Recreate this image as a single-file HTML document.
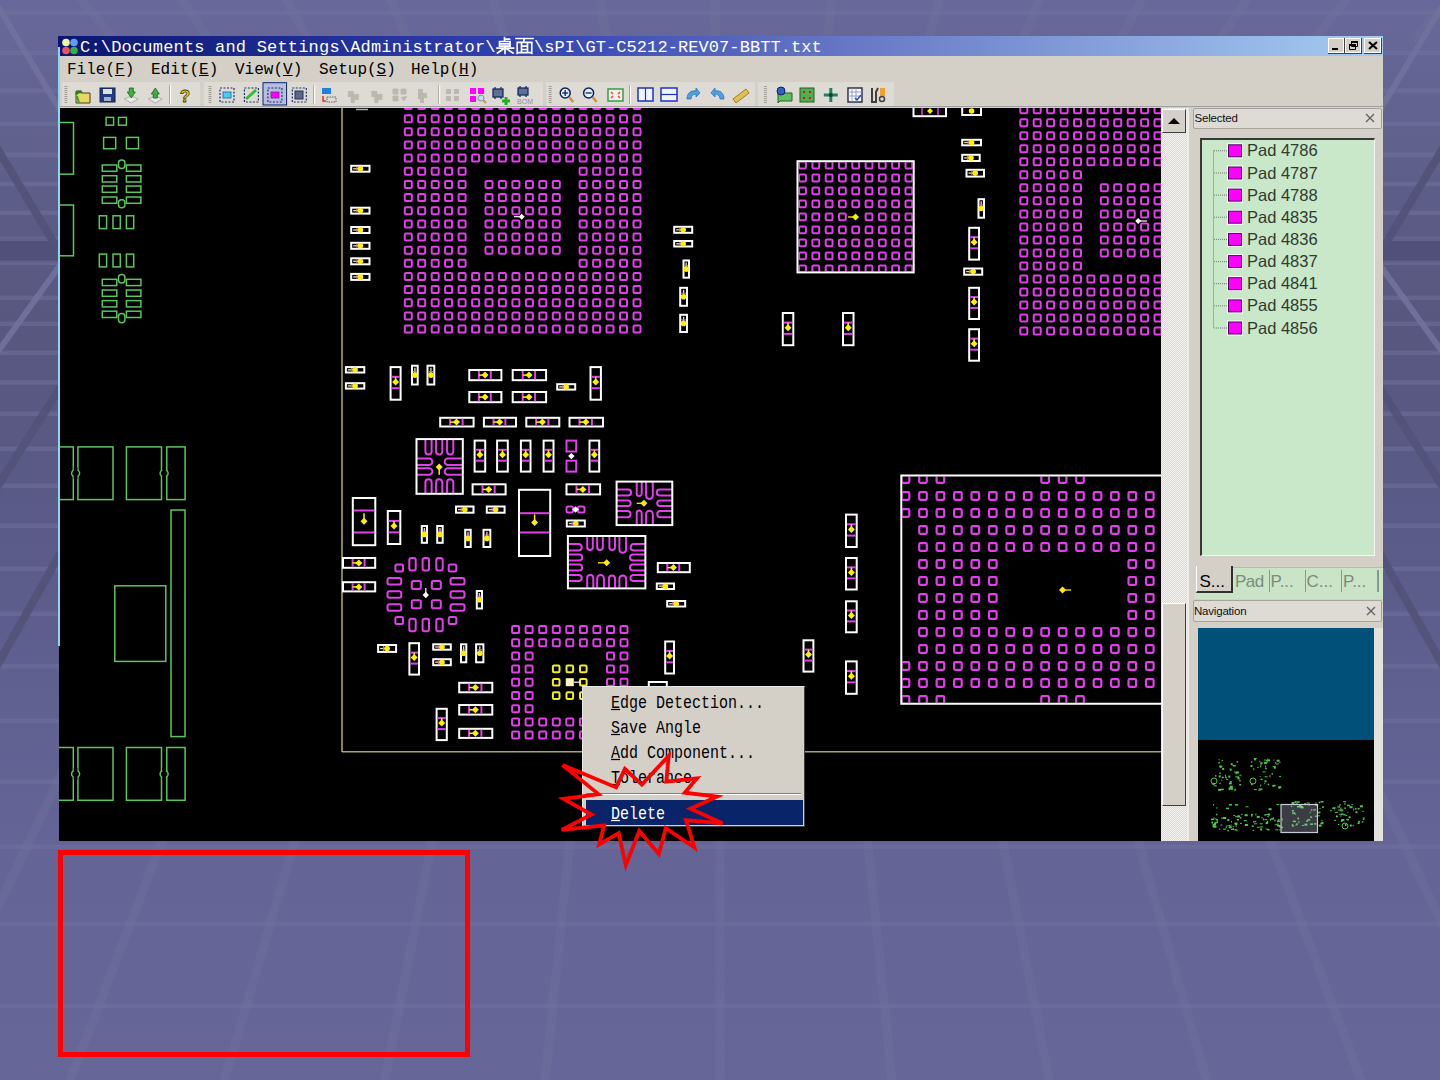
<!DOCTYPE html>
<html><head><meta charset="utf-8">
<style>
*{margin:0;padding:0;box-sizing:border-box}
html,body{width:1440px;height:1080px;overflow:hidden}
body{position:relative;background:#666699;font-family:"Liberation Sans",sans-serif}
.abs{position:absolute}
#bg{position:absolute;left:0;top:0}
#title{left:58px;top:36px;width:1325px;height:20px;background:linear-gradient(90deg,#0a1672 0%,#3040b0 34%,#6474c4 58%,#a6ccf2 100%)}
#title .t{position:absolute;left:22px;top:1px;color:#fff;font-family:"Liberation Mono",monospace;font-size:17px;line-height:22px;white-space:pre;letter-spacing:0.1px}
#menubar{left:59px;top:56px;width:1324px;height:52px;background:#d4d0c8}
.mi{position:absolute;top:4px;font-family:"Liberation Mono",monospace;font-size:16px;line-height:20px;color:#000;white-space:pre}
.mi u{text-decoration:underline}
#canvas{left:59px;top:108px;width:1102px;height:733px;background:#000;overflow:hidden}
#scroll{left:1161px;top:108px;width:26px;height:733px;background:#eceae4}
#panel{left:1187px;top:108px;width:196px;height:733px;background:#d4d0c8}
.ctx{left:582px;top:686px;width:223px;height:141px;background:#d4d0c8;border-top:1px solid #e8e6e0;border-left:1px solid #e8e6e0;border-right:1px solid #404040;border-bottom:1px solid #404040}
.ci{position:absolute;left:28px;font-family:"Liberation Mono",monospace;font-size:15px;line-height:18px;color:#000;white-space:pre;transform:scaleY(1.22);transform-origin:0 100%}
#redbox{left:58px;top:850px;width:412px;height:207px;border:5px solid #ff0000}
</style></head><body>
<svg id="bg" width="1440" height="1080" viewBox="0 0 1440 1080"><defs><linearGradient id="bgg" x1="0" y1="0" x2="0" y2="1"><stop offset="0" stop-color="#68689b"/><stop offset="0.12" stop-color="#62628f"/><stop offset="0.21" stop-color="#5b5b86"/><stop offset="0.3" stop-color="#57577f"/><stop offset="0.45" stop-color="#5a5a87"/><stop offset="0.62" stop-color="#5f5f90"/><stop offset="0.78" stop-color="#646496"/><stop offset="1" stop-color="#666699"/></linearGradient></defs>
<rect x="0" y="0" width="1440" height="1080" fill="url(#bgg)"/>
<rect x="0" y="238" width="1440" height="25" fill="#50507a"/>
<rect x="0" y="10.5" width="1440" height="4.5" fill="#72729f" opacity="0.5"/>
<rect x="0" y="50.5" width="1440" height="4.5" fill="#72729f" opacity="0.5"/>
<rect x="0" y="88.5" width="1440" height="4.5" fill="#72729f" opacity="0.5"/>
<rect x="0" y="121.5" width="1440" height="4.5" fill="#72729f" opacity="0.5"/>
<rect x="0" y="152.5" width="1440" height="4.5" fill="#72729f" opacity="0.5"/>
<rect x="0" y="181.5" width="1440" height="4.5" fill="#72729f" opacity="0.5"/>
<rect x="0" y="210.5" width="1440" height="4.5" fill="#72729f" opacity="0.5"/>
<rect x="0" y="236.5" width="1440" height="4.5" fill="#72729f" opacity="0.5"/>
<rect x="0" y="260.5" width="1440" height="4.5" fill="#72729f" opacity="0.5"/>
<rect x="0" y="295.5" width="1440" height="4.5" fill="#72729f" opacity="0.5"/>
<rect x="0" y="321.5" width="1440" height="4.5" fill="#72729f" opacity="0.5"/>
<rect x="0" y="350.5" width="1440" height="4.5" fill="#72729f" opacity="0.5"/>
<rect x="0" y="380.2" width="1440" height="4.5" fill="#72729f" opacity="0.5"/>
<rect x="0" y="411.5" width="1440" height="4.5" fill="#72729f" opacity="0.5"/>
<rect x="0" y="446.5" width="1440" height="4.5" fill="#72729f" opacity="0.5"/>
<rect x="0" y="483.5" width="1440" height="4.5" fill="#72729f" opacity="0.5"/>
<rect x="0" y="523.5" width="1440" height="4.5" fill="#72729f" opacity="0.5"/>
<rect x="0" y="566.5" width="1440" height="4.5" fill="#72729f" opacity="0.5"/>
<rect x="0" y="611.5" width="1440" height="4.5" fill="#72729f" opacity="0.5"/>
<rect x="0" y="664.0" width="1440" height="4.5" fill="#72729f" opacity="0.5"/>
<rect x="0" y="718.5" width="1440" height="4.5" fill="#72729f" opacity="0.5"/>
<rect x="0" y="779.5" width="1440" height="4.5" fill="#72729f" opacity="0.5"/>
<rect x="0" y="844.5" width="1440" height="4.5" fill="#72729f" opacity="0.5"/>
<rect x="0" y="921.5" width="1440" height="4.5" fill="#72729f" opacity="0.5"/>
<rect x="0" y="1003.5" width="1440" height="4.5" fill="#72729f" opacity="0.5"/>
<line x1="80.0" y1="-2" x2="114.6" y2="40" stroke="#72729f" stroke-width="9" opacity="0.42"/>
<line x1="180.0" y1="-2" x2="209.2" y2="40" stroke="#72729f" stroke-width="9" opacity="0.42"/>
<line x1="285.0" y1="-2" x2="308.5" y2="40" stroke="#72729f" stroke-width="9" opacity="0.42"/>
<line x1="390.0" y1="-2" x2="407.8" y2="40" stroke="#72729f" stroke-width="9" opacity="0.42"/>
<line x1="492.5" y1="-2" x2="504.8" y2="40" stroke="#72729f" stroke-width="9" opacity="0.42"/>
<line x1="600.0" y1="-2" x2="606.5" y2="40" stroke="#72729f" stroke-width="9" opacity="0.42"/>
<line x1="715.0" y1="-2" x2="715.3" y2="40" stroke="#72729f" stroke-width="9" opacity="0.42"/>
<line x1="832.5" y1="-2" x2="826.4" y2="40" stroke="#72729f" stroke-width="9" opacity="0.42"/>
<line x1="940.0" y1="-2" x2="928.1" y2="40" stroke="#72729f" stroke-width="9" opacity="0.42"/>
<line x1="1040.0" y1="-2" x2="1022.7" y2="40" stroke="#72729f" stroke-width="9" opacity="0.42"/>
<line x1="1142.5" y1="-2" x2="1119.7" y2="40" stroke="#72729f" stroke-width="9" opacity="0.42"/>
<line x1="1247.5" y1="-2" x2="1219.0" y2="40" stroke="#72729f" stroke-width="9" opacity="0.42"/>
<line x1="1347.5" y1="-2" x2="1313.6" y2="40" stroke="#72729f" stroke-width="9" opacity="0.42"/>
<line x1="1452.0" y1="-2" x2="1412.5" y2="40" stroke="#72729f" stroke-width="9" opacity="0.42"/>
<line x1="68.1" y1="760" x2="-89.0" y2="1090" stroke="#72729f" stroke-width="9" opacity="0.42"/>
<line x1="193.3" y1="760" x2="66.4" y2="1090" stroke="#72729f" stroke-width="9" opacity="0.42"/>
<line x1="318.4" y1="760" x2="221.7" y2="1090" stroke="#72729f" stroke-width="9" opacity="0.42"/>
<line x1="448.4" y1="760" x2="382.9" y2="1090" stroke="#72729f" stroke-width="9" opacity="0.42"/>
<line x1="578.3" y1="760" x2="544.1" y2="1090" stroke="#72729f" stroke-width="9" opacity="0.42"/>
<line x1="720.0" y1="760" x2="720.0" y2="1090" stroke="#72729f" stroke-width="9" opacity="0.42"/>
<line x1="859.4" y1="760" x2="892.9" y2="1090" stroke="#72729f" stroke-width="9" opacity="0.42"/>
<line x1="986.9" y1="760" x2="1051.2" y2="1090" stroke="#72729f" stroke-width="9" opacity="0.42"/>
<line x1="1114.5" y1="760" x2="1209.5" y2="1090" stroke="#72729f" stroke-width="9" opacity="0.42"/>
<line x1="1239.7" y1="760" x2="1364.8" y2="1090" stroke="#72729f" stroke-width="9" opacity="0.42"/>
<line x1="1364.8" y1="760" x2="1520.2" y2="1090" stroke="#72729f" stroke-width="9" opacity="0.42"/>
<line x1="-6" y1="0" x2="66" y2="120" stroke="#72729f" stroke-width="6" opacity="0.9"/>
<line x1="1446" y1="0" x2="1374" y2="120" stroke="#72729f" stroke-width="6" opacity="0.9"/>
<line x1="-6" y1="143" x2="66" y2="263" stroke="#525279" stroke-width="8" opacity="0.9"/>
<line x1="1446" y1="143" x2="1374" y2="263" stroke="#525279" stroke-width="8" opacity="0.9"/>
<line x1="66" y1="257" x2="-6" y2="357" stroke="#72729f" stroke-width="6" opacity="0.9"/>
<line x1="1374" y1="257" x2="1446" y2="357" stroke="#72729f" stroke-width="6" opacity="0.9"/>
<line x1="60" y1="388" x2="-6" y2="492" stroke="#525279" stroke-width="8" opacity="0.9"/>
<line x1="1380" y1="388" x2="1446" y2="492" stroke="#525279" stroke-width="8" opacity="0.9"/>
<line x1="60" y1="554" x2="-6" y2="671" stroke="#525279" stroke-width="8" opacity="0.9"/>
<line x1="1380" y1="554" x2="1446" y2="671" stroke="#525279" stroke-width="8" opacity="0.9"/></svg>

<div class="abs" id="title">
 <svg class="abs" style="left:3px;top:2px" width="18" height="17" viewBox="0 0 18 17">
  <circle cx="5" cy="4.5" r="3.8" fill="#f4f4a0"/><circle cx="13" cy="4.5" r="3.8" fill="#5aa0f0"/>
  <circle cx="5" cy="12.5" r="3.8" fill="#f05060"/><circle cx="13" cy="12.5" r="3.8" fill="#30b040"/>
 </svg>
 <div class="t" style="letter-spacing:0.19px">C:\Documents and Settings\Administrator\</div>
 <div class="t" style="left:476px;letter-spacing:0.08px">\sPI\GT-C5212-REV07-BBTT.txt</div>
 <svg class="abs" style="left:1px;top:0" width="1324" height="20" viewBox="59 36 1324 20">
 <g stroke="#fff" stroke-width="1.7" fill="none" stroke-linecap="square">
  <path d="M504.5 37.5V41M504.5 39.2H509.5"/>
  <path d="M499.5 41.5H510V46.2H499.5ZM499.5 43.8H510"/>
  <path d="M497 48.2H513.5M505 46.5V53.5M504 48.5L497.5 53M506 48.5L513 53"/>
  <path d="M516 38.5H533M524.5 38.5L523.5 42"/>
  <path d="M517.2 53.5V42.3H531.8V53.5M517.2 52.7H531.8M521.5 42.3V52.7M527.5 42.3V52.7M521.5 46.2H527.5M521.5 49.5H527.5"/>
 </g>
</svg>

 <svg class="abs" style="left:1270px;top:2px" width="54" height="16" viewBox="0 0 54 16">
  <rect x="0.5" y="0.5" width="16" height="15" fill="#d4d0c8" stroke="#404040"/><rect x="0.5" y="0.5" width="15" height="14" fill="none" stroke="#fff"/>
  <rect x="4" y="10" width="6" height="2" fill="#000"/>
  <rect x="17.5" y="0.5" width="16" height="15" fill="#d4d0c8" stroke="#404040"/><rect x="17.5" y="0.5" width="15" height="14" fill="none" stroke="#fff"/>
  <path d="M23.5 3.5h6v5h-6zM21.5 6.5h6v5h-6z" fill="#d4d0c8" stroke="#000" stroke-width="1"/><rect x="23" y="3" width="7" height="2" fill="#000"/><rect x="21" y="6" width="7" height="2" fill="#000"/>
  <rect x="36.5" y="0.5" width="17" height="15" fill="#d4d0c8" stroke="#404040"/><rect x="36.5" y="0.5" width="16" height="14" fill="none" stroke="#fff"/>
  <path d="M41 4l8 7M49 4l-8 7" stroke="#000" stroke-width="2"/>
 </svg>
</div>

<div class="abs" id="menubar">
 <div class="mi" style="left:8px">File(<u>F</u>)</div>
 <div class="mi" style="left:92px">Edit(<u>E</u>)</div>
 <div class="mi" style="left:176px">View(<u>V</u>)</div>
 <div class="mi" style="left:260px">Setup(<u>S</u>)</div>
 <div class="mi" style="left:352px">Help(<u>H</u>)</div>
 <svg class="abs" style="left:0;top:25px" width="1324" height="27" viewBox="59 81 1324 27">
<rect x="59" y="106" width="1324" height="1" fill="#a0a0a0"/>
<rect x="62" y="82" width="138" height="24" fill="#dedbd4"/>
<rect x="204" y="82" width="339" height="24" fill="#dedbd4"/>
<rect x="546" y="82" width="209" height="24" fill="#dedbd4"/>
<rect x="758" y="82" width="136" height="24" fill="#dedbd4"/>
<rect x="64.4" y="86" width="3" height="1" fill="#a09c94"/>
<rect x="64.4" y="88" width="3" height="1" fill="#a09c94"/>
<rect x="64.4" y="90" width="3" height="1" fill="#a09c94"/>
<rect x="64.4" y="92" width="3" height="1" fill="#a09c94"/>
<rect x="64.4" y="94" width="3" height="1" fill="#a09c94"/>
<rect x="64.4" y="96" width="3" height="1" fill="#a09c94"/>
<rect x="64.4" y="98" width="3" height="1" fill="#a09c94"/>
<rect x="64.4" y="100" width="3" height="1" fill="#a09c94"/>
<rect x="64.4" y="102" width="3" height="1" fill="#a09c94"/>
<rect x="208.5" y="86" width="3" height="1" fill="#a09c94"/>
<rect x="208.5" y="88" width="3" height="1" fill="#a09c94"/>
<rect x="208.5" y="90" width="3" height="1" fill="#a09c94"/>
<rect x="208.5" y="92" width="3" height="1" fill="#a09c94"/>
<rect x="208.5" y="94" width="3" height="1" fill="#a09c94"/>
<rect x="208.5" y="96" width="3" height="1" fill="#a09c94"/>
<rect x="208.5" y="98" width="3" height="1" fill="#a09c94"/>
<rect x="208.5" y="100" width="3" height="1" fill="#a09c94"/>
<rect x="208.5" y="102" width="3" height="1" fill="#a09c94"/>
<rect x="548.7" y="86" width="3" height="1" fill="#a09c94"/>
<rect x="548.7" y="88" width="3" height="1" fill="#a09c94"/>
<rect x="548.7" y="90" width="3" height="1" fill="#a09c94"/>
<rect x="548.7" y="92" width="3" height="1" fill="#a09c94"/>
<rect x="548.7" y="94" width="3" height="1" fill="#a09c94"/>
<rect x="548.7" y="96" width="3" height="1" fill="#a09c94"/>
<rect x="548.7" y="98" width="3" height="1" fill="#a09c94"/>
<rect x="548.7" y="100" width="3" height="1" fill="#a09c94"/>
<rect x="548.7" y="102" width="3" height="1" fill="#a09c94"/>
<rect x="763.9" y="86" width="3" height="1" fill="#a09c94"/>
<rect x="763.9" y="88" width="3" height="1" fill="#a09c94"/>
<rect x="763.9" y="90" width="3" height="1" fill="#a09c94"/>
<rect x="763.9" y="92" width="3" height="1" fill="#a09c94"/>
<rect x="763.9" y="94" width="3" height="1" fill="#a09c94"/>
<rect x="763.9" y="96" width="3" height="1" fill="#a09c94"/>
<rect x="763.9" y="98" width="3" height="1" fill="#a09c94"/>
<rect x="763.9" y="100" width="3" height="1" fill="#a09c94"/>
<rect x="763.9" y="102" width="3" height="1" fill="#a09c94"/>
<rect x="169.1" y="85" width="1" height="19" fill="#a8a49c"/><rect x="170.1" y="85" width="1" height="19" fill="#fff"/>
<rect x="313.2" y="85" width="1" height="19" fill="#a8a49c"/><rect x="314.2" y="85" width="1" height="19" fill="#fff"/>
<rect x="438.2" y="85" width="1" height="19" fill="#a8a49c"/><rect x="439.2" y="85" width="1" height="19" fill="#fff"/>
<rect x="629.0" y="85" width="1" height="19" fill="#a8a49c"/><rect x="630.0" y="85" width="1" height="19" fill="#fff"/>
<path d="M76 91h5l1 2h8v10h-14z" fill="#e8d860" stroke="#404020" stroke-width="1"/><path d="M76 94l3-2h3" stroke="#208020" stroke-width="2.5" fill="none"/><path d="M77 96l2 7" stroke="#30a030" stroke-width="2"/>
<rect x="100" y="88" width="15" height="14" fill="#203c80" stroke="#102050"/><rect x="103" y="89" width="9" height="5" fill="#e0e0e0"/><rect x="104" y="97" width="7" height="4" fill="#a0b0d0"/>
<path d="M124.30000000000001 99l7 4 7-4-7-3z" fill="#e8e8e8" stroke="#a0a0a0" stroke-width="0.8"/>
<path d="M129.3 88h4v4h2l-4 6-4-6h2z" fill="#40b040" stroke="#206020" stroke-width="0.8"/>
<path d="M148.3 99l7 4 7-4-7-3z" fill="#e8e8e8" stroke="#a0a0a0" stroke-width="0.8"/>
<path d="M151.3 94l4-6 4 6h-2v4h-4v-4z" fill="#40b040" stroke="#206020" stroke-width="0.8"/>
<text x="185" y="102" font-family="Liberation Sans" font-weight="bold" font-size="17" text-anchor="middle" fill="#f0e020" stroke="#404000" stroke-width="0.8">?</text>
<rect x="263" y="82.7" width="23.6" height="22.3" fill="#b6bde0" stroke="#0a246a" stroke-width="1"/>
<rect x="220" y="88" width="14" height="14" fill="none" stroke="#203070" stroke-width="1.2" stroke-dasharray="2 1.5"/>
<rect x="244.4" y="88" width="14" height="14" fill="none" stroke="#203070" stroke-width="1.2" stroke-dasharray="2 1.5"/>
<rect x="267.9" y="88" width="14" height="14" fill="none" stroke="#203070" stroke-width="1.2" stroke-dasharray="2 1.5"/>
<rect x="292.3" y="88" width="14" height="14" fill="none" stroke="#203070" stroke-width="1.2" stroke-dasharray="2 1.5"/>
<rect x="223" y="92" width="8" height="6" fill="#40d0f0" stroke="#2060a0" stroke-width="0.8"/>
<path d="M246 99l10-9" stroke="#30c030" stroke-width="3"/>
<rect x="271" y="92" width="8" height="6" fill="#ff00ff" stroke="#802080" stroke-width="0.8"/>
<rect x="295" y="91" width="8" height="8" fill="#606880" stroke="#203070" stroke-width="1"/>
<rect x="322" y="88" width="9" height="6" fill="#2080e0"/><path d="M323 96v5h3" stroke="#e03020" stroke-width="1.5" fill="none"/><rect x="327" y="97" width="9" height="5" fill="none" stroke="#606060" stroke-dasharray="1.5 1"/>
<path d="M347.8 91h6v3h5v6h-4v3h-4v-6h-3z" fill="#bcb8b0"/>
<path d="M371.3 91h6v3h5v6h-4v3h-4v-6h-3z" fill="#bcb8b0"/>
<path d="M393 89h5v5h-5zM401 89h5v5h-5zM393 96h5v5h-5zM401 97l3 4 3-5" fill="#bcb8b0" stroke="#bcb8b0"/>
<path d="M418 89h5v4h4v5h-3v5h-4v-4h-2z" fill="#bcb8b0"/>
<path d="M446 89h5v5h-5zM454 89h5v5h-5zM446 96h5v5h-5zM454 96h5v5h-5z" fill="#bcb8b0"/>
<path d="M470 88h6v6h-6zM478 88h6v6h-6zM470 96h6v6h-6z" fill="#ff00ff"/><circle cx="481" cy="98" r="3" fill="#c0e0f0" stroke="#8090a0"/><path d="M483 100l3 3" stroke="#d09050" stroke-width="2"/>
<rect x="493" y="89" width="10" height="8" fill="#607090" stroke="#102060" stroke-width="1.2"/><path d="M495 87v2M501 87v2M495 97v2M501 97v2" stroke="#102060" stroke-width="1.2"/><path d="M506 97v8M502 101h8" stroke="#20b020" stroke-width="3"/>
<rect x="518" y="88" width="10" height="7" fill="#607090" stroke="#102060" stroke-width="1.2"/><path d="M520 86v2M526 86v2M520 95v2M526 95v2" stroke="#102060" stroke-width="1.2"/><text x="525" y="104" font-family="Liberation Sans" font-size="7" text-anchor="middle" fill="#9090a0">BOM</text>
<circle cx="565.2" cy="93" r="5" fill="#e0f0ff" stroke="#102060" stroke-width="1.5"/><path d="M562.2 93h6" stroke="#102060" stroke-width="1.3"/><path d="M569.2 97l4 5" stroke="#d09040" stroke-width="2.5"/>
<path d="M565.2 90v6" stroke="#102060" stroke-width="1.3"/>
<circle cx="588.6" cy="93" r="5" fill="#e0f0ff" stroke="#102060" stroke-width="1.5"/><path d="M585.6 93h6" stroke="#102060" stroke-width="1.3"/><path d="M592.6 97l4 5" stroke="#d09040" stroke-width="2.5"/>
<rect x="608" y="89" width="15" height="12" fill="#f8f0e8" stroke="#30a040" stroke-width="1.5"/><path d="M611 92l2 2M620 92l-2 2M611 98l2-2M620 98l-2-2" stroke="#f04040" stroke-width="1.5"/>
<rect x="638" y="88" width="15" height="13" fill="#f0f4ff" stroke="#2030c0" stroke-width="1.5"/><path d="M645.5 88v13" stroke="#2030c0" stroke-width="1.2"/>
<rect x="661" y="88" width="16" height="13" fill="#f0f4ff" stroke="#2030c0" stroke-width="1.5"/><path d="M661 94.5h16" stroke="#2030c0" stroke-width="1.2"/>
<path d="M687 99c0-6 4-9 9-8l0-3 4 5-4 4v-3c-3 0-5 2-5 5z" fill="#50a0e0" stroke="#3070c0" stroke-width="0.8"/>
<path d="M724 99c0-6-4-9-9-8l0-3-4 5 4 4v-3c3 0 5 2 5 5z" fill="#50a0e0" stroke="#3070c0" stroke-width="0.8"/>
<path d="M733 99l13-10 3 4-13 10z" fill="#e0c050" stroke="#a08020" stroke-width="1"/>
<path d="M778 93h14v8h-12l-2 2z" fill="#60c060" stroke="#206020" stroke-width="1"/><circle cx="781" cy="91" r="4" fill="#3060c0" stroke="#102060"/>
<rect x="800" y="88" width="14" height="14" fill="#50b050" stroke="#206020"/><path d="M803 91h2v2h-2zM809 91h2v2h-2zM803 97h2v2h-2zM809 97h2v2h-2z" fill="#c02020"/>
<path d="M830.8 88v14M823.8 95h14" stroke="#208060" stroke-width="3"/><circle cx="830.8" cy="95" r="2" fill="#104030"/>
<rect x="848" y="88" width="14" height="14" fill="#f8f8ff" stroke="#303050" stroke-width="1.5"/><path d="M852 88v14M856 88v14M848 92h14M848 96h14" stroke="#8090b0" stroke-width="0.8"/><path d="M855 98l2 2 4-5" stroke="#2050c0" stroke-width="1.5" fill="none"/>
<path d="M872 88v14h4V92l2-4" fill="none" stroke="#404040" stroke-width="2"/><rect x="880" y="88" width="5" height="8" fill="#f0a030"/><circle cx="882" cy="99" r="2.5" fill="none" stroke="#404040" stroke-width="1.5"/>
</svg>
</div>

<div class="abs" id="canvas">
<svg width="1102" height="733" viewBox="59 108 1102 733" style="position:absolute;left:0;top:0">
<rect x="56.0" y="122.5" width="17.5" height="51.7" fill="none" stroke="#5cc45c" stroke-width="1.5" />
<rect x="56.0" y="205.0" width="17.5" height="50.8" fill="none" stroke="#5cc45c" stroke-width="1.5" />
<rect x="106.1" y="117.4" width="7.5" height="7.8" fill="none" stroke="#5cc45c" stroke-width="1.5" />
<rect x="118.5" y="117.4" width="7.9" height="7.8" fill="none" stroke="#5cc45c" stroke-width="1.5" />
<rect x="103.6" y="137.4" width="12.1" height="11.3" fill="none" stroke="#5cc45c" stroke-width="1.5" />
<rect x="126.4" y="137.4" width="12.1" height="11.3" fill="none" stroke="#5cc45c" stroke-width="1.5" />
<rect x="102.3" y="165.0" width="14.5" height="6.3" fill="none" stroke="#5cc45c" stroke-width="1.5" />
<rect x="126.4" y="165.0" width="14.5" height="6.3" fill="none" stroke="#5cc45c" stroke-width="1.5" />
<rect x="102.3" y="175.7" width="14.5" height="6.3" fill="none" stroke="#5cc45c" stroke-width="1.5" />
<rect x="126.4" y="175.7" width="14.5" height="6.3" fill="none" stroke="#5cc45c" stroke-width="1.5" />
<rect x="102.3" y="186.0" width="14.5" height="6.3" fill="none" stroke="#5cc45c" stroke-width="1.5" />
<rect x="126.4" y="186.0" width="14.5" height="6.3" fill="none" stroke="#5cc45c" stroke-width="1.5" />
<rect x="102.3" y="197.0" width="14.5" height="6.3" fill="none" stroke="#5cc45c" stroke-width="1.5" />
<rect x="126.4" y="197.0" width="14.5" height="6.3" fill="none" stroke="#5cc45c" stroke-width="1.5" />
<rect x="118.5" y="160" width="6.4" height="8.5" rx="3" fill="none" stroke="#5cc45c" stroke-width="1.5"/>
<rect x="118.5" y="199.8" width="6.4" height="7.9" rx="3" fill="none" stroke="#5cc45c" stroke-width="1.5"/>
<rect x="102.3" y="279.3" width="14.5" height="6.3" fill="none" stroke="#5cc45c" stroke-width="1.5" />
<rect x="126.4" y="279.3" width="14.5" height="6.3" fill="none" stroke="#5cc45c" stroke-width="1.5" />
<rect x="102.3" y="290.0" width="14.5" height="6.3" fill="none" stroke="#5cc45c" stroke-width="1.5" />
<rect x="126.4" y="290.0" width="14.5" height="6.3" fill="none" stroke="#5cc45c" stroke-width="1.5" />
<rect x="102.3" y="300.6" width="14.5" height="6.3" fill="none" stroke="#5cc45c" stroke-width="1.5" />
<rect x="126.4" y="300.6" width="14.5" height="6.3" fill="none" stroke="#5cc45c" stroke-width="1.5" />
<rect x="102.3" y="311.2" width="14.5" height="6.3" fill="none" stroke="#5cc45c" stroke-width="1.5" />
<rect x="126.4" y="311.2" width="14.5" height="6.3" fill="none" stroke="#5cc45c" stroke-width="1.5" />
<rect x="118.5" y="274.4" width="6.4" height="8.6" rx="3" fill="none" stroke="#5cc45c" stroke-width="1.5"/>
<rect x="118.5" y="313.4" width="6.4" height="9.3" rx="3" fill="none" stroke="#5cc45c" stroke-width="1.5"/>
<rect x="99.3" y="215.8" width="7.3" height="12.8" fill="none" stroke="#5cc45c" stroke-width="1.5" />
<rect x="113.0" y="215.8" width="7.3" height="12.8" fill="none" stroke="#5cc45c" stroke-width="1.5" />
<rect x="126.4" y="215.8" width="7.3" height="12.8" fill="none" stroke="#5cc45c" stroke-width="1.5" />
<rect x="99.3" y="254.1" width="7.3" height="12.8" fill="none" stroke="#5cc45c" stroke-width="1.5" />
<rect x="113.0" y="254.1" width="7.3" height="12.8" fill="none" stroke="#5cc45c" stroke-width="1.5" />
<rect x="126.4" y="254.1" width="7.3" height="12.8" fill="none" stroke="#5cc45c" stroke-width="1.5" />
<rect x="56.0" y="446.9" width="17.3" height="52.7" fill="none" stroke="#5cc45c" stroke-width="1.5" />
<rect x="77.9" y="446.9" width="35.1" height="52.7" fill="none" stroke="#5cc45c" stroke-width="1.5" />
<rect x="126.4" y="446.9" width="35.1" height="52.7" fill="none" stroke="#5cc45c" stroke-width="1.5" />
<rect x="166.8" y="446.9" width="18.3" height="52.7" fill="none" stroke="#5cc45c" stroke-width="1.5" />
<ellipse cx="75.6" cy="473.2" rx="4" ry="3.5" fill="#000" stroke="#5cc45c" stroke-width="1.5"/>
<ellipse cx="164.1" cy="473.2" rx="4" ry="3.5" fill="#000" stroke="#5cc45c" stroke-width="1.5"/>
<rect x="73.8" y="467.2" width="3.6" height="12" fill="#000"/>
<rect x="162.3" y="467.2" width="3.6" height="12" fill="#000"/>
<rect x="56.0" y="747.5" width="17.3" height="52.8" fill="none" stroke="#5cc45c" stroke-width="1.5" />
<rect x="77.9" y="747.5" width="35.1" height="52.8" fill="none" stroke="#5cc45c" stroke-width="1.5" />
<rect x="126.4" y="747.5" width="35.1" height="52.8" fill="none" stroke="#5cc45c" stroke-width="1.5" />
<rect x="166.8" y="747.5" width="18.3" height="52.8" fill="none" stroke="#5cc45c" stroke-width="1.5" />
<ellipse cx="75.6" cy="773.9" rx="4" ry="3.5" fill="#000" stroke="#5cc45c" stroke-width="1.5"/>
<ellipse cx="164.1" cy="773.9" rx="4" ry="3.5" fill="#000" stroke="#5cc45c" stroke-width="1.5"/>
<rect x="73.8" y="767.9" width="3.6" height="12" fill="#000"/>
<rect x="162.3" y="767.9" width="3.6" height="12" fill="#000"/>
<rect x="171.0" y="510.0" width="14.0" height="226.6" fill="none" stroke="#5cc45c" stroke-width="1.5" />
<rect x="114.8" y="585.8" width="51.0" height="75.6" fill="none" stroke="#5cc45c" stroke-width="1.5" />
<line x1="342.0" y1="108.0" x2="342.0" y2="752.0" stroke="#a8a468" stroke-width="1.6"/>
<line x1="342.0" y1="751.8" x2="1161.0" y2="751.8" stroke="#a8a468" stroke-width="1.6"/>
<line x1="356.0" y1="109.5" x2="368.0" y2="109.5" stroke="#aaaaaa" stroke-width="1.5"/>
<rect x="404.8" y="102.0" width="7.0" height="7.0" rx="1.2" fill="none" stroke="#e040e8" stroke-width="2.0"/>
<rect x="418.2" y="102.0" width="7.0" height="7.0" rx="1.2" fill="none" stroke="#e040e8" stroke-width="2.0"/>
<rect x="431.7" y="102.0" width="7.0" height="7.0" rx="1.2" fill="none" stroke="#e040e8" stroke-width="2.0"/>
<rect x="445.1" y="102.0" width="7.0" height="7.0" rx="1.2" fill="none" stroke="#e040e8" stroke-width="2.0"/>
<rect x="458.6" y="102.0" width="7.0" height="7.0" rx="1.2" fill="none" stroke="#e040e8" stroke-width="2.0"/>
<rect x="472.1" y="102.0" width="7.0" height="7.0" rx="1.2" fill="none" stroke="#e040e8" stroke-width="2.0"/>
<rect x="485.5" y="102.0" width="7.0" height="7.0" rx="1.2" fill="none" stroke="#e040e8" stroke-width="2.0"/>
<rect x="498.9" y="102.0" width="7.0" height="7.0" rx="1.2" fill="none" stroke="#e040e8" stroke-width="2.0"/>
<rect x="512.4" y="102.0" width="7.0" height="7.0" rx="1.2" fill="none" stroke="#e040e8" stroke-width="2.0"/>
<rect x="525.9" y="102.0" width="7.0" height="7.0" rx="1.2" fill="none" stroke="#e040e8" stroke-width="2.0"/>
<rect x="539.3" y="102.0" width="7.0" height="7.0" rx="1.2" fill="none" stroke="#e040e8" stroke-width="2.0"/>
<rect x="552.8" y="102.0" width="7.0" height="7.0" rx="1.2" fill="none" stroke="#e040e8" stroke-width="2.0"/>
<rect x="566.2" y="102.0" width="7.0" height="7.0" rx="1.2" fill="none" stroke="#e040e8" stroke-width="2.0"/>
<rect x="579.6" y="102.0" width="7.0" height="7.0" rx="1.2" fill="none" stroke="#e040e8" stroke-width="2.0"/>
<rect x="593.1" y="102.0" width="7.0" height="7.0" rx="1.2" fill="none" stroke="#e040e8" stroke-width="2.0"/>
<rect x="606.5" y="102.0" width="7.0" height="7.0" rx="1.2" fill="none" stroke="#e040e8" stroke-width="2.0"/>
<rect x="620.0" y="102.0" width="7.0" height="7.0" rx="1.2" fill="none" stroke="#e040e8" stroke-width="2.0"/>
<rect x="633.5" y="102.0" width="7.0" height="7.0" rx="1.2" fill="none" stroke="#e040e8" stroke-width="2.0"/>
<rect x="404.8" y="115.2" width="7.0" height="7.0" rx="1.2" fill="none" stroke="#e040e8" stroke-width="2.0"/>
<rect x="418.2" y="115.2" width="7.0" height="7.0" rx="1.2" fill="none" stroke="#e040e8" stroke-width="2.0"/>
<rect x="431.7" y="115.2" width="7.0" height="7.0" rx="1.2" fill="none" stroke="#e040e8" stroke-width="2.0"/>
<rect x="445.1" y="115.2" width="7.0" height="7.0" rx="1.2" fill="none" stroke="#e040e8" stroke-width="2.0"/>
<rect x="458.6" y="115.2" width="7.0" height="7.0" rx="1.2" fill="none" stroke="#e040e8" stroke-width="2.0"/>
<rect x="472.1" y="115.2" width="7.0" height="7.0" rx="1.2" fill="none" stroke="#e040e8" stroke-width="2.0"/>
<rect x="485.5" y="115.2" width="7.0" height="7.0" rx="1.2" fill="none" stroke="#e040e8" stroke-width="2.0"/>
<rect x="498.9" y="115.2" width="7.0" height="7.0" rx="1.2" fill="none" stroke="#e040e8" stroke-width="2.0"/>
<rect x="512.4" y="115.2" width="7.0" height="7.0" rx="1.2" fill="none" stroke="#e040e8" stroke-width="2.0"/>
<rect x="525.9" y="115.2" width="7.0" height="7.0" rx="1.2" fill="none" stroke="#e040e8" stroke-width="2.0"/>
<rect x="539.3" y="115.2" width="7.0" height="7.0" rx="1.2" fill="none" stroke="#e040e8" stroke-width="2.0"/>
<rect x="552.8" y="115.2" width="7.0" height="7.0" rx="1.2" fill="none" stroke="#e040e8" stroke-width="2.0"/>
<rect x="566.2" y="115.2" width="7.0" height="7.0" rx="1.2" fill="none" stroke="#e040e8" stroke-width="2.0"/>
<rect x="579.6" y="115.2" width="7.0" height="7.0" rx="1.2" fill="none" stroke="#e040e8" stroke-width="2.0"/>
<rect x="593.1" y="115.2" width="7.0" height="7.0" rx="1.2" fill="none" stroke="#e040e8" stroke-width="2.0"/>
<rect x="606.5" y="115.2" width="7.0" height="7.0" rx="1.2" fill="none" stroke="#e040e8" stroke-width="2.0"/>
<rect x="620.0" y="115.2" width="7.0" height="7.0" rx="1.2" fill="none" stroke="#e040e8" stroke-width="2.0"/>
<rect x="633.5" y="115.2" width="7.0" height="7.0" rx="1.2" fill="none" stroke="#e040e8" stroke-width="2.0"/>
<rect x="404.8" y="128.3" width="7.0" height="7.0" rx="1.2" fill="none" stroke="#e040e8" stroke-width="2.0"/>
<rect x="418.2" y="128.3" width="7.0" height="7.0" rx="1.2" fill="none" stroke="#e040e8" stroke-width="2.0"/>
<rect x="431.7" y="128.3" width="7.0" height="7.0" rx="1.2" fill="none" stroke="#e040e8" stroke-width="2.0"/>
<rect x="445.1" y="128.3" width="7.0" height="7.0" rx="1.2" fill="none" stroke="#e040e8" stroke-width="2.0"/>
<rect x="458.6" y="128.3" width="7.0" height="7.0" rx="1.2" fill="none" stroke="#e040e8" stroke-width="2.0"/>
<rect x="472.1" y="128.3" width="7.0" height="7.0" rx="1.2" fill="none" stroke="#e040e8" stroke-width="2.0"/>
<rect x="485.5" y="128.3" width="7.0" height="7.0" rx="1.2" fill="none" stroke="#e040e8" stroke-width="2.0"/>
<rect x="498.9" y="128.3" width="7.0" height="7.0" rx="1.2" fill="none" stroke="#e040e8" stroke-width="2.0"/>
<rect x="512.4" y="128.3" width="7.0" height="7.0" rx="1.2" fill="none" stroke="#e040e8" stroke-width="2.0"/>
<rect x="525.9" y="128.3" width="7.0" height="7.0" rx="1.2" fill="none" stroke="#e040e8" stroke-width="2.0"/>
<rect x="539.3" y="128.3" width="7.0" height="7.0" rx="1.2" fill="none" stroke="#e040e8" stroke-width="2.0"/>
<rect x="552.8" y="128.3" width="7.0" height="7.0" rx="1.2" fill="none" stroke="#e040e8" stroke-width="2.0"/>
<rect x="566.2" y="128.3" width="7.0" height="7.0" rx="1.2" fill="none" stroke="#e040e8" stroke-width="2.0"/>
<rect x="579.6" y="128.3" width="7.0" height="7.0" rx="1.2" fill="none" stroke="#e040e8" stroke-width="2.0"/>
<rect x="593.1" y="128.3" width="7.0" height="7.0" rx="1.2" fill="none" stroke="#e040e8" stroke-width="2.0"/>
<rect x="606.5" y="128.3" width="7.0" height="7.0" rx="1.2" fill="none" stroke="#e040e8" stroke-width="2.0"/>
<rect x="620.0" y="128.3" width="7.0" height="7.0" rx="1.2" fill="none" stroke="#e040e8" stroke-width="2.0"/>
<rect x="633.5" y="128.3" width="7.0" height="7.0" rx="1.2" fill="none" stroke="#e040e8" stroke-width="2.0"/>
<rect x="404.8" y="141.4" width="7.0" height="7.0" rx="1.2" fill="none" stroke="#e040e8" stroke-width="2.0"/>
<rect x="418.2" y="141.4" width="7.0" height="7.0" rx="1.2" fill="none" stroke="#e040e8" stroke-width="2.0"/>
<rect x="431.7" y="141.4" width="7.0" height="7.0" rx="1.2" fill="none" stroke="#e040e8" stroke-width="2.0"/>
<rect x="445.1" y="141.4" width="7.0" height="7.0" rx="1.2" fill="none" stroke="#e040e8" stroke-width="2.0"/>
<rect x="458.6" y="141.4" width="7.0" height="7.0" rx="1.2" fill="none" stroke="#e040e8" stroke-width="2.0"/>
<rect x="472.1" y="141.4" width="7.0" height="7.0" rx="1.2" fill="none" stroke="#e040e8" stroke-width="2.0"/>
<rect x="485.5" y="141.4" width="7.0" height="7.0" rx="1.2" fill="none" stroke="#e040e8" stroke-width="2.0"/>
<rect x="498.9" y="141.4" width="7.0" height="7.0" rx="1.2" fill="none" stroke="#e040e8" stroke-width="2.0"/>
<rect x="512.4" y="141.4" width="7.0" height="7.0" rx="1.2" fill="none" stroke="#e040e8" stroke-width="2.0"/>
<rect x="525.9" y="141.4" width="7.0" height="7.0" rx="1.2" fill="none" stroke="#e040e8" stroke-width="2.0"/>
<rect x="539.3" y="141.4" width="7.0" height="7.0" rx="1.2" fill="none" stroke="#e040e8" stroke-width="2.0"/>
<rect x="552.8" y="141.4" width="7.0" height="7.0" rx="1.2" fill="none" stroke="#e040e8" stroke-width="2.0"/>
<rect x="566.2" y="141.4" width="7.0" height="7.0" rx="1.2" fill="none" stroke="#e040e8" stroke-width="2.0"/>
<rect x="579.6" y="141.4" width="7.0" height="7.0" rx="1.2" fill="none" stroke="#e040e8" stroke-width="2.0"/>
<rect x="593.1" y="141.4" width="7.0" height="7.0" rx="1.2" fill="none" stroke="#e040e8" stroke-width="2.0"/>
<rect x="606.5" y="141.4" width="7.0" height="7.0" rx="1.2" fill="none" stroke="#e040e8" stroke-width="2.0"/>
<rect x="620.0" y="141.4" width="7.0" height="7.0" rx="1.2" fill="none" stroke="#e040e8" stroke-width="2.0"/>
<rect x="633.5" y="141.4" width="7.0" height="7.0" rx="1.2" fill="none" stroke="#e040e8" stroke-width="2.0"/>
<rect x="404.8" y="154.6" width="7.0" height="7.0" rx="1.2" fill="none" stroke="#e040e8" stroke-width="2.0"/>
<rect x="418.2" y="154.6" width="7.0" height="7.0" rx="1.2" fill="none" stroke="#e040e8" stroke-width="2.0"/>
<rect x="431.7" y="154.6" width="7.0" height="7.0" rx="1.2" fill="none" stroke="#e040e8" stroke-width="2.0"/>
<rect x="445.1" y="154.6" width="7.0" height="7.0" rx="1.2" fill="none" stroke="#e040e8" stroke-width="2.0"/>
<rect x="458.6" y="154.6" width="7.0" height="7.0" rx="1.2" fill="none" stroke="#e040e8" stroke-width="2.0"/>
<rect x="472.1" y="154.6" width="7.0" height="7.0" rx="1.2" fill="none" stroke="#e040e8" stroke-width="2.0"/>
<rect x="485.5" y="154.6" width="7.0" height="7.0" rx="1.2" fill="none" stroke="#e040e8" stroke-width="2.0"/>
<rect x="498.9" y="154.6" width="7.0" height="7.0" rx="1.2" fill="none" stroke="#e040e8" stroke-width="2.0"/>
<rect x="512.4" y="154.6" width="7.0" height="7.0" rx="1.2" fill="none" stroke="#e040e8" stroke-width="2.0"/>
<rect x="525.9" y="154.6" width="7.0" height="7.0" rx="1.2" fill="none" stroke="#e040e8" stroke-width="2.0"/>
<rect x="539.3" y="154.6" width="7.0" height="7.0" rx="1.2" fill="none" stroke="#e040e8" stroke-width="2.0"/>
<rect x="552.8" y="154.6" width="7.0" height="7.0" rx="1.2" fill="none" stroke="#e040e8" stroke-width="2.0"/>
<rect x="566.2" y="154.6" width="7.0" height="7.0" rx="1.2" fill="none" stroke="#e040e8" stroke-width="2.0"/>
<rect x="579.6" y="154.6" width="7.0" height="7.0" rx="1.2" fill="none" stroke="#e040e8" stroke-width="2.0"/>
<rect x="593.1" y="154.6" width="7.0" height="7.0" rx="1.2" fill="none" stroke="#e040e8" stroke-width="2.0"/>
<rect x="606.5" y="154.6" width="7.0" height="7.0" rx="1.2" fill="none" stroke="#e040e8" stroke-width="2.0"/>
<rect x="620.0" y="154.6" width="7.0" height="7.0" rx="1.2" fill="none" stroke="#e040e8" stroke-width="2.0"/>
<rect x="633.5" y="154.6" width="7.0" height="7.0" rx="1.2" fill="none" stroke="#e040e8" stroke-width="2.0"/>
<rect x="404.8" y="167.8" width="7.0" height="7.0" rx="1.2" fill="none" stroke="#e040e8" stroke-width="2.0"/>
<rect x="418.2" y="167.8" width="7.0" height="7.0" rx="1.2" fill="none" stroke="#e040e8" stroke-width="2.0"/>
<rect x="431.7" y="167.8" width="7.0" height="7.0" rx="1.2" fill="none" stroke="#e040e8" stroke-width="2.0"/>
<rect x="445.1" y="167.8" width="7.0" height="7.0" rx="1.2" fill="none" stroke="#e040e8" stroke-width="2.0"/>
<rect x="458.6" y="167.8" width="7.0" height="7.0" rx="1.2" fill="none" stroke="#e040e8" stroke-width="2.0"/>
<rect x="579.6" y="167.8" width="7.0" height="7.0" rx="1.2" fill="none" stroke="#e040e8" stroke-width="2.0"/>
<rect x="593.1" y="167.8" width="7.0" height="7.0" rx="1.2" fill="none" stroke="#e040e8" stroke-width="2.0"/>
<rect x="606.5" y="167.8" width="7.0" height="7.0" rx="1.2" fill="none" stroke="#e040e8" stroke-width="2.0"/>
<rect x="620.0" y="167.8" width="7.0" height="7.0" rx="1.2" fill="none" stroke="#e040e8" stroke-width="2.0"/>
<rect x="633.5" y="167.8" width="7.0" height="7.0" rx="1.2" fill="none" stroke="#e040e8" stroke-width="2.0"/>
<rect x="404.8" y="180.9" width="7.0" height="7.0" rx="1.2" fill="none" stroke="#e040e8" stroke-width="2.0"/>
<rect x="418.2" y="180.9" width="7.0" height="7.0" rx="1.2" fill="none" stroke="#e040e8" stroke-width="2.0"/>
<rect x="431.7" y="180.9" width="7.0" height="7.0" rx="1.2" fill="none" stroke="#e040e8" stroke-width="2.0"/>
<rect x="445.1" y="180.9" width="7.0" height="7.0" rx="1.2" fill="none" stroke="#e040e8" stroke-width="2.0"/>
<rect x="458.6" y="180.9" width="7.0" height="7.0" rx="1.2" fill="none" stroke="#e040e8" stroke-width="2.0"/>
<rect x="485.5" y="180.9" width="7.0" height="7.0" rx="1.2" fill="none" stroke="#e040e8" stroke-width="2.0"/>
<rect x="498.9" y="180.9" width="7.0" height="7.0" rx="1.2" fill="none" stroke="#e040e8" stroke-width="2.0"/>
<rect x="512.4" y="180.9" width="7.0" height="7.0" rx="1.2" fill="none" stroke="#e040e8" stroke-width="2.0"/>
<rect x="525.9" y="180.9" width="7.0" height="7.0" rx="1.2" fill="none" stroke="#e040e8" stroke-width="2.0"/>
<rect x="539.3" y="180.9" width="7.0" height="7.0" rx="1.2" fill="none" stroke="#e040e8" stroke-width="2.0"/>
<rect x="552.8" y="180.9" width="7.0" height="7.0" rx="1.2" fill="none" stroke="#e040e8" stroke-width="2.0"/>
<rect x="579.6" y="180.9" width="7.0" height="7.0" rx="1.2" fill="none" stroke="#e040e8" stroke-width="2.0"/>
<rect x="593.1" y="180.9" width="7.0" height="7.0" rx="1.2" fill="none" stroke="#e040e8" stroke-width="2.0"/>
<rect x="606.5" y="180.9" width="7.0" height="7.0" rx="1.2" fill="none" stroke="#e040e8" stroke-width="2.0"/>
<rect x="620.0" y="180.9" width="7.0" height="7.0" rx="1.2" fill="none" stroke="#e040e8" stroke-width="2.0"/>
<rect x="633.5" y="180.9" width="7.0" height="7.0" rx="1.2" fill="none" stroke="#e040e8" stroke-width="2.0"/>
<rect x="404.8" y="194.1" width="7.0" height="7.0" rx="1.2" fill="none" stroke="#e040e8" stroke-width="2.0"/>
<rect x="418.2" y="194.1" width="7.0" height="7.0" rx="1.2" fill="none" stroke="#e040e8" stroke-width="2.0"/>
<rect x="431.7" y="194.1" width="7.0" height="7.0" rx="1.2" fill="none" stroke="#e040e8" stroke-width="2.0"/>
<rect x="445.1" y="194.1" width="7.0" height="7.0" rx="1.2" fill="none" stroke="#e040e8" stroke-width="2.0"/>
<rect x="458.6" y="194.1" width="7.0" height="7.0" rx="1.2" fill="none" stroke="#e040e8" stroke-width="2.0"/>
<rect x="485.5" y="194.1" width="7.0" height="7.0" rx="1.2" fill="none" stroke="#e040e8" stroke-width="2.0"/>
<rect x="498.9" y="194.1" width="7.0" height="7.0" rx="1.2" fill="none" stroke="#e040e8" stroke-width="2.0"/>
<rect x="512.4" y="194.1" width="7.0" height="7.0" rx="1.2" fill="none" stroke="#e040e8" stroke-width="2.0"/>
<rect x="525.9" y="194.1" width="7.0" height="7.0" rx="1.2" fill="none" stroke="#e040e8" stroke-width="2.0"/>
<rect x="539.3" y="194.1" width="7.0" height="7.0" rx="1.2" fill="none" stroke="#e040e8" stroke-width="2.0"/>
<rect x="552.8" y="194.1" width="7.0" height="7.0" rx="1.2" fill="none" stroke="#e040e8" stroke-width="2.0"/>
<rect x="579.6" y="194.1" width="7.0" height="7.0" rx="1.2" fill="none" stroke="#e040e8" stroke-width="2.0"/>
<rect x="593.1" y="194.1" width="7.0" height="7.0" rx="1.2" fill="none" stroke="#e040e8" stroke-width="2.0"/>
<rect x="606.5" y="194.1" width="7.0" height="7.0" rx="1.2" fill="none" stroke="#e040e8" stroke-width="2.0"/>
<rect x="620.0" y="194.1" width="7.0" height="7.0" rx="1.2" fill="none" stroke="#e040e8" stroke-width="2.0"/>
<rect x="633.5" y="194.1" width="7.0" height="7.0" rx="1.2" fill="none" stroke="#e040e8" stroke-width="2.0"/>
<rect x="404.8" y="207.2" width="7.0" height="7.0" rx="1.2" fill="none" stroke="#e040e8" stroke-width="2.0"/>
<rect x="418.2" y="207.2" width="7.0" height="7.0" rx="1.2" fill="none" stroke="#e040e8" stroke-width="2.0"/>
<rect x="431.7" y="207.2" width="7.0" height="7.0" rx="1.2" fill="none" stroke="#e040e8" stroke-width="2.0"/>
<rect x="445.1" y="207.2" width="7.0" height="7.0" rx="1.2" fill="none" stroke="#e040e8" stroke-width="2.0"/>
<rect x="458.6" y="207.2" width="7.0" height="7.0" rx="1.2" fill="none" stroke="#e040e8" stroke-width="2.0"/>
<rect x="485.5" y="207.2" width="7.0" height="7.0" rx="1.2" fill="none" stroke="#e040e8" stroke-width="2.0"/>
<rect x="498.9" y="207.2" width="7.0" height="7.0" rx="1.2" fill="none" stroke="#e040e8" stroke-width="2.0"/>
<rect x="512.4" y="207.2" width="7.0" height="7.0" rx="1.2" fill="none" stroke="#e040e8" stroke-width="2.0"/>
<rect x="525.9" y="207.2" width="7.0" height="7.0" rx="1.2" fill="none" stroke="#e040e8" stroke-width="2.0"/>
<rect x="539.3" y="207.2" width="7.0" height="7.0" rx="1.2" fill="none" stroke="#e040e8" stroke-width="2.0"/>
<rect x="552.8" y="207.2" width="7.0" height="7.0" rx="1.2" fill="none" stroke="#e040e8" stroke-width="2.0"/>
<rect x="579.6" y="207.2" width="7.0" height="7.0" rx="1.2" fill="none" stroke="#e040e8" stroke-width="2.0"/>
<rect x="593.1" y="207.2" width="7.0" height="7.0" rx="1.2" fill="none" stroke="#e040e8" stroke-width="2.0"/>
<rect x="606.5" y="207.2" width="7.0" height="7.0" rx="1.2" fill="none" stroke="#e040e8" stroke-width="2.0"/>
<rect x="620.0" y="207.2" width="7.0" height="7.0" rx="1.2" fill="none" stroke="#e040e8" stroke-width="2.0"/>
<rect x="633.5" y="207.2" width="7.0" height="7.0" rx="1.2" fill="none" stroke="#e040e8" stroke-width="2.0"/>
<rect x="404.8" y="220.4" width="7.0" height="7.0" rx="1.2" fill="none" stroke="#e040e8" stroke-width="2.0"/>
<rect x="418.2" y="220.4" width="7.0" height="7.0" rx="1.2" fill="none" stroke="#e040e8" stroke-width="2.0"/>
<rect x="431.7" y="220.4" width="7.0" height="7.0" rx="1.2" fill="none" stroke="#e040e8" stroke-width="2.0"/>
<rect x="445.1" y="220.4" width="7.0" height="7.0" rx="1.2" fill="none" stroke="#e040e8" stroke-width="2.0"/>
<rect x="458.6" y="220.4" width="7.0" height="7.0" rx="1.2" fill="none" stroke="#e040e8" stroke-width="2.0"/>
<rect x="485.5" y="220.4" width="7.0" height="7.0" rx="1.2" fill="none" stroke="#e040e8" stroke-width="2.0"/>
<rect x="498.9" y="220.4" width="7.0" height="7.0" rx="1.2" fill="none" stroke="#e040e8" stroke-width="2.0"/>
<rect x="512.4" y="220.4" width="7.0" height="7.0" rx="1.2" fill="none" stroke="#e040e8" stroke-width="2.0"/>
<rect x="525.9" y="220.4" width="7.0" height="7.0" rx="1.2" fill="none" stroke="#e040e8" stroke-width="2.0"/>
<rect x="539.3" y="220.4" width="7.0" height="7.0" rx="1.2" fill="none" stroke="#e040e8" stroke-width="2.0"/>
<rect x="552.8" y="220.4" width="7.0" height="7.0" rx="1.2" fill="none" stroke="#e040e8" stroke-width="2.0"/>
<rect x="579.6" y="220.4" width="7.0" height="7.0" rx="1.2" fill="none" stroke="#e040e8" stroke-width="2.0"/>
<rect x="593.1" y="220.4" width="7.0" height="7.0" rx="1.2" fill="none" stroke="#e040e8" stroke-width="2.0"/>
<rect x="606.5" y="220.4" width="7.0" height="7.0" rx="1.2" fill="none" stroke="#e040e8" stroke-width="2.0"/>
<rect x="620.0" y="220.4" width="7.0" height="7.0" rx="1.2" fill="none" stroke="#e040e8" stroke-width="2.0"/>
<rect x="633.5" y="220.4" width="7.0" height="7.0" rx="1.2" fill="none" stroke="#e040e8" stroke-width="2.0"/>
<rect x="404.8" y="233.5" width="7.0" height="7.0" rx="1.2" fill="none" stroke="#e040e8" stroke-width="2.0"/>
<rect x="418.2" y="233.5" width="7.0" height="7.0" rx="1.2" fill="none" stroke="#e040e8" stroke-width="2.0"/>
<rect x="431.7" y="233.5" width="7.0" height="7.0" rx="1.2" fill="none" stroke="#e040e8" stroke-width="2.0"/>
<rect x="445.1" y="233.5" width="7.0" height="7.0" rx="1.2" fill="none" stroke="#e040e8" stroke-width="2.0"/>
<rect x="458.6" y="233.5" width="7.0" height="7.0" rx="1.2" fill="none" stroke="#e040e8" stroke-width="2.0"/>
<rect x="485.5" y="233.5" width="7.0" height="7.0" rx="1.2" fill="none" stroke="#e040e8" stroke-width="2.0"/>
<rect x="498.9" y="233.5" width="7.0" height="7.0" rx="1.2" fill="none" stroke="#e040e8" stroke-width="2.0"/>
<rect x="512.4" y="233.5" width="7.0" height="7.0" rx="1.2" fill="none" stroke="#e040e8" stroke-width="2.0"/>
<rect x="525.9" y="233.5" width="7.0" height="7.0" rx="1.2" fill="none" stroke="#e040e8" stroke-width="2.0"/>
<rect x="539.3" y="233.5" width="7.0" height="7.0" rx="1.2" fill="none" stroke="#e040e8" stroke-width="2.0"/>
<rect x="552.8" y="233.5" width="7.0" height="7.0" rx="1.2" fill="none" stroke="#e040e8" stroke-width="2.0"/>
<rect x="579.6" y="233.5" width="7.0" height="7.0" rx="1.2" fill="none" stroke="#e040e8" stroke-width="2.0"/>
<rect x="593.1" y="233.5" width="7.0" height="7.0" rx="1.2" fill="none" stroke="#e040e8" stroke-width="2.0"/>
<rect x="606.5" y="233.5" width="7.0" height="7.0" rx="1.2" fill="none" stroke="#e040e8" stroke-width="2.0"/>
<rect x="620.0" y="233.5" width="7.0" height="7.0" rx="1.2" fill="none" stroke="#e040e8" stroke-width="2.0"/>
<rect x="633.5" y="233.5" width="7.0" height="7.0" rx="1.2" fill="none" stroke="#e040e8" stroke-width="2.0"/>
<rect x="404.8" y="246.7" width="7.0" height="7.0" rx="1.2" fill="none" stroke="#e040e8" stroke-width="2.0"/>
<rect x="418.2" y="246.7" width="7.0" height="7.0" rx="1.2" fill="none" stroke="#e040e8" stroke-width="2.0"/>
<rect x="431.7" y="246.7" width="7.0" height="7.0" rx="1.2" fill="none" stroke="#e040e8" stroke-width="2.0"/>
<rect x="445.1" y="246.7" width="7.0" height="7.0" rx="1.2" fill="none" stroke="#e040e8" stroke-width="2.0"/>
<rect x="458.6" y="246.7" width="7.0" height="7.0" rx="1.2" fill="none" stroke="#e040e8" stroke-width="2.0"/>
<rect x="485.5" y="246.7" width="7.0" height="7.0" rx="1.2" fill="none" stroke="#e040e8" stroke-width="2.0"/>
<rect x="498.9" y="246.7" width="7.0" height="7.0" rx="1.2" fill="none" stroke="#e040e8" stroke-width="2.0"/>
<rect x="512.4" y="246.7" width="7.0" height="7.0" rx="1.2" fill="none" stroke="#e040e8" stroke-width="2.0"/>
<rect x="525.9" y="246.7" width="7.0" height="7.0" rx="1.2" fill="none" stroke="#e040e8" stroke-width="2.0"/>
<rect x="539.3" y="246.7" width="7.0" height="7.0" rx="1.2" fill="none" stroke="#e040e8" stroke-width="2.0"/>
<rect x="552.8" y="246.7" width="7.0" height="7.0" rx="1.2" fill="none" stroke="#e040e8" stroke-width="2.0"/>
<rect x="579.6" y="246.7" width="7.0" height="7.0" rx="1.2" fill="none" stroke="#e040e8" stroke-width="2.0"/>
<rect x="593.1" y="246.7" width="7.0" height="7.0" rx="1.2" fill="none" stroke="#e040e8" stroke-width="2.0"/>
<rect x="606.5" y="246.7" width="7.0" height="7.0" rx="1.2" fill="none" stroke="#e040e8" stroke-width="2.0"/>
<rect x="620.0" y="246.7" width="7.0" height="7.0" rx="1.2" fill="none" stroke="#e040e8" stroke-width="2.0"/>
<rect x="633.5" y="246.7" width="7.0" height="7.0" rx="1.2" fill="none" stroke="#e040e8" stroke-width="2.0"/>
<rect x="404.8" y="259.8" width="7.0" height="7.0" rx="1.2" fill="none" stroke="#e040e8" stroke-width="2.0"/>
<rect x="418.2" y="259.8" width="7.0" height="7.0" rx="1.2" fill="none" stroke="#e040e8" stroke-width="2.0"/>
<rect x="431.7" y="259.8" width="7.0" height="7.0" rx="1.2" fill="none" stroke="#e040e8" stroke-width="2.0"/>
<rect x="445.1" y="259.8" width="7.0" height="7.0" rx="1.2" fill="none" stroke="#e040e8" stroke-width="2.0"/>
<rect x="458.6" y="259.8" width="7.0" height="7.0" rx="1.2" fill="none" stroke="#e040e8" stroke-width="2.0"/>
<rect x="579.6" y="259.8" width="7.0" height="7.0" rx="1.2" fill="none" stroke="#e040e8" stroke-width="2.0"/>
<rect x="593.1" y="259.8" width="7.0" height="7.0" rx="1.2" fill="none" stroke="#e040e8" stroke-width="2.0"/>
<rect x="606.5" y="259.8" width="7.0" height="7.0" rx="1.2" fill="none" stroke="#e040e8" stroke-width="2.0"/>
<rect x="620.0" y="259.8" width="7.0" height="7.0" rx="1.2" fill="none" stroke="#e040e8" stroke-width="2.0"/>
<rect x="633.5" y="259.8" width="7.0" height="7.0" rx="1.2" fill="none" stroke="#e040e8" stroke-width="2.0"/>
<rect x="404.8" y="273.0" width="7.0" height="7.0" rx="1.2" fill="none" stroke="#e040e8" stroke-width="2.0"/>
<rect x="418.2" y="273.0" width="7.0" height="7.0" rx="1.2" fill="none" stroke="#e040e8" stroke-width="2.0"/>
<rect x="431.7" y="273.0" width="7.0" height="7.0" rx="1.2" fill="none" stroke="#e040e8" stroke-width="2.0"/>
<rect x="445.1" y="273.0" width="7.0" height="7.0" rx="1.2" fill="none" stroke="#e040e8" stroke-width="2.0"/>
<rect x="458.6" y="273.0" width="7.0" height="7.0" rx="1.2" fill="none" stroke="#e040e8" stroke-width="2.0"/>
<rect x="472.1" y="273.0" width="7.0" height="7.0" rx="1.2" fill="none" stroke="#e040e8" stroke-width="2.0"/>
<rect x="485.5" y="273.0" width="7.0" height="7.0" rx="1.2" fill="none" stroke="#e040e8" stroke-width="2.0"/>
<rect x="498.9" y="273.0" width="7.0" height="7.0" rx="1.2" fill="none" stroke="#e040e8" stroke-width="2.0"/>
<rect x="512.4" y="273.0" width="7.0" height="7.0" rx="1.2" fill="none" stroke="#e040e8" stroke-width="2.0"/>
<rect x="525.9" y="273.0" width="7.0" height="7.0" rx="1.2" fill="none" stroke="#e040e8" stroke-width="2.0"/>
<rect x="539.3" y="273.0" width="7.0" height="7.0" rx="1.2" fill="none" stroke="#e040e8" stroke-width="2.0"/>
<rect x="552.8" y="273.0" width="7.0" height="7.0" rx="1.2" fill="none" stroke="#e040e8" stroke-width="2.0"/>
<rect x="566.2" y="273.0" width="7.0" height="7.0" rx="1.2" fill="none" stroke="#e040e8" stroke-width="2.0"/>
<rect x="579.6" y="273.0" width="7.0" height="7.0" rx="1.2" fill="none" stroke="#e040e8" stroke-width="2.0"/>
<rect x="593.1" y="273.0" width="7.0" height="7.0" rx="1.2" fill="none" stroke="#e040e8" stroke-width="2.0"/>
<rect x="606.5" y="273.0" width="7.0" height="7.0" rx="1.2" fill="none" stroke="#e040e8" stroke-width="2.0"/>
<rect x="620.0" y="273.0" width="7.0" height="7.0" rx="1.2" fill="none" stroke="#e040e8" stroke-width="2.0"/>
<rect x="633.5" y="273.0" width="7.0" height="7.0" rx="1.2" fill="none" stroke="#e040e8" stroke-width="2.0"/>
<rect x="404.8" y="286.1" width="7.0" height="7.0" rx="1.2" fill="none" stroke="#e040e8" stroke-width="2.0"/>
<rect x="418.2" y="286.1" width="7.0" height="7.0" rx="1.2" fill="none" stroke="#e040e8" stroke-width="2.0"/>
<rect x="431.7" y="286.1" width="7.0" height="7.0" rx="1.2" fill="none" stroke="#e040e8" stroke-width="2.0"/>
<rect x="445.1" y="286.1" width="7.0" height="7.0" rx="1.2" fill="none" stroke="#e040e8" stroke-width="2.0"/>
<rect x="458.6" y="286.1" width="7.0" height="7.0" rx="1.2" fill="none" stroke="#e040e8" stroke-width="2.0"/>
<rect x="472.1" y="286.1" width="7.0" height="7.0" rx="1.2" fill="none" stroke="#e040e8" stroke-width="2.0"/>
<rect x="485.5" y="286.1" width="7.0" height="7.0" rx="1.2" fill="none" stroke="#e040e8" stroke-width="2.0"/>
<rect x="498.9" y="286.1" width="7.0" height="7.0" rx="1.2" fill="none" stroke="#e040e8" stroke-width="2.0"/>
<rect x="512.4" y="286.1" width="7.0" height="7.0" rx="1.2" fill="none" stroke="#e040e8" stroke-width="2.0"/>
<rect x="525.9" y="286.1" width="7.0" height="7.0" rx="1.2" fill="none" stroke="#e040e8" stroke-width="2.0"/>
<rect x="539.3" y="286.1" width="7.0" height="7.0" rx="1.2" fill="none" stroke="#e040e8" stroke-width="2.0"/>
<rect x="552.8" y="286.1" width="7.0" height="7.0" rx="1.2" fill="none" stroke="#e040e8" stroke-width="2.0"/>
<rect x="566.2" y="286.1" width="7.0" height="7.0" rx="1.2" fill="none" stroke="#e040e8" stroke-width="2.0"/>
<rect x="579.6" y="286.1" width="7.0" height="7.0" rx="1.2" fill="none" stroke="#e040e8" stroke-width="2.0"/>
<rect x="593.1" y="286.1" width="7.0" height="7.0" rx="1.2" fill="none" stroke="#e040e8" stroke-width="2.0"/>
<rect x="606.5" y="286.1" width="7.0" height="7.0" rx="1.2" fill="none" stroke="#e040e8" stroke-width="2.0"/>
<rect x="620.0" y="286.1" width="7.0" height="7.0" rx="1.2" fill="none" stroke="#e040e8" stroke-width="2.0"/>
<rect x="633.5" y="286.1" width="7.0" height="7.0" rx="1.2" fill="none" stroke="#e040e8" stroke-width="2.0"/>
<rect x="404.8" y="299.2" width="7.0" height="7.0" rx="1.2" fill="none" stroke="#e040e8" stroke-width="2.0"/>
<rect x="418.2" y="299.2" width="7.0" height="7.0" rx="1.2" fill="none" stroke="#e040e8" stroke-width="2.0"/>
<rect x="431.7" y="299.2" width="7.0" height="7.0" rx="1.2" fill="none" stroke="#e040e8" stroke-width="2.0"/>
<rect x="445.1" y="299.2" width="7.0" height="7.0" rx="1.2" fill="none" stroke="#e040e8" stroke-width="2.0"/>
<rect x="458.6" y="299.2" width="7.0" height="7.0" rx="1.2" fill="none" stroke="#e040e8" stroke-width="2.0"/>
<rect x="472.1" y="299.2" width="7.0" height="7.0" rx="1.2" fill="none" stroke="#e040e8" stroke-width="2.0"/>
<rect x="485.5" y="299.2" width="7.0" height="7.0" rx="1.2" fill="none" stroke="#e040e8" stroke-width="2.0"/>
<rect x="498.9" y="299.2" width="7.0" height="7.0" rx="1.2" fill="none" stroke="#e040e8" stroke-width="2.0"/>
<rect x="512.4" y="299.2" width="7.0" height="7.0" rx="1.2" fill="none" stroke="#e040e8" stroke-width="2.0"/>
<rect x="525.9" y="299.2" width="7.0" height="7.0" rx="1.2" fill="none" stroke="#e040e8" stroke-width="2.0"/>
<rect x="539.3" y="299.2" width="7.0" height="7.0" rx="1.2" fill="none" stroke="#e040e8" stroke-width="2.0"/>
<rect x="552.8" y="299.2" width="7.0" height="7.0" rx="1.2" fill="none" stroke="#e040e8" stroke-width="2.0"/>
<rect x="566.2" y="299.2" width="7.0" height="7.0" rx="1.2" fill="none" stroke="#e040e8" stroke-width="2.0"/>
<rect x="579.6" y="299.2" width="7.0" height="7.0" rx="1.2" fill="none" stroke="#e040e8" stroke-width="2.0"/>
<rect x="593.1" y="299.2" width="7.0" height="7.0" rx="1.2" fill="none" stroke="#e040e8" stroke-width="2.0"/>
<rect x="606.5" y="299.2" width="7.0" height="7.0" rx="1.2" fill="none" stroke="#e040e8" stroke-width="2.0"/>
<rect x="620.0" y="299.2" width="7.0" height="7.0" rx="1.2" fill="none" stroke="#e040e8" stroke-width="2.0"/>
<rect x="633.5" y="299.2" width="7.0" height="7.0" rx="1.2" fill="none" stroke="#e040e8" stroke-width="2.0"/>
<rect x="404.8" y="312.4" width="7.0" height="7.0" rx="1.2" fill="none" stroke="#e040e8" stroke-width="2.0"/>
<rect x="418.2" y="312.4" width="7.0" height="7.0" rx="1.2" fill="none" stroke="#e040e8" stroke-width="2.0"/>
<rect x="431.7" y="312.4" width="7.0" height="7.0" rx="1.2" fill="none" stroke="#e040e8" stroke-width="2.0"/>
<rect x="445.1" y="312.4" width="7.0" height="7.0" rx="1.2" fill="none" stroke="#e040e8" stroke-width="2.0"/>
<rect x="458.6" y="312.4" width="7.0" height="7.0" rx="1.2" fill="none" stroke="#e040e8" stroke-width="2.0"/>
<rect x="472.1" y="312.4" width="7.0" height="7.0" rx="1.2" fill="none" stroke="#e040e8" stroke-width="2.0"/>
<rect x="485.5" y="312.4" width="7.0" height="7.0" rx="1.2" fill="none" stroke="#e040e8" stroke-width="2.0"/>
<rect x="498.9" y="312.4" width="7.0" height="7.0" rx="1.2" fill="none" stroke="#e040e8" stroke-width="2.0"/>
<rect x="512.4" y="312.4" width="7.0" height="7.0" rx="1.2" fill="none" stroke="#e040e8" stroke-width="2.0"/>
<rect x="525.9" y="312.4" width="7.0" height="7.0" rx="1.2" fill="none" stroke="#e040e8" stroke-width="2.0"/>
<rect x="539.3" y="312.4" width="7.0" height="7.0" rx="1.2" fill="none" stroke="#e040e8" stroke-width="2.0"/>
<rect x="552.8" y="312.4" width="7.0" height="7.0" rx="1.2" fill="none" stroke="#e040e8" stroke-width="2.0"/>
<rect x="566.2" y="312.4" width="7.0" height="7.0" rx="1.2" fill="none" stroke="#e040e8" stroke-width="2.0"/>
<rect x="579.6" y="312.4" width="7.0" height="7.0" rx="1.2" fill="none" stroke="#e040e8" stroke-width="2.0"/>
<rect x="593.1" y="312.4" width="7.0" height="7.0" rx="1.2" fill="none" stroke="#e040e8" stroke-width="2.0"/>
<rect x="606.5" y="312.4" width="7.0" height="7.0" rx="1.2" fill="none" stroke="#e040e8" stroke-width="2.0"/>
<rect x="620.0" y="312.4" width="7.0" height="7.0" rx="1.2" fill="none" stroke="#e040e8" stroke-width="2.0"/>
<rect x="633.5" y="312.4" width="7.0" height="7.0" rx="1.2" fill="none" stroke="#e040e8" stroke-width="2.0"/>
<rect x="404.8" y="325.6" width="7.0" height="7.0" rx="1.2" fill="none" stroke="#e040e8" stroke-width="2.0"/>
<rect x="418.2" y="325.6" width="7.0" height="7.0" rx="1.2" fill="none" stroke="#e040e8" stroke-width="2.0"/>
<rect x="431.7" y="325.6" width="7.0" height="7.0" rx="1.2" fill="none" stroke="#e040e8" stroke-width="2.0"/>
<rect x="445.1" y="325.6" width="7.0" height="7.0" rx="1.2" fill="none" stroke="#e040e8" stroke-width="2.0"/>
<rect x="458.6" y="325.6" width="7.0" height="7.0" rx="1.2" fill="none" stroke="#e040e8" stroke-width="2.0"/>
<rect x="472.1" y="325.6" width="7.0" height="7.0" rx="1.2" fill="none" stroke="#e040e8" stroke-width="2.0"/>
<rect x="485.5" y="325.6" width="7.0" height="7.0" rx="1.2" fill="none" stroke="#e040e8" stroke-width="2.0"/>
<rect x="498.9" y="325.6" width="7.0" height="7.0" rx="1.2" fill="none" stroke="#e040e8" stroke-width="2.0"/>
<rect x="512.4" y="325.6" width="7.0" height="7.0" rx="1.2" fill="none" stroke="#e040e8" stroke-width="2.0"/>
<rect x="525.9" y="325.6" width="7.0" height="7.0" rx="1.2" fill="none" stroke="#e040e8" stroke-width="2.0"/>
<rect x="539.3" y="325.6" width="7.0" height="7.0" rx="1.2" fill="none" stroke="#e040e8" stroke-width="2.0"/>
<rect x="552.8" y="325.6" width="7.0" height="7.0" rx="1.2" fill="none" stroke="#e040e8" stroke-width="2.0"/>
<rect x="566.2" y="325.6" width="7.0" height="7.0" rx="1.2" fill="none" stroke="#e040e8" stroke-width="2.0"/>
<rect x="579.6" y="325.6" width="7.0" height="7.0" rx="1.2" fill="none" stroke="#e040e8" stroke-width="2.0"/>
<rect x="593.1" y="325.6" width="7.0" height="7.0" rx="1.2" fill="none" stroke="#e040e8" stroke-width="2.0"/>
<rect x="606.5" y="325.6" width="7.0" height="7.0" rx="1.2" fill="none" stroke="#e040e8" stroke-width="2.0"/>
<rect x="620.0" y="325.6" width="7.0" height="7.0" rx="1.2" fill="none" stroke="#e040e8" stroke-width="2.0"/>
<rect x="633.5" y="325.6" width="7.0" height="7.0" rx="1.2" fill="none" stroke="#e040e8" stroke-width="2.0"/>
<path d="M518.7 216.7L521.7 213.7L524.7 216.7L521.7 219.7Z" fill="#ffffff"/>
<line x1="514.0" y1="216.7" x2="521.0" y2="216.7" stroke="#ffffff" stroke-width="1.2"/>
<rect x="1020.3" y="106.2" width="7.0" height="7.0" rx="1.2" fill="none" stroke="#e040e8" stroke-width="2.0"/>
<rect x="1033.7" y="106.2" width="7.0" height="7.0" rx="1.2" fill="none" stroke="#e040e8" stroke-width="2.0"/>
<rect x="1047.1" y="106.2" width="7.0" height="7.0" rx="1.2" fill="none" stroke="#e040e8" stroke-width="2.0"/>
<rect x="1060.6" y="106.2" width="7.0" height="7.0" rx="1.2" fill="none" stroke="#e040e8" stroke-width="2.0"/>
<rect x="1074.0" y="106.2" width="7.0" height="7.0" rx="1.2" fill="none" stroke="#e040e8" stroke-width="2.0"/>
<rect x="1087.4" y="106.2" width="7.0" height="7.0" rx="1.2" fill="none" stroke="#e040e8" stroke-width="2.0"/>
<rect x="1100.8" y="106.2" width="7.0" height="7.0" rx="1.2" fill="none" stroke="#e040e8" stroke-width="2.0"/>
<rect x="1114.2" y="106.2" width="7.0" height="7.0" rx="1.2" fill="none" stroke="#e040e8" stroke-width="2.0"/>
<rect x="1127.7" y="106.2" width="7.0" height="7.0" rx="1.2" fill="none" stroke="#e040e8" stroke-width="2.0"/>
<rect x="1141.1" y="106.2" width="7.0" height="7.0" rx="1.2" fill="none" stroke="#e040e8" stroke-width="2.0"/>
<rect x="1154.5" y="106.2" width="7.0" height="7.0" rx="1.2" fill="none" stroke="#e040e8" stroke-width="2.0"/>
<rect x="1020.3" y="119.2" width="7.0" height="7.0" rx="1.2" fill="none" stroke="#e040e8" stroke-width="2.0"/>
<rect x="1033.7" y="119.2" width="7.0" height="7.0" rx="1.2" fill="none" stroke="#e040e8" stroke-width="2.0"/>
<rect x="1047.1" y="119.2" width="7.0" height="7.0" rx="1.2" fill="none" stroke="#e040e8" stroke-width="2.0"/>
<rect x="1060.6" y="119.2" width="7.0" height="7.0" rx="1.2" fill="none" stroke="#e040e8" stroke-width="2.0"/>
<rect x="1074.0" y="119.2" width="7.0" height="7.0" rx="1.2" fill="none" stroke="#e040e8" stroke-width="2.0"/>
<rect x="1087.4" y="119.2" width="7.0" height="7.0" rx="1.2" fill="none" stroke="#e040e8" stroke-width="2.0"/>
<rect x="1100.8" y="119.2" width="7.0" height="7.0" rx="1.2" fill="none" stroke="#e040e8" stroke-width="2.0"/>
<rect x="1114.2" y="119.2" width="7.0" height="7.0" rx="1.2" fill="none" stroke="#e040e8" stroke-width="2.0"/>
<rect x="1127.7" y="119.2" width="7.0" height="7.0" rx="1.2" fill="none" stroke="#e040e8" stroke-width="2.0"/>
<rect x="1141.1" y="119.2" width="7.0" height="7.0" rx="1.2" fill="none" stroke="#e040e8" stroke-width="2.0"/>
<rect x="1154.5" y="119.2" width="7.0" height="7.0" rx="1.2" fill="none" stroke="#e040e8" stroke-width="2.0"/>
<rect x="1020.3" y="132.2" width="7.0" height="7.0" rx="1.2" fill="none" stroke="#e040e8" stroke-width="2.0"/>
<rect x="1033.7" y="132.2" width="7.0" height="7.0" rx="1.2" fill="none" stroke="#e040e8" stroke-width="2.0"/>
<rect x="1047.1" y="132.2" width="7.0" height="7.0" rx="1.2" fill="none" stroke="#e040e8" stroke-width="2.0"/>
<rect x="1060.6" y="132.2" width="7.0" height="7.0" rx="1.2" fill="none" stroke="#e040e8" stroke-width="2.0"/>
<rect x="1074.0" y="132.2" width="7.0" height="7.0" rx="1.2" fill="none" stroke="#e040e8" stroke-width="2.0"/>
<rect x="1087.4" y="132.2" width="7.0" height="7.0" rx="1.2" fill="none" stroke="#e040e8" stroke-width="2.0"/>
<rect x="1100.8" y="132.2" width="7.0" height="7.0" rx="1.2" fill="none" stroke="#e040e8" stroke-width="2.0"/>
<rect x="1114.2" y="132.2" width="7.0" height="7.0" rx="1.2" fill="none" stroke="#e040e8" stroke-width="2.0"/>
<rect x="1127.7" y="132.2" width="7.0" height="7.0" rx="1.2" fill="none" stroke="#e040e8" stroke-width="2.0"/>
<rect x="1141.1" y="132.2" width="7.0" height="7.0" rx="1.2" fill="none" stroke="#e040e8" stroke-width="2.0"/>
<rect x="1154.5" y="132.2" width="7.0" height="7.0" rx="1.2" fill="none" stroke="#e040e8" stroke-width="2.0"/>
<rect x="1020.3" y="145.3" width="7.0" height="7.0" rx="1.2" fill="none" stroke="#e040e8" stroke-width="2.0"/>
<rect x="1033.7" y="145.3" width="7.0" height="7.0" rx="1.2" fill="none" stroke="#e040e8" stroke-width="2.0"/>
<rect x="1047.1" y="145.3" width="7.0" height="7.0" rx="1.2" fill="none" stroke="#e040e8" stroke-width="2.0"/>
<rect x="1060.6" y="145.3" width="7.0" height="7.0" rx="1.2" fill="none" stroke="#e040e8" stroke-width="2.0"/>
<rect x="1074.0" y="145.3" width="7.0" height="7.0" rx="1.2" fill="none" stroke="#e040e8" stroke-width="2.0"/>
<rect x="1087.4" y="145.3" width="7.0" height="7.0" rx="1.2" fill="none" stroke="#e040e8" stroke-width="2.0"/>
<rect x="1100.8" y="145.3" width="7.0" height="7.0" rx="1.2" fill="none" stroke="#e040e8" stroke-width="2.0"/>
<rect x="1114.2" y="145.3" width="7.0" height="7.0" rx="1.2" fill="none" stroke="#e040e8" stroke-width="2.0"/>
<rect x="1127.7" y="145.3" width="7.0" height="7.0" rx="1.2" fill="none" stroke="#e040e8" stroke-width="2.0"/>
<rect x="1141.1" y="145.3" width="7.0" height="7.0" rx="1.2" fill="none" stroke="#e040e8" stroke-width="2.0"/>
<rect x="1154.5" y="145.3" width="7.0" height="7.0" rx="1.2" fill="none" stroke="#e040e8" stroke-width="2.0"/>
<rect x="1020.3" y="158.3" width="7.0" height="7.0" rx="1.2" fill="none" stroke="#e040e8" stroke-width="2.0"/>
<rect x="1033.7" y="158.3" width="7.0" height="7.0" rx="1.2" fill="none" stroke="#e040e8" stroke-width="2.0"/>
<rect x="1047.1" y="158.3" width="7.0" height="7.0" rx="1.2" fill="none" stroke="#e040e8" stroke-width="2.0"/>
<rect x="1060.6" y="158.3" width="7.0" height="7.0" rx="1.2" fill="none" stroke="#e040e8" stroke-width="2.0"/>
<rect x="1074.0" y="158.3" width="7.0" height="7.0" rx="1.2" fill="none" stroke="#e040e8" stroke-width="2.0"/>
<rect x="1087.4" y="158.3" width="7.0" height="7.0" rx="1.2" fill="none" stroke="#e040e8" stroke-width="2.0"/>
<rect x="1100.8" y="158.3" width="7.0" height="7.0" rx="1.2" fill="none" stroke="#e040e8" stroke-width="2.0"/>
<rect x="1114.2" y="158.3" width="7.0" height="7.0" rx="1.2" fill="none" stroke="#e040e8" stroke-width="2.0"/>
<rect x="1127.7" y="158.3" width="7.0" height="7.0" rx="1.2" fill="none" stroke="#e040e8" stroke-width="2.0"/>
<rect x="1141.1" y="158.3" width="7.0" height="7.0" rx="1.2" fill="none" stroke="#e040e8" stroke-width="2.0"/>
<rect x="1154.5" y="158.3" width="7.0" height="7.0" rx="1.2" fill="none" stroke="#e040e8" stroke-width="2.0"/>
<rect x="1020.3" y="171.3" width="7.0" height="7.0" rx="1.2" fill="none" stroke="#e040e8" stroke-width="2.0"/>
<rect x="1033.7" y="171.3" width="7.0" height="7.0" rx="1.2" fill="none" stroke="#e040e8" stroke-width="2.0"/>
<rect x="1047.1" y="171.3" width="7.0" height="7.0" rx="1.2" fill="none" stroke="#e040e8" stroke-width="2.0"/>
<rect x="1060.6" y="171.3" width="7.0" height="7.0" rx="1.2" fill="none" stroke="#e040e8" stroke-width="2.0"/>
<rect x="1074.0" y="171.3" width="7.0" height="7.0" rx="1.2" fill="none" stroke="#e040e8" stroke-width="2.0"/>
<rect x="1020.3" y="184.3" width="7.0" height="7.0" rx="1.2" fill="none" stroke="#e040e8" stroke-width="2.0"/>
<rect x="1033.7" y="184.3" width="7.0" height="7.0" rx="1.2" fill="none" stroke="#e040e8" stroke-width="2.0"/>
<rect x="1047.1" y="184.3" width="7.0" height="7.0" rx="1.2" fill="none" stroke="#e040e8" stroke-width="2.0"/>
<rect x="1060.6" y="184.3" width="7.0" height="7.0" rx="1.2" fill="none" stroke="#e040e8" stroke-width="2.0"/>
<rect x="1074.0" y="184.3" width="7.0" height="7.0" rx="1.2" fill="none" stroke="#e040e8" stroke-width="2.0"/>
<rect x="1100.8" y="184.3" width="7.0" height="7.0" rx="1.2" fill="none" stroke="#e040e8" stroke-width="2.0"/>
<rect x="1114.2" y="184.3" width="7.0" height="7.0" rx="1.2" fill="none" stroke="#e040e8" stroke-width="2.0"/>
<rect x="1127.7" y="184.3" width="7.0" height="7.0" rx="1.2" fill="none" stroke="#e040e8" stroke-width="2.0"/>
<rect x="1141.1" y="184.3" width="7.0" height="7.0" rx="1.2" fill="none" stroke="#e040e8" stroke-width="2.0"/>
<rect x="1154.5" y="184.3" width="7.0" height="7.0" rx="1.2" fill="none" stroke="#e040e8" stroke-width="2.0"/>
<rect x="1020.3" y="197.3" width="7.0" height="7.0" rx="1.2" fill="none" stroke="#e040e8" stroke-width="2.0"/>
<rect x="1033.7" y="197.3" width="7.0" height="7.0" rx="1.2" fill="none" stroke="#e040e8" stroke-width="2.0"/>
<rect x="1047.1" y="197.3" width="7.0" height="7.0" rx="1.2" fill="none" stroke="#e040e8" stroke-width="2.0"/>
<rect x="1060.6" y="197.3" width="7.0" height="7.0" rx="1.2" fill="none" stroke="#e040e8" stroke-width="2.0"/>
<rect x="1074.0" y="197.3" width="7.0" height="7.0" rx="1.2" fill="none" stroke="#e040e8" stroke-width="2.0"/>
<rect x="1100.8" y="197.3" width="7.0" height="7.0" rx="1.2" fill="none" stroke="#e040e8" stroke-width="2.0"/>
<rect x="1114.2" y="197.3" width="7.0" height="7.0" rx="1.2" fill="none" stroke="#e040e8" stroke-width="2.0"/>
<rect x="1127.7" y="197.3" width="7.0" height="7.0" rx="1.2" fill="none" stroke="#e040e8" stroke-width="2.0"/>
<rect x="1141.1" y="197.3" width="7.0" height="7.0" rx="1.2" fill="none" stroke="#e040e8" stroke-width="2.0"/>
<rect x="1154.5" y="197.3" width="7.0" height="7.0" rx="1.2" fill="none" stroke="#e040e8" stroke-width="2.0"/>
<rect x="1020.3" y="210.4" width="7.0" height="7.0" rx="1.2" fill="none" stroke="#e040e8" stroke-width="2.0"/>
<rect x="1033.7" y="210.4" width="7.0" height="7.0" rx="1.2" fill="none" stroke="#e040e8" stroke-width="2.0"/>
<rect x="1047.1" y="210.4" width="7.0" height="7.0" rx="1.2" fill="none" stroke="#e040e8" stroke-width="2.0"/>
<rect x="1060.6" y="210.4" width="7.0" height="7.0" rx="1.2" fill="none" stroke="#e040e8" stroke-width="2.0"/>
<rect x="1074.0" y="210.4" width="7.0" height="7.0" rx="1.2" fill="none" stroke="#e040e8" stroke-width="2.0"/>
<rect x="1100.8" y="210.4" width="7.0" height="7.0" rx="1.2" fill="none" stroke="#e040e8" stroke-width="2.0"/>
<rect x="1114.2" y="210.4" width="7.0" height="7.0" rx="1.2" fill="none" stroke="#e040e8" stroke-width="2.0"/>
<rect x="1127.7" y="210.4" width="7.0" height="7.0" rx="1.2" fill="none" stroke="#e040e8" stroke-width="2.0"/>
<rect x="1141.1" y="210.4" width="7.0" height="7.0" rx="1.2" fill="none" stroke="#e040e8" stroke-width="2.0"/>
<rect x="1154.5" y="210.4" width="7.0" height="7.0" rx="1.2" fill="none" stroke="#e040e8" stroke-width="2.0"/>
<rect x="1020.3" y="223.4" width="7.0" height="7.0" rx="1.2" fill="none" stroke="#e040e8" stroke-width="2.0"/>
<rect x="1033.7" y="223.4" width="7.0" height="7.0" rx="1.2" fill="none" stroke="#e040e8" stroke-width="2.0"/>
<rect x="1047.1" y="223.4" width="7.0" height="7.0" rx="1.2" fill="none" stroke="#e040e8" stroke-width="2.0"/>
<rect x="1060.6" y="223.4" width="7.0" height="7.0" rx="1.2" fill="none" stroke="#e040e8" stroke-width="2.0"/>
<rect x="1074.0" y="223.4" width="7.0" height="7.0" rx="1.2" fill="none" stroke="#e040e8" stroke-width="2.0"/>
<rect x="1100.8" y="223.4" width="7.0" height="7.0" rx="1.2" fill="none" stroke="#e040e8" stroke-width="2.0"/>
<rect x="1114.2" y="223.4" width="7.0" height="7.0" rx="1.2" fill="none" stroke="#e040e8" stroke-width="2.0"/>
<rect x="1127.7" y="223.4" width="7.0" height="7.0" rx="1.2" fill="none" stroke="#e040e8" stroke-width="2.0"/>
<rect x="1141.1" y="223.4" width="7.0" height="7.0" rx="1.2" fill="none" stroke="#e040e8" stroke-width="2.0"/>
<rect x="1154.5" y="223.4" width="7.0" height="7.0" rx="1.2" fill="none" stroke="#e040e8" stroke-width="2.0"/>
<rect x="1020.3" y="236.4" width="7.0" height="7.0" rx="1.2" fill="none" stroke="#e040e8" stroke-width="2.0"/>
<rect x="1033.7" y="236.4" width="7.0" height="7.0" rx="1.2" fill="none" stroke="#e040e8" stroke-width="2.0"/>
<rect x="1047.1" y="236.4" width="7.0" height="7.0" rx="1.2" fill="none" stroke="#e040e8" stroke-width="2.0"/>
<rect x="1060.6" y="236.4" width="7.0" height="7.0" rx="1.2" fill="none" stroke="#e040e8" stroke-width="2.0"/>
<rect x="1074.0" y="236.4" width="7.0" height="7.0" rx="1.2" fill="none" stroke="#e040e8" stroke-width="2.0"/>
<rect x="1100.8" y="236.4" width="7.0" height="7.0" rx="1.2" fill="none" stroke="#e040e8" stroke-width="2.0"/>
<rect x="1114.2" y="236.4" width="7.0" height="7.0" rx="1.2" fill="none" stroke="#e040e8" stroke-width="2.0"/>
<rect x="1127.7" y="236.4" width="7.0" height="7.0" rx="1.2" fill="none" stroke="#e040e8" stroke-width="2.0"/>
<rect x="1141.1" y="236.4" width="7.0" height="7.0" rx="1.2" fill="none" stroke="#e040e8" stroke-width="2.0"/>
<rect x="1154.5" y="236.4" width="7.0" height="7.0" rx="1.2" fill="none" stroke="#e040e8" stroke-width="2.0"/>
<rect x="1020.3" y="249.4" width="7.0" height="7.0" rx="1.2" fill="none" stroke="#e040e8" stroke-width="2.0"/>
<rect x="1033.7" y="249.4" width="7.0" height="7.0" rx="1.2" fill="none" stroke="#e040e8" stroke-width="2.0"/>
<rect x="1047.1" y="249.4" width="7.0" height="7.0" rx="1.2" fill="none" stroke="#e040e8" stroke-width="2.0"/>
<rect x="1060.6" y="249.4" width="7.0" height="7.0" rx="1.2" fill="none" stroke="#e040e8" stroke-width="2.0"/>
<rect x="1074.0" y="249.4" width="7.0" height="7.0" rx="1.2" fill="none" stroke="#e040e8" stroke-width="2.0"/>
<rect x="1100.8" y="249.4" width="7.0" height="7.0" rx="1.2" fill="none" stroke="#e040e8" stroke-width="2.0"/>
<rect x="1114.2" y="249.4" width="7.0" height="7.0" rx="1.2" fill="none" stroke="#e040e8" stroke-width="2.0"/>
<rect x="1127.7" y="249.4" width="7.0" height="7.0" rx="1.2" fill="none" stroke="#e040e8" stroke-width="2.0"/>
<rect x="1141.1" y="249.4" width="7.0" height="7.0" rx="1.2" fill="none" stroke="#e040e8" stroke-width="2.0"/>
<rect x="1154.5" y="249.4" width="7.0" height="7.0" rx="1.2" fill="none" stroke="#e040e8" stroke-width="2.0"/>
<rect x="1020.3" y="262.4" width="7.0" height="7.0" rx="1.2" fill="none" stroke="#e040e8" stroke-width="2.0"/>
<rect x="1033.7" y="262.4" width="7.0" height="7.0" rx="1.2" fill="none" stroke="#e040e8" stroke-width="2.0"/>
<rect x="1047.1" y="262.4" width="7.0" height="7.0" rx="1.2" fill="none" stroke="#e040e8" stroke-width="2.0"/>
<rect x="1060.6" y="262.4" width="7.0" height="7.0" rx="1.2" fill="none" stroke="#e040e8" stroke-width="2.0"/>
<rect x="1074.0" y="262.4" width="7.0" height="7.0" rx="1.2" fill="none" stroke="#e040e8" stroke-width="2.0"/>
<rect x="1020.3" y="275.5" width="7.0" height="7.0" rx="1.2" fill="none" stroke="#e040e8" stroke-width="2.0"/>
<rect x="1033.7" y="275.5" width="7.0" height="7.0" rx="1.2" fill="none" stroke="#e040e8" stroke-width="2.0"/>
<rect x="1047.1" y="275.5" width="7.0" height="7.0" rx="1.2" fill="none" stroke="#e040e8" stroke-width="2.0"/>
<rect x="1060.6" y="275.5" width="7.0" height="7.0" rx="1.2" fill="none" stroke="#e040e8" stroke-width="2.0"/>
<rect x="1074.0" y="275.5" width="7.0" height="7.0" rx="1.2" fill="none" stroke="#e040e8" stroke-width="2.0"/>
<rect x="1087.4" y="275.5" width="7.0" height="7.0" rx="1.2" fill="none" stroke="#e040e8" stroke-width="2.0"/>
<rect x="1100.8" y="275.5" width="7.0" height="7.0" rx="1.2" fill="none" stroke="#e040e8" stroke-width="2.0"/>
<rect x="1114.2" y="275.5" width="7.0" height="7.0" rx="1.2" fill="none" stroke="#e040e8" stroke-width="2.0"/>
<rect x="1127.7" y="275.5" width="7.0" height="7.0" rx="1.2" fill="none" stroke="#e040e8" stroke-width="2.0"/>
<rect x="1141.1" y="275.5" width="7.0" height="7.0" rx="1.2" fill="none" stroke="#e040e8" stroke-width="2.0"/>
<rect x="1154.5" y="275.5" width="7.0" height="7.0" rx="1.2" fill="none" stroke="#e040e8" stroke-width="2.0"/>
<rect x="1020.3" y="288.5" width="7.0" height="7.0" rx="1.2" fill="none" stroke="#e040e8" stroke-width="2.0"/>
<rect x="1033.7" y="288.5" width="7.0" height="7.0" rx="1.2" fill="none" stroke="#e040e8" stroke-width="2.0"/>
<rect x="1047.1" y="288.5" width="7.0" height="7.0" rx="1.2" fill="none" stroke="#e040e8" stroke-width="2.0"/>
<rect x="1060.6" y="288.5" width="7.0" height="7.0" rx="1.2" fill="none" stroke="#e040e8" stroke-width="2.0"/>
<rect x="1074.0" y="288.5" width="7.0" height="7.0" rx="1.2" fill="none" stroke="#e040e8" stroke-width="2.0"/>
<rect x="1087.4" y="288.5" width="7.0" height="7.0" rx="1.2" fill="none" stroke="#e040e8" stroke-width="2.0"/>
<rect x="1100.8" y="288.5" width="7.0" height="7.0" rx="1.2" fill="none" stroke="#e040e8" stroke-width="2.0"/>
<rect x="1114.2" y="288.5" width="7.0" height="7.0" rx="1.2" fill="none" stroke="#e040e8" stroke-width="2.0"/>
<rect x="1127.7" y="288.5" width="7.0" height="7.0" rx="1.2" fill="none" stroke="#e040e8" stroke-width="2.0"/>
<rect x="1141.1" y="288.5" width="7.0" height="7.0" rx="1.2" fill="none" stroke="#e040e8" stroke-width="2.0"/>
<rect x="1154.5" y="288.5" width="7.0" height="7.0" rx="1.2" fill="none" stroke="#e040e8" stroke-width="2.0"/>
<rect x="1020.3" y="301.5" width="7.0" height="7.0" rx="1.2" fill="none" stroke="#e040e8" stroke-width="2.0"/>
<rect x="1033.7" y="301.5" width="7.0" height="7.0" rx="1.2" fill="none" stroke="#e040e8" stroke-width="2.0"/>
<rect x="1047.1" y="301.5" width="7.0" height="7.0" rx="1.2" fill="none" stroke="#e040e8" stroke-width="2.0"/>
<rect x="1060.6" y="301.5" width="7.0" height="7.0" rx="1.2" fill="none" stroke="#e040e8" stroke-width="2.0"/>
<rect x="1074.0" y="301.5" width="7.0" height="7.0" rx="1.2" fill="none" stroke="#e040e8" stroke-width="2.0"/>
<rect x="1087.4" y="301.5" width="7.0" height="7.0" rx="1.2" fill="none" stroke="#e040e8" stroke-width="2.0"/>
<rect x="1100.8" y="301.5" width="7.0" height="7.0" rx="1.2" fill="none" stroke="#e040e8" stroke-width="2.0"/>
<rect x="1114.2" y="301.5" width="7.0" height="7.0" rx="1.2" fill="none" stroke="#e040e8" stroke-width="2.0"/>
<rect x="1127.7" y="301.5" width="7.0" height="7.0" rx="1.2" fill="none" stroke="#e040e8" stroke-width="2.0"/>
<rect x="1141.1" y="301.5" width="7.0" height="7.0" rx="1.2" fill="none" stroke="#e040e8" stroke-width="2.0"/>
<rect x="1154.5" y="301.5" width="7.0" height="7.0" rx="1.2" fill="none" stroke="#e040e8" stroke-width="2.0"/>
<rect x="1020.3" y="314.5" width="7.0" height="7.0" rx="1.2" fill="none" stroke="#e040e8" stroke-width="2.0"/>
<rect x="1033.7" y="314.5" width="7.0" height="7.0" rx="1.2" fill="none" stroke="#e040e8" stroke-width="2.0"/>
<rect x="1047.1" y="314.5" width="7.0" height="7.0" rx="1.2" fill="none" stroke="#e040e8" stroke-width="2.0"/>
<rect x="1060.6" y="314.5" width="7.0" height="7.0" rx="1.2" fill="none" stroke="#e040e8" stroke-width="2.0"/>
<rect x="1074.0" y="314.5" width="7.0" height="7.0" rx="1.2" fill="none" stroke="#e040e8" stroke-width="2.0"/>
<rect x="1087.4" y="314.5" width="7.0" height="7.0" rx="1.2" fill="none" stroke="#e040e8" stroke-width="2.0"/>
<rect x="1100.8" y="314.5" width="7.0" height="7.0" rx="1.2" fill="none" stroke="#e040e8" stroke-width="2.0"/>
<rect x="1114.2" y="314.5" width="7.0" height="7.0" rx="1.2" fill="none" stroke="#e040e8" stroke-width="2.0"/>
<rect x="1127.7" y="314.5" width="7.0" height="7.0" rx="1.2" fill="none" stroke="#e040e8" stroke-width="2.0"/>
<rect x="1141.1" y="314.5" width="7.0" height="7.0" rx="1.2" fill="none" stroke="#e040e8" stroke-width="2.0"/>
<rect x="1154.5" y="314.5" width="7.0" height="7.0" rx="1.2" fill="none" stroke="#e040e8" stroke-width="2.0"/>
<rect x="1020.3" y="327.5" width="7.0" height="7.0" rx="1.2" fill="none" stroke="#e040e8" stroke-width="2.0"/>
<rect x="1033.7" y="327.5" width="7.0" height="7.0" rx="1.2" fill="none" stroke="#e040e8" stroke-width="2.0"/>
<rect x="1047.1" y="327.5" width="7.0" height="7.0" rx="1.2" fill="none" stroke="#e040e8" stroke-width="2.0"/>
<rect x="1060.6" y="327.5" width="7.0" height="7.0" rx="1.2" fill="none" stroke="#e040e8" stroke-width="2.0"/>
<rect x="1074.0" y="327.5" width="7.0" height="7.0" rx="1.2" fill="none" stroke="#e040e8" stroke-width="2.0"/>
<rect x="1087.4" y="327.5" width="7.0" height="7.0" rx="1.2" fill="none" stroke="#e040e8" stroke-width="2.0"/>
<rect x="1100.8" y="327.5" width="7.0" height="7.0" rx="1.2" fill="none" stroke="#e040e8" stroke-width="2.0"/>
<rect x="1114.2" y="327.5" width="7.0" height="7.0" rx="1.2" fill="none" stroke="#e040e8" stroke-width="2.0"/>
<rect x="1127.7" y="327.5" width="7.0" height="7.0" rx="1.2" fill="none" stroke="#e040e8" stroke-width="2.0"/>
<rect x="1141.1" y="327.5" width="7.0" height="7.0" rx="1.2" fill="none" stroke="#e040e8" stroke-width="2.0"/>
<rect x="1154.5" y="327.5" width="7.0" height="7.0" rx="1.2" fill="none" stroke="#e040e8" stroke-width="2.0"/>
<path d="M1135.2 221.0L1138.2 218.0L1141.2 221.0L1138.2 224.0Z" fill="#ffffff"/>
<line x1="1138.0" y1="221.0" x2="1147.0" y2="221.0" stroke="#ffffff" stroke-width="1.2"/>
<clipPath id="cE"><rect x="798.5" y="162.2" width="114.2" height="109.3"/></clipPath>
<g clip-path="url(#cE)">
<rect x="799.1" y="161.6" width="6.8" height="6.8" rx="1.2" fill="none" stroke="#e040e8" stroke-width="2.0"/>
<rect x="812.4" y="161.6" width="6.8" height="6.8" rx="1.2" fill="none" stroke="#e040e8" stroke-width="2.0"/>
<rect x="825.7" y="161.6" width="6.8" height="6.8" rx="1.2" fill="none" stroke="#e040e8" stroke-width="2.0"/>
<rect x="839.0" y="161.6" width="6.8" height="6.8" rx="1.2" fill="none" stroke="#e040e8" stroke-width="2.0"/>
<rect x="852.3" y="161.6" width="6.8" height="6.8" rx="1.2" fill="none" stroke="#e040e8" stroke-width="2.0"/>
<rect x="865.6" y="161.6" width="6.8" height="6.8" rx="1.2" fill="none" stroke="#e040e8" stroke-width="2.0"/>
<rect x="878.9" y="161.6" width="6.8" height="6.8" rx="1.2" fill="none" stroke="#e040e8" stroke-width="2.0"/>
<rect x="892.2" y="161.6" width="6.8" height="6.8" rx="1.2" fill="none" stroke="#e040e8" stroke-width="2.0"/>
<rect x="905.5" y="161.6" width="6.8" height="6.8" rx="1.2" fill="none" stroke="#e040e8" stroke-width="2.0"/>
<rect x="799.1" y="174.6" width="6.8" height="6.8" rx="1.2" fill="none" stroke="#e040e8" stroke-width="2.0"/>
<rect x="812.4" y="174.6" width="6.8" height="6.8" rx="1.2" fill="none" stroke="#e040e8" stroke-width="2.0"/>
<rect x="825.7" y="174.6" width="6.8" height="6.8" rx="1.2" fill="none" stroke="#e040e8" stroke-width="2.0"/>
<rect x="839.0" y="174.6" width="6.8" height="6.8" rx="1.2" fill="none" stroke="#e040e8" stroke-width="2.0"/>
<rect x="852.3" y="174.6" width="6.8" height="6.8" rx="1.2" fill="none" stroke="#e040e8" stroke-width="2.0"/>
<rect x="865.6" y="174.6" width="6.8" height="6.8" rx="1.2" fill="none" stroke="#e040e8" stroke-width="2.0"/>
<rect x="878.9" y="174.6" width="6.8" height="6.8" rx="1.2" fill="none" stroke="#e040e8" stroke-width="2.0"/>
<rect x="892.2" y="174.6" width="6.8" height="6.8" rx="1.2" fill="none" stroke="#e040e8" stroke-width="2.0"/>
<rect x="905.5" y="174.6" width="6.8" height="6.8" rx="1.2" fill="none" stroke="#e040e8" stroke-width="2.0"/>
<rect x="799.1" y="187.5" width="6.8" height="6.8" rx="1.2" fill="none" stroke="#e040e8" stroke-width="2.0"/>
<rect x="812.4" y="187.5" width="6.8" height="6.8" rx="1.2" fill="none" stroke="#e040e8" stroke-width="2.0"/>
<rect x="825.7" y="187.5" width="6.8" height="6.8" rx="1.2" fill="none" stroke="#e040e8" stroke-width="2.0"/>
<rect x="839.0" y="187.5" width="6.8" height="6.8" rx="1.2" fill="none" stroke="#e040e8" stroke-width="2.0"/>
<rect x="852.3" y="187.5" width="6.8" height="6.8" rx="1.2" fill="none" stroke="#e040e8" stroke-width="2.0"/>
<rect x="865.6" y="187.5" width="6.8" height="6.8" rx="1.2" fill="none" stroke="#e040e8" stroke-width="2.0"/>
<rect x="878.9" y="187.5" width="6.8" height="6.8" rx="1.2" fill="none" stroke="#e040e8" stroke-width="2.0"/>
<rect x="892.2" y="187.5" width="6.8" height="6.8" rx="1.2" fill="none" stroke="#e040e8" stroke-width="2.0"/>
<rect x="905.5" y="187.5" width="6.8" height="6.8" rx="1.2" fill="none" stroke="#e040e8" stroke-width="2.0"/>
<rect x="799.1" y="200.5" width="6.8" height="6.8" rx="1.2" fill="none" stroke="#e040e8" stroke-width="2.0"/>
<rect x="812.4" y="200.5" width="6.8" height="6.8" rx="1.2" fill="none" stroke="#e040e8" stroke-width="2.0"/>
<rect x="825.7" y="200.5" width="6.8" height="6.8" rx="1.2" fill="none" stroke="#e040e8" stroke-width="2.0"/>
<rect x="839.0" y="200.5" width="6.8" height="6.8" rx="1.2" fill="none" stroke="#e040e8" stroke-width="2.0"/>
<rect x="852.3" y="200.5" width="6.8" height="6.8" rx="1.2" fill="none" stroke="#e040e8" stroke-width="2.0"/>
<rect x="865.6" y="200.5" width="6.8" height="6.8" rx="1.2" fill="none" stroke="#e040e8" stroke-width="2.0"/>
<rect x="878.9" y="200.5" width="6.8" height="6.8" rx="1.2" fill="none" stroke="#e040e8" stroke-width="2.0"/>
<rect x="892.2" y="200.5" width="6.8" height="6.8" rx="1.2" fill="none" stroke="#e040e8" stroke-width="2.0"/>
<rect x="905.5" y="200.5" width="6.8" height="6.8" rx="1.2" fill="none" stroke="#e040e8" stroke-width="2.0"/>
<rect x="799.1" y="213.5" width="6.8" height="6.8" rx="1.2" fill="none" stroke="#e040e8" stroke-width="2.0"/>
<rect x="812.4" y="213.5" width="6.8" height="6.8" rx="1.2" fill="none" stroke="#e040e8" stroke-width="2.0"/>
<rect x="825.7" y="213.5" width="6.8" height="6.8" rx="1.2" fill="none" stroke="#e040e8" stroke-width="2.0"/>
<rect x="839.0" y="213.5" width="6.8" height="6.8" rx="1.2" fill="none" stroke="#e040e8" stroke-width="2.0"/>
<rect x="865.6" y="213.5" width="6.8" height="6.8" rx="1.2" fill="none" stroke="#e040e8" stroke-width="2.0"/>
<rect x="878.9" y="213.5" width="6.8" height="6.8" rx="1.2" fill="none" stroke="#e040e8" stroke-width="2.0"/>
<rect x="892.2" y="213.5" width="6.8" height="6.8" rx="1.2" fill="none" stroke="#e040e8" stroke-width="2.0"/>
<rect x="905.5" y="213.5" width="6.8" height="6.8" rx="1.2" fill="none" stroke="#e040e8" stroke-width="2.0"/>
<rect x="799.1" y="226.5" width="6.8" height="6.8" rx="1.2" fill="none" stroke="#e040e8" stroke-width="2.0"/>
<rect x="812.4" y="226.5" width="6.8" height="6.8" rx="1.2" fill="none" stroke="#e040e8" stroke-width="2.0"/>
<rect x="825.7" y="226.5" width="6.8" height="6.8" rx="1.2" fill="none" stroke="#e040e8" stroke-width="2.0"/>
<rect x="839.0" y="226.5" width="6.8" height="6.8" rx="1.2" fill="none" stroke="#e040e8" stroke-width="2.0"/>
<rect x="852.3" y="226.5" width="6.8" height="6.8" rx="1.2" fill="none" stroke="#e040e8" stroke-width="2.0"/>
<rect x="865.6" y="226.5" width="6.8" height="6.8" rx="1.2" fill="none" stroke="#e040e8" stroke-width="2.0"/>
<rect x="878.9" y="226.5" width="6.8" height="6.8" rx="1.2" fill="none" stroke="#e040e8" stroke-width="2.0"/>
<rect x="892.2" y="226.5" width="6.8" height="6.8" rx="1.2" fill="none" stroke="#e040e8" stroke-width="2.0"/>
<rect x="905.5" y="226.5" width="6.8" height="6.8" rx="1.2" fill="none" stroke="#e040e8" stroke-width="2.0"/>
<rect x="799.1" y="239.4" width="6.8" height="6.8" rx="1.2" fill="none" stroke="#e040e8" stroke-width="2.0"/>
<rect x="812.4" y="239.4" width="6.8" height="6.8" rx="1.2" fill="none" stroke="#e040e8" stroke-width="2.0"/>
<rect x="825.7" y="239.4" width="6.8" height="6.8" rx="1.2" fill="none" stroke="#e040e8" stroke-width="2.0"/>
<rect x="839.0" y="239.4" width="6.8" height="6.8" rx="1.2" fill="none" stroke="#e040e8" stroke-width="2.0"/>
<rect x="852.3" y="239.4" width="6.8" height="6.8" rx="1.2" fill="none" stroke="#e040e8" stroke-width="2.0"/>
<rect x="865.6" y="239.4" width="6.8" height="6.8" rx="1.2" fill="none" stroke="#e040e8" stroke-width="2.0"/>
<rect x="878.9" y="239.4" width="6.8" height="6.8" rx="1.2" fill="none" stroke="#e040e8" stroke-width="2.0"/>
<rect x="892.2" y="239.4" width="6.8" height="6.8" rx="1.2" fill="none" stroke="#e040e8" stroke-width="2.0"/>
<rect x="905.5" y="239.4" width="6.8" height="6.8" rx="1.2" fill="none" stroke="#e040e8" stroke-width="2.0"/>
<rect x="799.1" y="252.4" width="6.8" height="6.8" rx="1.2" fill="none" stroke="#e040e8" stroke-width="2.0"/>
<rect x="812.4" y="252.4" width="6.8" height="6.8" rx="1.2" fill="none" stroke="#e040e8" stroke-width="2.0"/>
<rect x="825.7" y="252.4" width="6.8" height="6.8" rx="1.2" fill="none" stroke="#e040e8" stroke-width="2.0"/>
<rect x="839.0" y="252.4" width="6.8" height="6.8" rx="1.2" fill="none" stroke="#e040e8" stroke-width="2.0"/>
<rect x="852.3" y="252.4" width="6.8" height="6.8" rx="1.2" fill="none" stroke="#e040e8" stroke-width="2.0"/>
<rect x="865.6" y="252.4" width="6.8" height="6.8" rx="1.2" fill="none" stroke="#e040e8" stroke-width="2.0"/>
<rect x="878.9" y="252.4" width="6.8" height="6.8" rx="1.2" fill="none" stroke="#e040e8" stroke-width="2.0"/>
<rect x="892.2" y="252.4" width="6.8" height="6.8" rx="1.2" fill="none" stroke="#e040e8" stroke-width="2.0"/>
<rect x="905.5" y="252.4" width="6.8" height="6.8" rx="1.2" fill="none" stroke="#e040e8" stroke-width="2.0"/>
<rect x="799.1" y="265.4" width="6.8" height="6.8" rx="1.2" fill="none" stroke="#e040e8" stroke-width="2.0"/>
<rect x="812.4" y="265.4" width="6.8" height="6.8" rx="1.2" fill="none" stroke="#e040e8" stroke-width="2.0"/>
<rect x="825.7" y="265.4" width="6.8" height="6.8" rx="1.2" fill="none" stroke="#e040e8" stroke-width="2.0"/>
<rect x="839.0" y="265.4" width="6.8" height="6.8" rx="1.2" fill="none" stroke="#e040e8" stroke-width="2.0"/>
<rect x="852.3" y="265.4" width="6.8" height="6.8" rx="1.2" fill="none" stroke="#e040e8" stroke-width="2.0"/>
<rect x="865.6" y="265.4" width="6.8" height="6.8" rx="1.2" fill="none" stroke="#e040e8" stroke-width="2.0"/>
<rect x="878.9" y="265.4" width="6.8" height="6.8" rx="1.2" fill="none" stroke="#e040e8" stroke-width="2.0"/>
<rect x="892.2" y="265.4" width="6.8" height="6.8" rx="1.2" fill="none" stroke="#e040e8" stroke-width="2.0"/>
<rect x="905.5" y="265.4" width="6.8" height="6.8" rx="1.2" fill="none" stroke="#e040e8" stroke-width="2.0"/>
</g>
<rect x="797.5" y="161.2" width="116.2" height="111.2" fill="none" stroke="#ffffff" stroke-width="2" />
<path d="M852.0 217.0L855.5 213.5L859.0 217.0L855.5 220.5Z" fill="#ffee00"/>
<line x1="848.0" y1="217.0" x2="855.0" y2="217.0" stroke="#ffee00" stroke-width="1.3"/>
<clipPath id="cG"><rect x="902.3" y="476.4" width="260" height="226.4"/></clipPath>
<g clip-path="url(#cG)">
<rect x="901.7" y="475.2" width="7.6" height="7.6" rx="1.2" fill="none" stroke="#e040e8" stroke-width="2.2"/>
<rect x="919.2" y="475.2" width="7.6" height="7.6" rx="1.2" fill="none" stroke="#e040e8" stroke-width="2.2"/>
<rect x="936.6" y="475.2" width="7.6" height="7.6" rx="1.2" fill="none" stroke="#e040e8" stroke-width="2.2"/>
<rect x="1041.3" y="475.2" width="7.6" height="7.6" rx="1.2" fill="none" stroke="#e040e8" stroke-width="2.2"/>
<rect x="1058.8" y="475.2" width="7.6" height="7.6" rx="1.2" fill="none" stroke="#e040e8" stroke-width="2.2"/>
<rect x="1076.2" y="475.2" width="7.6" height="7.6" rx="1.2" fill="none" stroke="#e040e8" stroke-width="2.2"/>
<rect x="901.7" y="492.2" width="7.6" height="7.6" rx="1.2" fill="none" stroke="#e040e8" stroke-width="2.2"/>
<rect x="919.2" y="492.2" width="7.6" height="7.6" rx="1.2" fill="none" stroke="#e040e8" stroke-width="2.2"/>
<rect x="936.6" y="492.2" width="7.6" height="7.6" rx="1.2" fill="none" stroke="#e040e8" stroke-width="2.2"/>
<rect x="954.1" y="492.2" width="7.6" height="7.6" rx="1.2" fill="none" stroke="#e040e8" stroke-width="2.2"/>
<rect x="971.5" y="492.2" width="7.6" height="7.6" rx="1.2" fill="none" stroke="#e040e8" stroke-width="2.2"/>
<rect x="989.0" y="492.2" width="7.6" height="7.6" rx="1.2" fill="none" stroke="#e040e8" stroke-width="2.2"/>
<rect x="1006.4" y="492.2" width="7.6" height="7.6" rx="1.2" fill="none" stroke="#e040e8" stroke-width="2.2"/>
<rect x="1023.9" y="492.2" width="7.6" height="7.6" rx="1.2" fill="none" stroke="#e040e8" stroke-width="2.2"/>
<rect x="1041.3" y="492.2" width="7.6" height="7.6" rx="1.2" fill="none" stroke="#e040e8" stroke-width="2.2"/>
<rect x="1058.8" y="492.2" width="7.6" height="7.6" rx="1.2" fill="none" stroke="#e040e8" stroke-width="2.2"/>
<rect x="1076.2" y="492.2" width="7.6" height="7.6" rx="1.2" fill="none" stroke="#e040e8" stroke-width="2.2"/>
<rect x="1093.7" y="492.2" width="7.6" height="7.6" rx="1.2" fill="none" stroke="#e040e8" stroke-width="2.2"/>
<rect x="1111.1" y="492.2" width="7.6" height="7.6" rx="1.2" fill="none" stroke="#e040e8" stroke-width="2.2"/>
<rect x="1128.5" y="492.2" width="7.6" height="7.6" rx="1.2" fill="none" stroke="#e040e8" stroke-width="2.2"/>
<rect x="1146.0" y="492.2" width="7.6" height="7.6" rx="1.2" fill="none" stroke="#e040e8" stroke-width="2.2"/>
<rect x="901.7" y="509.2" width="7.6" height="7.6" rx="1.2" fill="none" stroke="#e040e8" stroke-width="2.2"/>
<rect x="919.2" y="509.2" width="7.6" height="7.6" rx="1.2" fill="none" stroke="#e040e8" stroke-width="2.2"/>
<rect x="936.6" y="509.2" width="7.6" height="7.6" rx="1.2" fill="none" stroke="#e040e8" stroke-width="2.2"/>
<rect x="954.1" y="509.2" width="7.6" height="7.6" rx="1.2" fill="none" stroke="#e040e8" stroke-width="2.2"/>
<rect x="971.5" y="509.2" width="7.6" height="7.6" rx="1.2" fill="none" stroke="#e040e8" stroke-width="2.2"/>
<rect x="989.0" y="509.2" width="7.6" height="7.6" rx="1.2" fill="none" stroke="#e040e8" stroke-width="2.2"/>
<rect x="1006.4" y="509.2" width="7.6" height="7.6" rx="1.2" fill="none" stroke="#e040e8" stroke-width="2.2"/>
<rect x="1023.9" y="509.2" width="7.6" height="7.6" rx="1.2" fill="none" stroke="#e040e8" stroke-width="2.2"/>
<rect x="1041.3" y="509.2" width="7.6" height="7.6" rx="1.2" fill="none" stroke="#e040e8" stroke-width="2.2"/>
<rect x="1058.8" y="509.2" width="7.6" height="7.6" rx="1.2" fill="none" stroke="#e040e8" stroke-width="2.2"/>
<rect x="1076.2" y="509.2" width="7.6" height="7.6" rx="1.2" fill="none" stroke="#e040e8" stroke-width="2.2"/>
<rect x="1093.7" y="509.2" width="7.6" height="7.6" rx="1.2" fill="none" stroke="#e040e8" stroke-width="2.2"/>
<rect x="1111.1" y="509.2" width="7.6" height="7.6" rx="1.2" fill="none" stroke="#e040e8" stroke-width="2.2"/>
<rect x="1128.5" y="509.2" width="7.6" height="7.6" rx="1.2" fill="none" stroke="#e040e8" stroke-width="2.2"/>
<rect x="1146.0" y="509.2" width="7.6" height="7.6" rx="1.2" fill="none" stroke="#e040e8" stroke-width="2.2"/>
<rect x="919.2" y="526.2" width="7.6" height="7.6" rx="1.2" fill="none" stroke="#e040e8" stroke-width="2.2"/>
<rect x="936.6" y="526.2" width="7.6" height="7.6" rx="1.2" fill="none" stroke="#e040e8" stroke-width="2.2"/>
<rect x="954.1" y="526.2" width="7.6" height="7.6" rx="1.2" fill="none" stroke="#e040e8" stroke-width="2.2"/>
<rect x="971.5" y="526.2" width="7.6" height="7.6" rx="1.2" fill="none" stroke="#e040e8" stroke-width="2.2"/>
<rect x="989.0" y="526.2" width="7.6" height="7.6" rx="1.2" fill="none" stroke="#e040e8" stroke-width="2.2"/>
<rect x="1006.4" y="526.2" width="7.6" height="7.6" rx="1.2" fill="none" stroke="#e040e8" stroke-width="2.2"/>
<rect x="1023.9" y="526.2" width="7.6" height="7.6" rx="1.2" fill="none" stroke="#e040e8" stroke-width="2.2"/>
<rect x="1041.3" y="526.2" width="7.6" height="7.6" rx="1.2" fill="none" stroke="#e040e8" stroke-width="2.2"/>
<rect x="1058.8" y="526.2" width="7.6" height="7.6" rx="1.2" fill="none" stroke="#e040e8" stroke-width="2.2"/>
<rect x="1076.2" y="526.2" width="7.6" height="7.6" rx="1.2" fill="none" stroke="#e040e8" stroke-width="2.2"/>
<rect x="1093.7" y="526.2" width="7.6" height="7.6" rx="1.2" fill="none" stroke="#e040e8" stroke-width="2.2"/>
<rect x="1111.1" y="526.2" width="7.6" height="7.6" rx="1.2" fill="none" stroke="#e040e8" stroke-width="2.2"/>
<rect x="1128.5" y="526.2" width="7.6" height="7.6" rx="1.2" fill="none" stroke="#e040e8" stroke-width="2.2"/>
<rect x="1146.0" y="526.2" width="7.6" height="7.6" rx="1.2" fill="none" stroke="#e040e8" stroke-width="2.2"/>
<rect x="919.2" y="543.2" width="7.6" height="7.6" rx="1.2" fill="none" stroke="#e040e8" stroke-width="2.2"/>
<rect x="936.6" y="543.2" width="7.6" height="7.6" rx="1.2" fill="none" stroke="#e040e8" stroke-width="2.2"/>
<rect x="954.1" y="543.2" width="7.6" height="7.6" rx="1.2" fill="none" stroke="#e040e8" stroke-width="2.2"/>
<rect x="971.5" y="543.2" width="7.6" height="7.6" rx="1.2" fill="none" stroke="#e040e8" stroke-width="2.2"/>
<rect x="989.0" y="543.2" width="7.6" height="7.6" rx="1.2" fill="none" stroke="#e040e8" stroke-width="2.2"/>
<rect x="1006.4" y="543.2" width="7.6" height="7.6" rx="1.2" fill="none" stroke="#e040e8" stroke-width="2.2"/>
<rect x="1023.9" y="543.2" width="7.6" height="7.6" rx="1.2" fill="none" stroke="#e040e8" stroke-width="2.2"/>
<rect x="1041.3" y="543.2" width="7.6" height="7.6" rx="1.2" fill="none" stroke="#e040e8" stroke-width="2.2"/>
<rect x="1058.8" y="543.2" width="7.6" height="7.6" rx="1.2" fill="none" stroke="#e040e8" stroke-width="2.2"/>
<rect x="1076.2" y="543.2" width="7.6" height="7.6" rx="1.2" fill="none" stroke="#e040e8" stroke-width="2.2"/>
<rect x="1093.7" y="543.2" width="7.6" height="7.6" rx="1.2" fill="none" stroke="#e040e8" stroke-width="2.2"/>
<rect x="1111.1" y="543.2" width="7.6" height="7.6" rx="1.2" fill="none" stroke="#e040e8" stroke-width="2.2"/>
<rect x="1128.5" y="543.2" width="7.6" height="7.6" rx="1.2" fill="none" stroke="#e040e8" stroke-width="2.2"/>
<rect x="1146.0" y="543.2" width="7.6" height="7.6" rx="1.2" fill="none" stroke="#e040e8" stroke-width="2.2"/>
<rect x="919.2" y="560.2" width="7.6" height="7.6" rx="1.2" fill="none" stroke="#e040e8" stroke-width="2.2"/>
<rect x="936.6" y="560.2" width="7.6" height="7.6" rx="1.2" fill="none" stroke="#e040e8" stroke-width="2.2"/>
<rect x="954.1" y="560.2" width="7.6" height="7.6" rx="1.2" fill="none" stroke="#e040e8" stroke-width="2.2"/>
<rect x="971.5" y="560.2" width="7.6" height="7.6" rx="1.2" fill="none" stroke="#e040e8" stroke-width="2.2"/>
<rect x="989.0" y="560.2" width="7.6" height="7.6" rx="1.2" fill="none" stroke="#e040e8" stroke-width="2.2"/>
<rect x="1128.5" y="560.2" width="7.6" height="7.6" rx="1.2" fill="none" stroke="#e040e8" stroke-width="2.2"/>
<rect x="1146.0" y="560.2" width="7.6" height="7.6" rx="1.2" fill="none" stroke="#e040e8" stroke-width="2.2"/>
<rect x="919.2" y="577.2" width="7.6" height="7.6" rx="1.2" fill="none" stroke="#e040e8" stroke-width="2.2"/>
<rect x="936.6" y="577.2" width="7.6" height="7.6" rx="1.2" fill="none" stroke="#e040e8" stroke-width="2.2"/>
<rect x="954.1" y="577.2" width="7.6" height="7.6" rx="1.2" fill="none" stroke="#e040e8" stroke-width="2.2"/>
<rect x="971.5" y="577.2" width="7.6" height="7.6" rx="1.2" fill="none" stroke="#e040e8" stroke-width="2.2"/>
<rect x="989.0" y="577.2" width="7.6" height="7.6" rx="1.2" fill="none" stroke="#e040e8" stroke-width="2.2"/>
<rect x="1128.5" y="577.2" width="7.6" height="7.6" rx="1.2" fill="none" stroke="#e040e8" stroke-width="2.2"/>
<rect x="1146.0" y="577.2" width="7.6" height="7.6" rx="1.2" fill="none" stroke="#e040e8" stroke-width="2.2"/>
<rect x="919.2" y="594.2" width="7.6" height="7.6" rx="1.2" fill="none" stroke="#e040e8" stroke-width="2.2"/>
<rect x="936.6" y="594.2" width="7.6" height="7.6" rx="1.2" fill="none" stroke="#e040e8" stroke-width="2.2"/>
<rect x="954.1" y="594.2" width="7.6" height="7.6" rx="1.2" fill="none" stroke="#e040e8" stroke-width="2.2"/>
<rect x="971.5" y="594.2" width="7.6" height="7.6" rx="1.2" fill="none" stroke="#e040e8" stroke-width="2.2"/>
<rect x="989.0" y="594.2" width="7.6" height="7.6" rx="1.2" fill="none" stroke="#e040e8" stroke-width="2.2"/>
<rect x="1128.5" y="594.2" width="7.6" height="7.6" rx="1.2" fill="none" stroke="#e040e8" stroke-width="2.2"/>
<rect x="1146.0" y="594.2" width="7.6" height="7.6" rx="1.2" fill="none" stroke="#e040e8" stroke-width="2.2"/>
<rect x="919.2" y="611.2" width="7.6" height="7.6" rx="1.2" fill="none" stroke="#e040e8" stroke-width="2.2"/>
<rect x="936.6" y="611.2" width="7.6" height="7.6" rx="1.2" fill="none" stroke="#e040e8" stroke-width="2.2"/>
<rect x="954.1" y="611.2" width="7.6" height="7.6" rx="1.2" fill="none" stroke="#e040e8" stroke-width="2.2"/>
<rect x="971.5" y="611.2" width="7.6" height="7.6" rx="1.2" fill="none" stroke="#e040e8" stroke-width="2.2"/>
<rect x="989.0" y="611.2" width="7.6" height="7.6" rx="1.2" fill="none" stroke="#e040e8" stroke-width="2.2"/>
<rect x="1128.5" y="611.2" width="7.6" height="7.6" rx="1.2" fill="none" stroke="#e040e8" stroke-width="2.2"/>
<rect x="1146.0" y="611.2" width="7.6" height="7.6" rx="1.2" fill="none" stroke="#e040e8" stroke-width="2.2"/>
<rect x="919.2" y="628.2" width="7.6" height="7.6" rx="1.2" fill="none" stroke="#e040e8" stroke-width="2.2"/>
<rect x="936.6" y="628.2" width="7.6" height="7.6" rx="1.2" fill="none" stroke="#e040e8" stroke-width="2.2"/>
<rect x="954.1" y="628.2" width="7.6" height="7.6" rx="1.2" fill="none" stroke="#e040e8" stroke-width="2.2"/>
<rect x="971.5" y="628.2" width="7.6" height="7.6" rx="1.2" fill="none" stroke="#e040e8" stroke-width="2.2"/>
<rect x="989.0" y="628.2" width="7.6" height="7.6" rx="1.2" fill="none" stroke="#e040e8" stroke-width="2.2"/>
<rect x="1006.4" y="628.2" width="7.6" height="7.6" rx="1.2" fill="none" stroke="#e040e8" stroke-width="2.2"/>
<rect x="1023.9" y="628.2" width="7.6" height="7.6" rx="1.2" fill="none" stroke="#e040e8" stroke-width="2.2"/>
<rect x="1041.3" y="628.2" width="7.6" height="7.6" rx="1.2" fill="none" stroke="#e040e8" stroke-width="2.2"/>
<rect x="1058.8" y="628.2" width="7.6" height="7.6" rx="1.2" fill="none" stroke="#e040e8" stroke-width="2.2"/>
<rect x="1076.2" y="628.2" width="7.6" height="7.6" rx="1.2" fill="none" stroke="#e040e8" stroke-width="2.2"/>
<rect x="1093.7" y="628.2" width="7.6" height="7.6" rx="1.2" fill="none" stroke="#e040e8" stroke-width="2.2"/>
<rect x="1111.1" y="628.2" width="7.6" height="7.6" rx="1.2" fill="none" stroke="#e040e8" stroke-width="2.2"/>
<rect x="1128.5" y="628.2" width="7.6" height="7.6" rx="1.2" fill="none" stroke="#e040e8" stroke-width="2.2"/>
<rect x="1146.0" y="628.2" width="7.6" height="7.6" rx="1.2" fill="none" stroke="#e040e8" stroke-width="2.2"/>
<rect x="919.2" y="645.2" width="7.6" height="7.6" rx="1.2" fill="none" stroke="#e040e8" stroke-width="2.2"/>
<rect x="936.6" y="645.2" width="7.6" height="7.6" rx="1.2" fill="none" stroke="#e040e8" stroke-width="2.2"/>
<rect x="954.1" y="645.2" width="7.6" height="7.6" rx="1.2" fill="none" stroke="#e040e8" stroke-width="2.2"/>
<rect x="971.5" y="645.2" width="7.6" height="7.6" rx="1.2" fill="none" stroke="#e040e8" stroke-width="2.2"/>
<rect x="989.0" y="645.2" width="7.6" height="7.6" rx="1.2" fill="none" stroke="#e040e8" stroke-width="2.2"/>
<rect x="1006.4" y="645.2" width="7.6" height="7.6" rx="1.2" fill="none" stroke="#e040e8" stroke-width="2.2"/>
<rect x="1023.9" y="645.2" width="7.6" height="7.6" rx="1.2" fill="none" stroke="#e040e8" stroke-width="2.2"/>
<rect x="1041.3" y="645.2" width="7.6" height="7.6" rx="1.2" fill="none" stroke="#e040e8" stroke-width="2.2"/>
<rect x="1058.8" y="645.2" width="7.6" height="7.6" rx="1.2" fill="none" stroke="#e040e8" stroke-width="2.2"/>
<rect x="1076.2" y="645.2" width="7.6" height="7.6" rx="1.2" fill="none" stroke="#e040e8" stroke-width="2.2"/>
<rect x="1093.7" y="645.2" width="7.6" height="7.6" rx="1.2" fill="none" stroke="#e040e8" stroke-width="2.2"/>
<rect x="1111.1" y="645.2" width="7.6" height="7.6" rx="1.2" fill="none" stroke="#e040e8" stroke-width="2.2"/>
<rect x="1128.5" y="645.2" width="7.6" height="7.6" rx="1.2" fill="none" stroke="#e040e8" stroke-width="2.2"/>
<rect x="1146.0" y="645.2" width="7.6" height="7.6" rx="1.2" fill="none" stroke="#e040e8" stroke-width="2.2"/>
<rect x="901.7" y="662.2" width="7.6" height="7.6" rx="1.2" fill="none" stroke="#e040e8" stroke-width="2.2"/>
<rect x="919.2" y="662.2" width="7.6" height="7.6" rx="1.2" fill="none" stroke="#e040e8" stroke-width="2.2"/>
<rect x="936.6" y="662.2" width="7.6" height="7.6" rx="1.2" fill="none" stroke="#e040e8" stroke-width="2.2"/>
<rect x="954.1" y="662.2" width="7.6" height="7.6" rx="1.2" fill="none" stroke="#e040e8" stroke-width="2.2"/>
<rect x="971.5" y="662.2" width="7.6" height="7.6" rx="1.2" fill="none" stroke="#e040e8" stroke-width="2.2"/>
<rect x="989.0" y="662.2" width="7.6" height="7.6" rx="1.2" fill="none" stroke="#e040e8" stroke-width="2.2"/>
<rect x="1006.4" y="662.2" width="7.6" height="7.6" rx="1.2" fill="none" stroke="#e040e8" stroke-width="2.2"/>
<rect x="1023.9" y="662.2" width="7.6" height="7.6" rx="1.2" fill="none" stroke="#e040e8" stroke-width="2.2"/>
<rect x="1041.3" y="662.2" width="7.6" height="7.6" rx="1.2" fill="none" stroke="#e040e8" stroke-width="2.2"/>
<rect x="1058.8" y="662.2" width="7.6" height="7.6" rx="1.2" fill="none" stroke="#e040e8" stroke-width="2.2"/>
<rect x="1076.2" y="662.2" width="7.6" height="7.6" rx="1.2" fill="none" stroke="#e040e8" stroke-width="2.2"/>
<rect x="1093.7" y="662.2" width="7.6" height="7.6" rx="1.2" fill="none" stroke="#e040e8" stroke-width="2.2"/>
<rect x="1111.1" y="662.2" width="7.6" height="7.6" rx="1.2" fill="none" stroke="#e040e8" stroke-width="2.2"/>
<rect x="1128.5" y="662.2" width="7.6" height="7.6" rx="1.2" fill="none" stroke="#e040e8" stroke-width="2.2"/>
<rect x="1146.0" y="662.2" width="7.6" height="7.6" rx="1.2" fill="none" stroke="#e040e8" stroke-width="2.2"/>
<rect x="901.7" y="679.2" width="7.6" height="7.6" rx="1.2" fill="none" stroke="#e040e8" stroke-width="2.2"/>
<rect x="919.2" y="679.2" width="7.6" height="7.6" rx="1.2" fill="none" stroke="#e040e8" stroke-width="2.2"/>
<rect x="936.6" y="679.2" width="7.6" height="7.6" rx="1.2" fill="none" stroke="#e040e8" stroke-width="2.2"/>
<rect x="954.1" y="679.2" width="7.6" height="7.6" rx="1.2" fill="none" stroke="#e040e8" stroke-width="2.2"/>
<rect x="971.5" y="679.2" width="7.6" height="7.6" rx="1.2" fill="none" stroke="#e040e8" stroke-width="2.2"/>
<rect x="989.0" y="679.2" width="7.6" height="7.6" rx="1.2" fill="none" stroke="#e040e8" stroke-width="2.2"/>
<rect x="1006.4" y="679.2" width="7.6" height="7.6" rx="1.2" fill="none" stroke="#e040e8" stroke-width="2.2"/>
<rect x="1023.9" y="679.2" width="7.6" height="7.6" rx="1.2" fill="none" stroke="#e040e8" stroke-width="2.2"/>
<rect x="1041.3" y="679.2" width="7.6" height="7.6" rx="1.2" fill="none" stroke="#e040e8" stroke-width="2.2"/>
<rect x="1058.8" y="679.2" width="7.6" height="7.6" rx="1.2" fill="none" stroke="#e040e8" stroke-width="2.2"/>
<rect x="1076.2" y="679.2" width="7.6" height="7.6" rx="1.2" fill="none" stroke="#e040e8" stroke-width="2.2"/>
<rect x="1093.7" y="679.2" width="7.6" height="7.6" rx="1.2" fill="none" stroke="#e040e8" stroke-width="2.2"/>
<rect x="1111.1" y="679.2" width="7.6" height="7.6" rx="1.2" fill="none" stroke="#e040e8" stroke-width="2.2"/>
<rect x="1128.5" y="679.2" width="7.6" height="7.6" rx="1.2" fill="none" stroke="#e040e8" stroke-width="2.2"/>
<rect x="1146.0" y="679.2" width="7.6" height="7.6" rx="1.2" fill="none" stroke="#e040e8" stroke-width="2.2"/>
<rect x="901.7" y="696.2" width="7.6" height="7.6" rx="1.2" fill="none" stroke="#e040e8" stroke-width="2.2"/>
<rect x="919.2" y="696.2" width="7.6" height="7.6" rx="1.2" fill="none" stroke="#e040e8" stroke-width="2.2"/>
<rect x="936.6" y="696.2" width="7.6" height="7.6" rx="1.2" fill="none" stroke="#e040e8" stroke-width="2.2"/>
<rect x="1041.3" y="696.2" width="7.6" height="7.6" rx="1.2" fill="none" stroke="#e040e8" stroke-width="2.2"/>
<rect x="1058.8" y="696.2" width="7.6" height="7.6" rx="1.2" fill="none" stroke="#e040e8" stroke-width="2.2"/>
<rect x="1076.2" y="696.2" width="7.6" height="7.6" rx="1.2" fill="none" stroke="#e040e8" stroke-width="2.2"/>
</g>
<path d="M1162 475.4H901.3V703.8H1162" fill="none" stroke="#ffffff" stroke-width="2"/>
<path d="M1059.0 590.0L1062.5 586.5L1066.0 590.0L1062.5 593.5Z" fill="#ffee00"/>
<line x1="1062.0" y1="590.0" x2="1071.0" y2="590.0" stroke="#ffee00" stroke-width="1.3"/>
<rect x="512.1" y="626.1" width="7.0" height="7.0" rx="1.2" fill="none" stroke="#e040e8" stroke-width="2.0"/>
<rect x="525.6" y="626.1" width="7.0" height="7.0" rx="1.2" fill="none" stroke="#e040e8" stroke-width="2.0"/>
<rect x="539.2" y="626.1" width="7.0" height="7.0" rx="1.2" fill="none" stroke="#e040e8" stroke-width="2.0"/>
<rect x="552.8" y="626.1" width="7.0" height="7.0" rx="1.2" fill="none" stroke="#e040e8" stroke-width="2.0"/>
<rect x="566.3" y="626.1" width="7.0" height="7.0" rx="1.2" fill="none" stroke="#e040e8" stroke-width="2.0"/>
<rect x="579.9" y="626.1" width="7.0" height="7.0" rx="1.2" fill="none" stroke="#e040e8" stroke-width="2.0"/>
<rect x="593.4" y="626.1" width="7.0" height="7.0" rx="1.2" fill="none" stroke="#e040e8" stroke-width="2.0"/>
<rect x="607.0" y="626.1" width="7.0" height="7.0" rx="1.2" fill="none" stroke="#e040e8" stroke-width="2.0"/>
<rect x="620.5" y="626.1" width="7.0" height="7.0" rx="1.2" fill="none" stroke="#e040e8" stroke-width="2.0"/>
<rect x="512.1" y="639.3" width="7.0" height="7.0" rx="1.2" fill="none" stroke="#e040e8" stroke-width="2.0"/>
<rect x="525.6" y="639.3" width="7.0" height="7.0" rx="1.2" fill="none" stroke="#e040e8" stroke-width="2.0"/>
<rect x="539.2" y="639.3" width="7.0" height="7.0" rx="1.2" fill="none" stroke="#e040e8" stroke-width="2.0"/>
<rect x="552.8" y="639.3" width="7.0" height="7.0" rx="1.2" fill="none" stroke="#e040e8" stroke-width="2.0"/>
<rect x="566.3" y="639.3" width="7.0" height="7.0" rx="1.2" fill="none" stroke="#e040e8" stroke-width="2.0"/>
<rect x="579.9" y="639.3" width="7.0" height="7.0" rx="1.2" fill="none" stroke="#e040e8" stroke-width="2.0"/>
<rect x="593.4" y="639.3" width="7.0" height="7.0" rx="1.2" fill="none" stroke="#e040e8" stroke-width="2.0"/>
<rect x="607.0" y="639.3" width="7.0" height="7.0" rx="1.2" fill="none" stroke="#e040e8" stroke-width="2.0"/>
<rect x="620.5" y="639.3" width="7.0" height="7.0" rx="1.2" fill="none" stroke="#e040e8" stroke-width="2.0"/>
<rect x="512.1" y="652.5" width="7.0" height="7.0" rx="1.2" fill="none" stroke="#e040e8" stroke-width="2.0"/>
<rect x="525.6" y="652.5" width="7.0" height="7.0" rx="1.2" fill="none" stroke="#e040e8" stroke-width="2.0"/>
<rect x="607.0" y="652.5" width="7.0" height="7.0" rx="1.2" fill="none" stroke="#e040e8" stroke-width="2.0"/>
<rect x="620.5" y="652.5" width="7.0" height="7.0" rx="1.2" fill="none" stroke="#e040e8" stroke-width="2.0"/>
<rect x="512.1" y="665.6" width="7.0" height="7.0" rx="1.2" fill="none" stroke="#e040e8" stroke-width="2.0"/>
<rect x="525.6" y="665.6" width="7.0" height="7.0" rx="1.2" fill="none" stroke="#e040e8" stroke-width="2.0"/>
<rect x="607.0" y="665.6" width="7.0" height="7.0" rx="1.2" fill="none" stroke="#e040e8" stroke-width="2.0"/>
<rect x="620.5" y="665.6" width="7.0" height="7.0" rx="1.2" fill="none" stroke="#e040e8" stroke-width="2.0"/>
<rect x="512.1" y="678.8" width="7.0" height="7.0" rx="1.2" fill="none" stroke="#e040e8" stroke-width="2.0"/>
<rect x="525.6" y="678.8" width="7.0" height="7.0" rx="1.2" fill="none" stroke="#e040e8" stroke-width="2.0"/>
<rect x="607.0" y="678.8" width="7.0" height="7.0" rx="1.2" fill="none" stroke="#e040e8" stroke-width="2.0"/>
<rect x="620.5" y="678.8" width="7.0" height="7.0" rx="1.2" fill="none" stroke="#e040e8" stroke-width="2.0"/>
<rect x="512.1" y="692.0" width="7.0" height="7.0" rx="1.2" fill="none" stroke="#e040e8" stroke-width="2.0"/>
<rect x="525.6" y="692.0" width="7.0" height="7.0" rx="1.2" fill="none" stroke="#e040e8" stroke-width="2.0"/>
<rect x="607.0" y="692.0" width="7.0" height="7.0" rx="1.2" fill="none" stroke="#e040e8" stroke-width="2.0"/>
<rect x="620.5" y="692.0" width="7.0" height="7.0" rx="1.2" fill="none" stroke="#e040e8" stroke-width="2.0"/>
<rect x="512.1" y="705.2" width="7.0" height="7.0" rx="1.2" fill="none" stroke="#e040e8" stroke-width="2.0"/>
<rect x="525.6" y="705.2" width="7.0" height="7.0" rx="1.2" fill="none" stroke="#e040e8" stroke-width="2.0"/>
<rect x="512.1" y="718.4" width="7.0" height="7.0" rx="1.2" fill="none" stroke="#e040e8" stroke-width="2.0"/>
<rect x="525.6" y="718.4" width="7.0" height="7.0" rx="1.2" fill="none" stroke="#e040e8" stroke-width="2.0"/>
<rect x="539.2" y="718.4" width="7.0" height="7.0" rx="1.2" fill="none" stroke="#e040e8" stroke-width="2.0"/>
<rect x="552.8" y="718.4" width="7.0" height="7.0" rx="1.2" fill="none" stroke="#e040e8" stroke-width="2.0"/>
<rect x="566.3" y="718.4" width="7.0" height="7.0" rx="1.2" fill="none" stroke="#e040e8" stroke-width="2.0"/>
<rect x="579.9" y="718.4" width="7.0" height="7.0" rx="1.2" fill="none" stroke="#e040e8" stroke-width="2.0"/>
<rect x="593.4" y="718.4" width="7.0" height="7.0" rx="1.2" fill="none" stroke="#e040e8" stroke-width="2.0"/>
<rect x="607.0" y="718.4" width="7.0" height="7.0" rx="1.2" fill="none" stroke="#e040e8" stroke-width="2.0"/>
<rect x="620.5" y="718.4" width="7.0" height="7.0" rx="1.2" fill="none" stroke="#e040e8" stroke-width="2.0"/>
<rect x="512.1" y="731.5" width="7.0" height="7.0" rx="1.2" fill="none" stroke="#e040e8" stroke-width="2.0"/>
<rect x="525.6" y="731.5" width="7.0" height="7.0" rx="1.2" fill="none" stroke="#e040e8" stroke-width="2.0"/>
<rect x="539.2" y="731.5" width="7.0" height="7.0" rx="1.2" fill="none" stroke="#e040e8" stroke-width="2.0"/>
<rect x="552.8" y="731.5" width="7.0" height="7.0" rx="1.2" fill="none" stroke="#e040e8" stroke-width="2.0"/>
<rect x="566.3" y="731.5" width="7.0" height="7.0" rx="1.2" fill="none" stroke="#e040e8" stroke-width="2.0"/>
<rect x="579.9" y="731.5" width="7.0" height="7.0" rx="1.2" fill="none" stroke="#e040e8" stroke-width="2.0"/>
<rect x="593.4" y="731.5" width="7.0" height="7.0" rx="1.2" fill="none" stroke="#e040e8" stroke-width="2.0"/>
<rect x="607.0" y="731.5" width="7.0" height="7.0" rx="1.2" fill="none" stroke="#e040e8" stroke-width="2.0"/>
<rect x="620.5" y="731.5" width="7.0" height="7.0" rx="1.2" fill="none" stroke="#e040e8" stroke-width="2.0"/>
<rect x="552.9" y="665.6" width="6.6" height="6.6" rx="1.2" fill="none" stroke="#f0f020" stroke-width="2.0"/>
<rect x="566.5" y="665.6" width="6.6" height="6.6" rx="1.2" fill="none" stroke="#f0f020" stroke-width="2.0"/>
<rect x="580.0" y="665.6" width="6.6" height="6.6" rx="1.2" fill="none" stroke="#f0f020" stroke-width="2.0"/>
<rect x="552.9" y="679.0" width="6.6" height="6.6" rx="1.2" fill="none" stroke="#f0f020" stroke-width="2.0"/>
<rect x="565.8" y="678.2" width="8" height="8" fill="#fff8c0"/>
<rect x="580.0" y="679.0" width="6.6" height="6.6" rx="1.2" fill="none" stroke="#f0f020" stroke-width="2.0"/>
<rect x="552.9" y="692.3" width="6.6" height="6.6" rx="1.2" fill="none" stroke="#f0f020" stroke-width="2.0"/>
<rect x="566.5" y="692.3" width="6.6" height="6.6" rx="1.2" fill="none" stroke="#f0f020" stroke-width="2.0"/>
<rect x="580.0" y="692.3" width="6.6" height="6.6" rx="1.2" fill="none" stroke="#f0f020" stroke-width="2.0"/>
<line x1="574.0" y1="682.2" x2="580.0" y2="682.2" stroke="#ffffff" stroke-width="1.2"/>
<rect x="351.2" y="165.8" width="18.3" height="5.9" fill="none" stroke="#ffffff" stroke-width="2" />
<line x1="353.2" y1="168.8" x2="360.4" y2="168.8" stroke="#e8e8a0" stroke-width="1.3"/>
<line x1="356.9" y1="166.8" x2="356.9" y2="170.7" stroke="#d060c0" stroke-width="1.2"/>
<circle cx="360.4" cy="168.8" r="2.8" fill="#ffee00"/>
<rect x="351.2" y="207.7" width="18.3" height="5.9" fill="none" stroke="#ffffff" stroke-width="2" />
<line x1="353.2" y1="210.6" x2="360.4" y2="210.6" stroke="#e8e8a0" stroke-width="1.3"/>
<line x1="356.9" y1="208.7" x2="356.9" y2="212.6" stroke="#d060c0" stroke-width="1.2"/>
<circle cx="360.4" cy="210.6" r="2.8" fill="#ffee00"/>
<rect x="351.2" y="227.0" width="18.3" height="6.0" fill="none" stroke="#ffffff" stroke-width="2" />
<line x1="353.2" y1="230.0" x2="360.4" y2="230.0" stroke="#e8e8a0" stroke-width="1.3"/>
<line x1="356.9" y1="228.0" x2="356.9" y2="232.0" stroke="#d060c0" stroke-width="1.2"/>
<circle cx="360.4" cy="230.0" r="2.8" fill="#ffee00"/>
<rect x="351.2" y="242.8" width="18.3" height="6.0" fill="none" stroke="#ffffff" stroke-width="2" />
<line x1="353.2" y1="245.8" x2="360.4" y2="245.8" stroke="#e8e8a0" stroke-width="1.3"/>
<line x1="356.9" y1="243.8" x2="356.9" y2="247.8" stroke="#d060c0" stroke-width="1.2"/>
<circle cx="360.4" cy="245.8" r="2.8" fill="#ffee00"/>
<rect x="351.2" y="258.3" width="18.3" height="6.0" fill="none" stroke="#ffffff" stroke-width="2" />
<line x1="353.2" y1="261.3" x2="360.4" y2="261.3" stroke="#e8e8a0" stroke-width="1.3"/>
<line x1="356.9" y1="259.3" x2="356.9" y2="263.3" stroke="#d060c0" stroke-width="1.2"/>
<circle cx="360.4" cy="261.3" r="2.8" fill="#ffee00"/>
<rect x="351.2" y="273.9" width="18.3" height="6.0" fill="none" stroke="#ffffff" stroke-width="2" />
<line x1="353.2" y1="276.9" x2="360.4" y2="276.9" stroke="#e8e8a0" stroke-width="1.3"/>
<line x1="356.9" y1="274.9" x2="356.9" y2="278.9" stroke="#d060c0" stroke-width="1.2"/>
<circle cx="360.4" cy="276.9" r="2.8" fill="#ffee00"/>
<rect x="674.2" y="226.8" width="18.0" height="6.0" fill="none" stroke="#ffffff" stroke-width="2" />
<line x1="676.2" y1="229.8" x2="683.2" y2="229.8" stroke="#e8e8a0" stroke-width="1.3"/>
<line x1="679.8" y1="227.8" x2="679.8" y2="231.8" stroke="#d060c0" stroke-width="1.2"/>
<circle cx="683.2" cy="229.8" r="2.8" fill="#ffee00"/>
<rect x="674.2" y="241.0" width="18.0" height="5.5" fill="none" stroke="#ffffff" stroke-width="2" />
<line x1="676.2" y1="243.8" x2="683.2" y2="243.8" stroke="#e8e8a0" stroke-width="1.3"/>
<line x1="679.8" y1="242.0" x2="679.8" y2="245.5" stroke="#d060c0" stroke-width="1.2"/>
<circle cx="683.2" cy="243.8" r="2.8" fill="#ffee00"/>
<rect x="962.2" y="139.8" width="18.8" height="5.5" fill="none" stroke="#ffffff" stroke-width="2" />
<line x1="964.2" y1="142.5" x2="971.6" y2="142.5" stroke="#e8e8a0" stroke-width="1.3"/>
<line x1="968.1" y1="140.8" x2="968.1" y2="144.2" stroke="#d060c0" stroke-width="1.2"/>
<circle cx="971.6" cy="142.5" r="2.8" fill="#ffee00"/>
<rect x="962.2" y="154.8" width="17.5" height="6.2" fill="none" stroke="#ffffff" stroke-width="2" />
<line x1="964.2" y1="157.9" x2="971.0" y2="157.9" stroke="#e8e8a0" stroke-width="1.3"/>
<line x1="967.5" y1="155.8" x2="967.5" y2="160.0" stroke="#d060c0" stroke-width="1.2"/>
<circle cx="971.0" cy="157.9" r="2.8" fill="#ffee00"/>
<rect x="966.5" y="169.8" width="17.5" height="6.8" fill="none" stroke="#ffffff" stroke-width="2" />
<line x1="968.5" y1="173.1" x2="975.2" y2="173.1" stroke="#e8e8a0" stroke-width="1.3"/>
<line x1="971.8" y1="170.8" x2="971.8" y2="175.5" stroke="#d060c0" stroke-width="1.2"/>
<circle cx="975.2" cy="173.1" r="2.8" fill="#ffee00"/>
<rect x="964.2" y="268.5" width="18.0" height="6.2" fill="none" stroke="#ffffff" stroke-width="2" />
<line x1="966.2" y1="271.6" x2="973.2" y2="271.6" stroke="#e8e8a0" stroke-width="1.3"/>
<line x1="969.8" y1="269.5" x2="969.8" y2="273.8" stroke="#d060c0" stroke-width="1.2"/>
<circle cx="973.2" cy="271.6" r="2.8" fill="#ffee00"/>
<rect x="345.9" y="367.1" width="18.4" height="5.4" fill="none" stroke="#ffffff" stroke-width="2" />
<line x1="347.9" y1="369.8" x2="355.1" y2="369.8" stroke="#e8e8a0" stroke-width="1.3"/>
<line x1="351.6" y1="368.1" x2="351.6" y2="371.5" stroke="#d060c0" stroke-width="1.2"/>
<circle cx="355.1" cy="369.8" r="2.8" fill="#ffee00"/>
<rect x="345.9" y="383.2" width="18.4" height="5.4" fill="none" stroke="#ffffff" stroke-width="2" />
<line x1="347.9" y1="385.9" x2="355.1" y2="385.9" stroke="#e8e8a0" stroke-width="1.3"/>
<line x1="351.6" y1="384.2" x2="351.6" y2="387.6" stroke="#d060c0" stroke-width="1.2"/>
<circle cx="355.1" cy="385.9" r="2.8" fill="#ffee00"/>
<rect x="557.2" y="384.2" width="18.0" height="5.4" fill="none" stroke="#ffffff" stroke-width="2" />
<line x1="559.2" y1="386.9" x2="566.2" y2="386.9" stroke="#e8e8a0" stroke-width="1.3"/>
<line x1="562.7" y1="385.2" x2="562.7" y2="388.6" stroke="#d060c0" stroke-width="1.2"/>
<circle cx="566.2" cy="386.9" r="2.8" fill="#ffee00"/>
<rect x="456.0" y="506.5" width="17.5" height="6.2" fill="none" stroke="#ffffff" stroke-width="2" />
<line x1="458.0" y1="509.6" x2="464.8" y2="509.6" stroke="#e8e8a0" stroke-width="1.3"/>
<line x1="461.2" y1="507.5" x2="461.2" y2="511.8" stroke="#d060c0" stroke-width="1.2"/>
<circle cx="464.8" cy="509.6" r="2.8" fill="#ffee00"/>
<rect x="486.8" y="506.5" width="17.8" height="6.2" fill="none" stroke="#ffffff" stroke-width="2" />
<line x1="488.8" y1="509.6" x2="495.6" y2="509.6" stroke="#e8e8a0" stroke-width="1.3"/>
<line x1="492.1" y1="507.5" x2="492.1" y2="511.8" stroke="#d060c0" stroke-width="1.2"/>
<circle cx="495.6" cy="509.6" r="2.8" fill="#ffee00"/>
<rect x="566.8" y="520.5" width="18.0" height="6.0" fill="none" stroke="#ffffff" stroke-width="2" />
<line x1="568.8" y1="523.5" x2="575.8" y2="523.5" stroke="#e8e8a0" stroke-width="1.3"/>
<line x1="572.2" y1="521.5" x2="572.2" y2="525.5" stroke="#d060c0" stroke-width="1.2"/>
<circle cx="575.8" cy="523.5" r="2.8" fill="#ffee00"/>
<rect x="656.8" y="583.5" width="17.2" height="5.5" fill="none" stroke="#ffffff" stroke-width="2" />
<line x1="658.8" y1="586.2" x2="665.4" y2="586.2" stroke="#e8e8a0" stroke-width="1.3"/>
<line x1="661.9" y1="584.5" x2="661.9" y2="588.0" stroke="#d060c0" stroke-width="1.2"/>
<circle cx="665.4" cy="586.2" r="2.8" fill="#ffee00"/>
<rect x="667.2" y="601.0" width="18.0" height="5.5" fill="none" stroke="#ffffff" stroke-width="2" />
<line x1="669.2" y1="603.8" x2="676.2" y2="603.8" stroke="#e8e8a0" stroke-width="1.3"/>
<line x1="672.8" y1="602.0" x2="672.8" y2="605.5" stroke="#d060c0" stroke-width="1.2"/>
<circle cx="676.2" cy="603.8" r="2.8" fill="#ffee00"/>
<rect x="378.1" y="645.0" width="18.0" height="6.9" fill="none" stroke="#ffffff" stroke-width="2" />
<line x1="380.1" y1="648.5" x2="387.1" y2="648.5" stroke="#e8e8a0" stroke-width="1.3"/>
<line x1="383.6" y1="646.0" x2="383.6" y2="650.9" stroke="#d060c0" stroke-width="1.2"/>
<circle cx="387.1" cy="648.5" r="2.8" fill="#ffee00"/>
<rect x="433.2" y="644.3" width="17.6" height="5.4" fill="none" stroke="#ffffff" stroke-width="2" />
<line x1="435.2" y1="647.0" x2="442.0" y2="647.0" stroke="#e8e8a0" stroke-width="1.3"/>
<line x1="438.5" y1="645.3" x2="438.5" y2="648.7" stroke="#d060c0" stroke-width="1.2"/>
<circle cx="442.0" cy="647.0" r="2.8" fill="#ffee00"/>
<rect x="433.2" y="659.2" width="17.6" height="6.0" fill="none" stroke="#ffffff" stroke-width="2" />
<line x1="435.2" y1="662.2" x2="442.0" y2="662.2" stroke="#e8e8a0" stroke-width="1.3"/>
<line x1="438.5" y1="660.2" x2="438.5" y2="664.2" stroke="#d060c0" stroke-width="1.2"/>
<circle cx="442.0" cy="662.2" r="2.8" fill="#ffee00"/>
<rect x="683.5" y="260.5" width="5.5" height="17.2" fill="none" stroke="#ffffff" stroke-width="2" />
<line x1="686.2" y1="262.5" x2="686.2" y2="269.1" stroke="#e8e8a0" stroke-width="1.3"/>
<line x1="684.5" y1="265.6" x2="688.0" y2="265.6" stroke="#d060c0" stroke-width="1.2"/>
<circle cx="686.2" cy="269.1" r="2.8" fill="#ffee00"/>
<rect x="680.2" y="287.8" width="6.8" height="18.0" fill="none" stroke="#ffffff" stroke-width="2" />
<line x1="683.6" y1="289.8" x2="683.6" y2="296.8" stroke="#e8e8a0" stroke-width="1.3"/>
<line x1="681.2" y1="293.2" x2="686.0" y2="293.2" stroke="#d060c0" stroke-width="1.2"/>
<circle cx="683.6" cy="296.8" r="2.8" fill="#ffee00"/>
<rect x="680.2" y="314.8" width="6.8" height="17.2" fill="none" stroke="#ffffff" stroke-width="2" />
<line x1="683.6" y1="316.8" x2="683.6" y2="323.4" stroke="#e8e8a0" stroke-width="1.3"/>
<line x1="681.2" y1="319.9" x2="686.0" y2="319.9" stroke="#d060c0" stroke-width="1.2"/>
<circle cx="683.6" cy="323.4" r="2.8" fill="#ffee00"/>
<rect x="978.5" y="199.2" width="5.5" height="18.5" fill="none" stroke="#ffffff" stroke-width="2" />
<line x1="981.2" y1="201.2" x2="981.2" y2="208.5" stroke="#e8e8a0" stroke-width="1.3"/>
<line x1="979.5" y1="205.0" x2="983.0" y2="205.0" stroke="#d060c0" stroke-width="1.2"/>
<circle cx="981.2" cy="208.5" r="2.8" fill="#ffee00"/>
<rect x="412.0" y="365.7" width="5.7" height="18.8" fill="none" stroke="#ffffff" stroke-width="2" />
<line x1="414.9" y1="367.7" x2="414.9" y2="375.1" stroke="#e8e8a0" stroke-width="1.3"/>
<line x1="413.0" y1="371.6" x2="416.7" y2="371.6" stroke="#d060c0" stroke-width="1.2"/>
<circle cx="414.9" cy="375.1" r="2.8" fill="#ffee00"/>
<rect x="427.5" y="365.7" width="6.8" height="18.8" fill="none" stroke="#ffffff" stroke-width="2" />
<line x1="430.9" y1="367.7" x2="430.9" y2="375.1" stroke="#e8e8a0" stroke-width="1.3"/>
<line x1="428.5" y1="371.6" x2="433.3" y2="371.6" stroke="#d060c0" stroke-width="1.2"/>
<circle cx="430.9" cy="375.1" r="2.8" fill="#ffee00"/>
<rect x="421.8" y="526.0" width="5.2" height="16.8" fill="none" stroke="#ffffff" stroke-width="2" />
<line x1="424.4" y1="528.0" x2="424.4" y2="534.4" stroke="#e8e8a0" stroke-width="1.3"/>
<line x1="422.8" y1="530.9" x2="426.0" y2="530.9" stroke="#d060c0" stroke-width="1.2"/>
<circle cx="424.4" cy="534.4" r="2.8" fill="#ffee00"/>
<rect x="437.2" y="526.0" width="5.5" height="16.8" fill="none" stroke="#ffffff" stroke-width="2" />
<line x1="440.0" y1="528.0" x2="440.0" y2="534.4" stroke="#e8e8a0" stroke-width="1.3"/>
<line x1="438.2" y1="530.9" x2="441.8" y2="530.9" stroke="#d060c0" stroke-width="1.2"/>
<circle cx="440.0" cy="534.4" r="2.8" fill="#ffee00"/>
<rect x="465.2" y="529.8" width="5.5" height="17.2" fill="none" stroke="#ffffff" stroke-width="2" />
<line x1="468.0" y1="531.8" x2="468.0" y2="538.4" stroke="#e8e8a0" stroke-width="1.3"/>
<line x1="466.2" y1="534.9" x2="469.8" y2="534.9" stroke="#d060c0" stroke-width="1.2"/>
<circle cx="468.0" cy="538.4" r="2.8" fill="#ffee00"/>
<rect x="483.5" y="529.8" width="6.8" height="17.2" fill="none" stroke="#ffffff" stroke-width="2" />
<line x1="486.9" y1="531.8" x2="486.9" y2="538.4" stroke="#e8e8a0" stroke-width="1.3"/>
<line x1="484.5" y1="534.9" x2="489.2" y2="534.9" stroke="#d060c0" stroke-width="1.2"/>
<circle cx="486.9" cy="538.4" r="2.8" fill="#ffee00"/>
<rect x="476.8" y="591.0" width="5.2" height="17.5" fill="none" stroke="#ffffff" stroke-width="2" />
<line x1="479.4" y1="593.0" x2="479.4" y2="599.8" stroke="#e8e8a0" stroke-width="1.3"/>
<line x1="477.8" y1="596.2" x2="481.0" y2="596.2" stroke="#d060c0" stroke-width="1.2"/>
<circle cx="479.4" cy="599.8" r="2.8" fill="#ffee00"/>
<rect x="461.0" y="644.3" width="5.3" height="18.0" fill="none" stroke="#ffffff" stroke-width="2" />
<line x1="463.6" y1="646.3" x2="463.6" y2="653.3" stroke="#e8e8a0" stroke-width="1.3"/>
<line x1="462.0" y1="649.8" x2="465.3" y2="649.8" stroke="#d060c0" stroke-width="1.2"/>
<circle cx="463.6" cy="653.3" r="2.8" fill="#ffee00"/>
<rect x="476.1" y="644.3" width="7.3" height="18.0" fill="none" stroke="#ffffff" stroke-width="2" />
<line x1="479.8" y1="646.3" x2="479.8" y2="653.3" stroke="#e8e8a0" stroke-width="1.3"/>
<line x1="477.1" y1="649.8" x2="482.4" y2="649.8" stroke="#d060c0" stroke-width="1.2"/>
<circle cx="479.8" cy="653.3" r="2.8" fill="#ffee00"/>
<rect x="782.8" y="313.0" width="10.5" height="32.2" fill="none" stroke="#ffffff" stroke-width="2" />
<line x1="783.8" y1="322.6" x2="792.2" y2="322.6" stroke="#e040e8" stroke-width="2"/>
<line x1="783.8" y1="333.9" x2="792.2" y2="333.9" stroke="#e040e8" stroke-width="2"/>
<line x1="788.0" y1="322.6" x2="788.0" y2="327.8" stroke="#ffee00" stroke-width="1.5"/>
<path d="M784.5 327.8L788.0 324.3L791.5 327.8L788.0 331.3Z" fill="#ffee00"/>
<rect x="843.0" y="313.0" width="10.5" height="32.2" fill="none" stroke="#ffffff" stroke-width="2" />
<line x1="844.0" y1="322.6" x2="852.5" y2="322.6" stroke="#e040e8" stroke-width="2"/>
<line x1="844.0" y1="333.9" x2="852.5" y2="333.9" stroke="#e040e8" stroke-width="2"/>
<line x1="848.2" y1="322.6" x2="848.2" y2="327.8" stroke="#ffee00" stroke-width="1.5"/>
<path d="M844.8 327.8L848.2 324.3L851.8 327.8L848.2 331.3Z" fill="#ffee00"/>
<rect x="969.2" y="227.8" width="9.8" height="31.8" fill="none" stroke="#ffffff" stroke-width="2" />
<line x1="970.2" y1="237.2" x2="978.0" y2="237.2" stroke="#e040e8" stroke-width="2"/>
<line x1="970.2" y1="248.3" x2="978.0" y2="248.3" stroke="#e040e8" stroke-width="2"/>
<line x1="974.1" y1="237.2" x2="974.1" y2="242.3" stroke="#ffee00" stroke-width="1.5"/>
<path d="M970.6 242.3L974.1 238.8L977.6 242.3L974.1 245.8Z" fill="#ffee00"/>
<rect x="969.2" y="287.8" width="9.8" height="31.2" fill="none" stroke="#ffffff" stroke-width="2" />
<line x1="970.2" y1="297.1" x2="978.0" y2="297.1" stroke="#e040e8" stroke-width="2"/>
<line x1="970.2" y1="308.0" x2="978.0" y2="308.0" stroke="#e040e8" stroke-width="2"/>
<line x1="974.1" y1="297.1" x2="974.1" y2="302.0" stroke="#ffee00" stroke-width="1.5"/>
<path d="M970.6 302.0L974.1 298.5L977.6 302.0L974.1 305.5Z" fill="#ffee00"/>
<rect x="969.2" y="329.2" width="9.8" height="31.5" fill="none" stroke="#ffffff" stroke-width="2" />
<line x1="970.2" y1="338.6" x2="978.0" y2="338.6" stroke="#e040e8" stroke-width="2"/>
<line x1="970.2" y1="349.7" x2="978.0" y2="349.7" stroke="#e040e8" stroke-width="2"/>
<line x1="974.1" y1="338.6" x2="974.1" y2="343.7" stroke="#ffee00" stroke-width="1.5"/>
<path d="M970.6 343.7L974.1 340.2L977.6 343.7L974.1 347.2Z" fill="#ffee00"/>
<rect x="390.6" y="367.1" width="10.0" height="32.6" fill="none" stroke="#ffffff" stroke-width="2" />
<line x1="391.6" y1="376.8" x2="399.6" y2="376.8" stroke="#e040e8" stroke-width="2"/>
<line x1="391.6" y1="388.2" x2="399.6" y2="388.2" stroke="#e040e8" stroke-width="2"/>
<line x1="395.6" y1="376.8" x2="395.6" y2="382.0" stroke="#ffee00" stroke-width="1.5"/>
<path d="M392.1 382.0L395.6 378.5L399.1 382.0L395.6 385.5Z" fill="#ffee00"/>
<rect x="590.5" y="367.1" width="10.4" height="32.6" fill="none" stroke="#ffffff" stroke-width="2" />
<line x1="591.5" y1="376.8" x2="599.9" y2="376.8" stroke="#e040e8" stroke-width="2"/>
<line x1="591.5" y1="388.2" x2="599.9" y2="388.2" stroke="#e040e8" stroke-width="2"/>
<line x1="595.7" y1="376.8" x2="595.7" y2="382.0" stroke="#ffee00" stroke-width="1.5"/>
<path d="M592.2 382.0L595.7 378.5L599.2 382.0L595.7 385.5Z" fill="#ffee00"/>
<rect x="474.6" y="440.6" width="10.6" height="31.0" fill="none" stroke="#ffffff" stroke-width="2" />
<line x1="475.6" y1="449.8" x2="484.2" y2="449.8" stroke="#e040e8" stroke-width="2"/>
<line x1="475.6" y1="460.7" x2="484.2" y2="460.7" stroke="#e040e8" stroke-width="2"/>
<line x1="479.9" y1="449.8" x2="479.9" y2="454.8" stroke="#ffee00" stroke-width="1.5"/>
<path d="M476.4 454.8L479.9 451.3L483.4 454.8L479.9 458.3Z" fill="#ffee00"/>
<rect x="497.1" y="440.6" width="10.7" height="31.0" fill="none" stroke="#ffffff" stroke-width="2" />
<line x1="498.1" y1="449.8" x2="506.8" y2="449.8" stroke="#e040e8" stroke-width="2"/>
<line x1="498.1" y1="460.7" x2="506.8" y2="460.7" stroke="#e040e8" stroke-width="2"/>
<line x1="502.5" y1="449.8" x2="502.5" y2="454.8" stroke="#ffee00" stroke-width="1.5"/>
<path d="M499.0 454.8L502.5 451.3L506.0 454.8L502.5 458.3Z" fill="#ffee00"/>
<rect x="520.9" y="440.6" width="9.6" height="31.0" fill="none" stroke="#ffffff" stroke-width="2" />
<line x1="521.9" y1="449.8" x2="529.5" y2="449.8" stroke="#e040e8" stroke-width="2"/>
<line x1="521.9" y1="460.7" x2="529.5" y2="460.7" stroke="#e040e8" stroke-width="2"/>
<line x1="525.7" y1="449.8" x2="525.7" y2="454.8" stroke="#ffee00" stroke-width="1.5"/>
<path d="M522.2 454.8L525.7 451.3L529.2 454.8L525.7 458.3Z" fill="#ffee00"/>
<rect x="543.6" y="440.6" width="9.9" height="31.0" fill="none" stroke="#ffffff" stroke-width="2" />
<line x1="544.6" y1="449.8" x2="552.5" y2="449.8" stroke="#e040e8" stroke-width="2"/>
<line x1="544.6" y1="460.7" x2="552.5" y2="460.7" stroke="#e040e8" stroke-width="2"/>
<line x1="548.5" y1="449.8" x2="548.5" y2="454.8" stroke="#ffee00" stroke-width="1.5"/>
<path d="M545.0 454.8L548.5 451.3L552.0 454.8L548.5 458.3Z" fill="#ffee00"/>
<rect x="589.5" y="440.6" width="9.7" height="31.0" fill="none" stroke="#ffffff" stroke-width="2" />
<line x1="590.5" y1="449.8" x2="598.2" y2="449.8" stroke="#e040e8" stroke-width="2"/>
<line x1="590.5" y1="460.7" x2="598.2" y2="460.7" stroke="#e040e8" stroke-width="2"/>
<line x1="594.4" y1="449.8" x2="594.4" y2="454.8" stroke="#ffee00" stroke-width="1.5"/>
<path d="M590.9 454.8L594.4 451.3L597.9 454.8L594.4 458.3Z" fill="#ffee00"/>
<rect x="387.8" y="511.0" width="12.5" height="33.0" fill="none" stroke="#ffffff" stroke-width="2" />
<line x1="388.8" y1="520.9" x2="399.2" y2="520.9" stroke="#e040e8" stroke-width="2"/>
<line x1="388.8" y1="532.4" x2="399.2" y2="532.4" stroke="#e040e8" stroke-width="2"/>
<line x1="394.0" y1="520.9" x2="394.0" y2="526.1" stroke="#ffee00" stroke-width="1.5"/>
<path d="M390.5 526.1L394.0 522.6L397.5 526.1L394.0 529.6Z" fill="#ffee00"/>
<rect x="665.2" y="641.5" width="8.8" height="32.0" fill="none" stroke="#ffffff" stroke-width="2" />
<line x1="666.2" y1="651.0" x2="673.0" y2="651.0" stroke="#e040e8" stroke-width="2"/>
<line x1="666.2" y1="662.3" x2="673.0" y2="662.3" stroke="#e040e8" stroke-width="2"/>
<line x1="669.6" y1="651.0" x2="669.6" y2="656.1" stroke="#ffee00" stroke-width="1.5"/>
<path d="M666.1 656.1L669.6 652.6L673.1 656.1L669.6 659.6Z" fill="#ffee00"/>
<rect x="409.4" y="643.2" width="9.6" height="31.4" fill="none" stroke="#ffffff" stroke-width="2" />
<line x1="410.4" y1="652.6" x2="418.0" y2="652.6" stroke="#e040e8" stroke-width="2"/>
<line x1="410.4" y1="663.6" x2="418.0" y2="663.6" stroke="#e040e8" stroke-width="2"/>
<line x1="414.2" y1="652.6" x2="414.2" y2="657.6" stroke="#ffee00" stroke-width="1.5"/>
<path d="M410.7 657.6L414.2 654.1L417.7 657.6L414.2 661.1Z" fill="#ffee00"/>
<rect x="436.6" y="708.8" width="10.2" height="31.3" fill="none" stroke="#ffffff" stroke-width="2" />
<line x1="437.6" y1="718.1" x2="445.8" y2="718.1" stroke="#e040e8" stroke-width="2"/>
<line x1="437.6" y1="729.1" x2="445.8" y2="729.1" stroke="#e040e8" stroke-width="2"/>
<line x1="441.7" y1="718.1" x2="441.7" y2="723.1" stroke="#ffee00" stroke-width="1.5"/>
<path d="M438.2 723.1L441.7 719.6L445.2 723.1L441.7 726.6Z" fill="#ffee00"/>
<rect x="846.0" y="514.6" width="10.7" height="32.4" fill="none" stroke="#ffffff" stroke-width="2" />
<line x1="847.0" y1="524.3" x2="855.7" y2="524.3" stroke="#e040e8" stroke-width="2"/>
<line x1="847.0" y1="535.6" x2="855.7" y2="535.6" stroke="#e040e8" stroke-width="2"/>
<line x1="851.4" y1="524.3" x2="851.4" y2="529.4" stroke="#ffee00" stroke-width="1.5"/>
<path d="M847.9 529.4L851.4 525.9L854.9 529.4L851.4 532.9Z" fill="#ffee00"/>
<rect x="846.0" y="558.0" width="10.7" height="31.5" fill="none" stroke="#ffffff" stroke-width="2" />
<line x1="847.0" y1="567.4" x2="855.7" y2="567.4" stroke="#e040e8" stroke-width="2"/>
<line x1="847.0" y1="578.4" x2="855.7" y2="578.4" stroke="#e040e8" stroke-width="2"/>
<line x1="851.4" y1="567.4" x2="851.4" y2="572.4" stroke="#ffee00" stroke-width="1.5"/>
<path d="M847.9 572.4L851.4 568.9L854.9 572.4L851.4 575.9Z" fill="#ffee00"/>
<rect x="846.0" y="601.3" width="10.7" height="31.0" fill="none" stroke="#ffffff" stroke-width="2" />
<line x1="847.0" y1="610.5" x2="855.7" y2="610.5" stroke="#e040e8" stroke-width="2"/>
<line x1="847.0" y1="621.4" x2="855.7" y2="621.4" stroke="#e040e8" stroke-width="2"/>
<line x1="851.4" y1="610.5" x2="851.4" y2="615.5" stroke="#ffee00" stroke-width="1.5"/>
<path d="M847.9 615.5L851.4 612.0L854.9 615.5L851.4 619.0Z" fill="#ffee00"/>
<rect x="846.0" y="661.4" width="10.7" height="32.4" fill="none" stroke="#ffffff" stroke-width="2" />
<line x1="847.0" y1="671.1" x2="855.7" y2="671.1" stroke="#e040e8" stroke-width="2"/>
<line x1="847.0" y1="682.4" x2="855.7" y2="682.4" stroke="#e040e8" stroke-width="2"/>
<line x1="851.4" y1="671.1" x2="851.4" y2="676.2" stroke="#ffee00" stroke-width="1.5"/>
<path d="M847.9 676.2L851.4 672.7L854.9 676.2L851.4 679.7Z" fill="#ffee00"/>
<rect x="803.5" y="640.3" width="9.9" height="31.3" fill="none" stroke="#ffffff" stroke-width="2" />
<line x1="804.5" y1="649.6" x2="812.4" y2="649.6" stroke="#e040e8" stroke-width="2"/>
<line x1="804.5" y1="660.6" x2="812.4" y2="660.6" stroke="#e040e8" stroke-width="2"/>
<line x1="808.5" y1="649.6" x2="808.5" y2="654.6" stroke="#ffee00" stroke-width="1.5"/>
<path d="M805.0 654.6L808.5 651.1L812.0 654.6L808.5 658.1Z" fill="#ffee00"/>
<rect x="469.3" y="370.0" width="32.1" height="10.2" fill="none" stroke="#ffffff" stroke-width="2" />
<line x1="478.9" y1="371.0" x2="478.9" y2="379.2" stroke="#e040e8" stroke-width="2"/>
<line x1="490.8" y1="371.0" x2="490.8" y2="379.2" stroke="#e040e8" stroke-width="2"/>
<line x1="478.9" y1="375.1" x2="485.0" y2="375.1" stroke="#ffee00" stroke-width="1.5"/>
<path d="M481.5 375.1L485.0 371.6L488.5 375.1L485.0 378.6Z" fill="#ffee00"/>
<rect x="512.7" y="370.0" width="33.4" height="10.2" fill="none" stroke="#ffffff" stroke-width="2" />
<line x1="522.7" y1="371.0" x2="522.7" y2="379.2" stroke="#e040e8" stroke-width="2"/>
<line x1="535.1" y1="371.0" x2="535.1" y2="379.2" stroke="#e040e8" stroke-width="2"/>
<line x1="522.7" y1="375.1" x2="529.0" y2="375.1" stroke="#ffee00" stroke-width="1.5"/>
<path d="M525.5 375.1L529.0 371.6L532.5 375.1L529.0 378.6Z" fill="#ffee00"/>
<rect x="469.3" y="392.0" width="32.1" height="10.2" fill="none" stroke="#ffffff" stroke-width="2" />
<line x1="478.9" y1="393.0" x2="478.9" y2="401.2" stroke="#e040e8" stroke-width="2"/>
<line x1="490.8" y1="393.0" x2="490.8" y2="401.2" stroke="#e040e8" stroke-width="2"/>
<line x1="478.9" y1="397.1" x2="485.0" y2="397.1" stroke="#ffee00" stroke-width="1.5"/>
<path d="M481.5 397.1L485.0 393.6L488.5 397.1L485.0 400.6Z" fill="#ffee00"/>
<rect x="512.7" y="392.0" width="33.4" height="10.2" fill="none" stroke="#ffffff" stroke-width="2" />
<line x1="522.7" y1="393.0" x2="522.7" y2="401.2" stroke="#e040e8" stroke-width="2"/>
<line x1="535.1" y1="393.0" x2="535.1" y2="401.2" stroke="#e040e8" stroke-width="2"/>
<line x1="522.7" y1="397.1" x2="529.0" y2="397.1" stroke="#ffee00" stroke-width="1.5"/>
<path d="M525.5 397.1L529.0 393.6L532.5 397.1L529.0 400.6Z" fill="#ffee00"/>
<rect x="440.2" y="417.8" width="33.4" height="8.7" fill="none" stroke="#ffffff" stroke-width="2" />
<line x1="450.2" y1="418.8" x2="450.2" y2="425.5" stroke="#e040e8" stroke-width="2"/>
<line x1="462.6" y1="418.8" x2="462.6" y2="425.5" stroke="#e040e8" stroke-width="2"/>
<line x1="450.2" y1="422.1" x2="456.5" y2="422.1" stroke="#ffee00" stroke-width="1.5"/>
<path d="M453.0 422.1L456.5 418.6L460.0 422.1L456.5 425.6Z" fill="#ffee00"/>
<rect x="483.9" y="417.8" width="32.1" height="8.7" fill="none" stroke="#ffffff" stroke-width="2" />
<line x1="493.5" y1="418.8" x2="493.5" y2="425.5" stroke="#e040e8" stroke-width="2"/>
<line x1="505.4" y1="418.8" x2="505.4" y2="425.5" stroke="#e040e8" stroke-width="2"/>
<line x1="493.5" y1="422.1" x2="499.6" y2="422.1" stroke="#ffee00" stroke-width="1.5"/>
<path d="M496.1 422.1L499.6 418.6L503.1 422.1L499.6 425.6Z" fill="#ffee00"/>
<rect x="526.3" y="417.8" width="33.0" height="8.7" fill="none" stroke="#ffffff" stroke-width="2" />
<line x1="536.1" y1="418.8" x2="536.1" y2="425.5" stroke="#e040e8" stroke-width="2"/>
<line x1="548.4" y1="418.8" x2="548.4" y2="425.5" stroke="#e040e8" stroke-width="2"/>
<line x1="536.1" y1="422.1" x2="542.4" y2="422.1" stroke="#ffee00" stroke-width="1.5"/>
<path d="M538.9 422.1L542.4 418.6L545.9 422.1L542.4 425.6Z" fill="#ffee00"/>
<rect x="569.5" y="417.8" width="33.5" height="8.7" fill="none" stroke="#ffffff" stroke-width="2" />
<line x1="579.5" y1="418.8" x2="579.5" y2="425.5" stroke="#e040e8" stroke-width="2"/>
<line x1="591.9" y1="418.8" x2="591.9" y2="425.5" stroke="#e040e8" stroke-width="2"/>
<line x1="579.5" y1="422.1" x2="585.9" y2="422.1" stroke="#ffee00" stroke-width="1.5"/>
<path d="M582.4 422.1L585.9 418.6L589.4 422.1L585.9 425.6Z" fill="#ffee00"/>
<rect x="472.6" y="484.3" width="33.0" height="10.1" fill="none" stroke="#ffffff" stroke-width="2" />
<line x1="482.5" y1="485.3" x2="482.5" y2="493.4" stroke="#e040e8" stroke-width="2"/>
<line x1="494.7" y1="485.3" x2="494.7" y2="493.4" stroke="#e040e8" stroke-width="2"/>
<line x1="482.5" y1="489.4" x2="488.8" y2="489.4" stroke="#ffee00" stroke-width="1.5"/>
<path d="M485.2 489.4L488.8 485.9L492.2 489.4L488.8 492.9Z" fill="#ffee00"/>
<rect x="566.5" y="484.3" width="33.6" height="10.1" fill="none" stroke="#ffffff" stroke-width="2" />
<line x1="576.5" y1="485.3" x2="576.5" y2="493.4" stroke="#e040e8" stroke-width="2"/>
<line x1="589.0" y1="485.3" x2="589.0" y2="493.4" stroke="#e040e8" stroke-width="2"/>
<line x1="576.5" y1="489.4" x2="582.9" y2="489.4" stroke="#ffee00" stroke-width="1.5"/>
<path d="M579.4 489.4L582.9 485.9L586.4 489.4L582.9 492.9Z" fill="#ffee00"/>
<rect x="343.0" y="558.0" width="32.2" height="9.8" fill="none" stroke="#ffffff" stroke-width="2" />
<line x1="352.6" y1="559.0" x2="352.6" y2="566.8" stroke="#e040e8" stroke-width="2"/>
<line x1="364.6" y1="559.0" x2="364.6" y2="566.8" stroke="#e040e8" stroke-width="2"/>
<line x1="352.6" y1="562.9" x2="358.8" y2="562.9" stroke="#ffee00" stroke-width="1.5"/>
<path d="M355.3 562.9L358.8 559.4L362.3 562.9L358.8 566.4Z" fill="#ffee00"/>
<rect x="343.0" y="582.2" width="32.2" height="9.2" fill="none" stroke="#ffffff" stroke-width="2" />
<line x1="352.6" y1="583.2" x2="352.6" y2="590.5" stroke="#e040e8" stroke-width="2"/>
<line x1="364.6" y1="583.2" x2="364.6" y2="590.5" stroke="#e040e8" stroke-width="2"/>
<line x1="352.6" y1="586.9" x2="358.8" y2="586.9" stroke="#ffee00" stroke-width="1.5"/>
<path d="M355.3 586.9L358.8 583.4L362.3 586.9L358.8 590.4Z" fill="#ffee00"/>
<rect x="657.8" y="563.0" width="32.0" height="9.2" fill="none" stroke="#ffffff" stroke-width="2" />
<line x1="667.3" y1="564.0" x2="667.3" y2="571.2" stroke="#e040e8" stroke-width="2"/>
<line x1="679.2" y1="564.0" x2="679.2" y2="571.2" stroke="#e040e8" stroke-width="2"/>
<line x1="667.3" y1="567.6" x2="673.4" y2="567.6" stroke="#ffee00" stroke-width="1.5"/>
<path d="M669.9 567.6L673.4 564.1L676.9 567.6L673.4 571.1Z" fill="#ffee00"/>
<rect x="459.2" y="682.8" width="33.1" height="9.5" fill="none" stroke="#ffffff" stroke-width="2" />
<line x1="469.1" y1="683.8" x2="469.1" y2="691.3" stroke="#e040e8" stroke-width="2"/>
<line x1="481.4" y1="683.8" x2="481.4" y2="691.3" stroke="#e040e8" stroke-width="2"/>
<line x1="469.1" y1="687.5" x2="475.4" y2="687.5" stroke="#ffee00" stroke-width="1.5"/>
<path d="M471.9 687.5L475.4 684.0L478.9 687.5L475.4 691.0Z" fill="#ffee00"/>
<rect x="459.2" y="705.0" width="33.1" height="9.6" fill="none" stroke="#ffffff" stroke-width="2" />
<line x1="469.1" y1="706.0" x2="469.1" y2="713.6" stroke="#e040e8" stroke-width="2"/>
<line x1="481.4" y1="706.0" x2="481.4" y2="713.6" stroke="#e040e8" stroke-width="2"/>
<line x1="469.1" y1="709.8" x2="475.4" y2="709.8" stroke="#ffee00" stroke-width="1.5"/>
<path d="M471.9 709.8L475.4 706.3L478.9 709.8L475.4 713.3Z" fill="#ffee00"/>
<rect x="459.2" y="728.8" width="33.1" height="9.1" fill="none" stroke="#ffffff" stroke-width="2" />
<line x1="469.1" y1="729.8" x2="469.1" y2="736.9" stroke="#e040e8" stroke-width="2"/>
<line x1="481.4" y1="729.8" x2="481.4" y2="736.9" stroke="#e040e8" stroke-width="2"/>
<line x1="469.1" y1="733.3" x2="475.4" y2="733.3" stroke="#ffee00" stroke-width="1.5"/>
<path d="M471.9 733.3L475.4 729.8L478.9 733.3L475.4 736.8Z" fill="#ffee00"/>
<rect x="913.5" y="104.0" width="32.5" height="12.2" fill="none" stroke="#ffffff" stroke-width="2" />
<path d="M927.0 111.0L930.0 108.0L933.0 111.0L930.0 114.0Z" fill="#ffee00"/>
<line x1="922.0" y1="108.0" x2="922.0" y2="115.0" stroke="#e040e8" stroke-width="1.5"/>
<line x1="938.0" y1="108.0" x2="938.0" y2="115.0" stroke="#e040e8" stroke-width="1.5"/>
<rect x="962.2" y="104.0" width="18.8" height="11.0" fill="none" stroke="#ffffff" stroke-width="2" />
<circle cx="971.6" cy="111" r="2.8" fill="#ffee00"/>
<rect x="648.8" y="682.0" width="18.0" height="8.0" fill="none" stroke="#ffffff" stroke-width="2" />
<rect x="352.8" y="498.0" width="22.5" height="47.2" fill="none" stroke="#ffffff" stroke-width="2" />
<line x1="353.8" y1="510.5" x2="374.2" y2="510.5" stroke="#e040e8" stroke-width="2"/>
<line x1="353.8" y1="532.5" x2="374.2" y2="532.5" stroke="#e040e8" stroke-width="2"/>
<line x1="364.0" y1="513.2" x2="364.0" y2="521.2" stroke="#ffee00" stroke-width="1.5"/>
<path d="M360.5 521.2L364.0 517.8L367.5 521.2L364.0 524.8Z" fill="#ffee00"/>
<rect x="519.0" y="489.8" width="31.2" height="66.2" fill="none" stroke="#ffffff" stroke-width="2" />
<line x1="520.0" y1="513.2" x2="549.2" y2="513.2" stroke="#e040e8" stroke-width="2"/>
<line x1="520.0" y1="532.5" x2="549.2" y2="532.5" stroke="#e040e8" stroke-width="2"/>
<line x1="534.6" y1="514.5" x2="534.6" y2="522.5" stroke="#ffee00" stroke-width="1.5"/>
<path d="M531.1 522.5L534.6 519.0L538.1 522.5L534.6 526.0Z" fill="#ffee00"/>
<rect x="566.5" y="440.6" width="9.7" height="10.9" fill="none" stroke="#e040e8" stroke-width="2"/>
<rect x="566.5" y="460.7" width="9.7" height="10.9" fill="none" stroke="#e040e8" stroke-width="2"/>
<path d="M568.1 456.1L571.4 452.9L574.6 456.1L571.4 459.3Z" fill="#ffffff"/>
<rect x="566.5" y="506.5" width="6.5" height="6" rx="1.5" fill="none" stroke="#e040e8" stroke-width="2"/>
<rect x="578" y="506.5" width="6.5" height="6" rx="1.5" fill="none" stroke="#e040e8" stroke-width="2"/>
<path d="M572.3 509.5L575.5 506.3L578.7 509.5L575.5 512.7Z" fill="#ffffff"/>
<path d="M425.4 439.0V451.5A3.1 3.1 0 0 0 431.6 451.5V439.0" fill="none" stroke="#e040e8" stroke-width="2"/>
<path d="M425.4 494.0V482.4A3.1 3.1 0 0 1 431.6 482.4V494.0" fill="none" stroke="#e040e8" stroke-width="2"/>
<path d="M436.1 439.0V451.5A3.1 3.1 0 0 0 442.3 451.5V439.0" fill="none" stroke="#e040e8" stroke-width="2"/>
<path d="M436.1 494.0V482.4A3.1 3.1 0 0 1 442.3 482.4V494.0" fill="none" stroke="#e040e8" stroke-width="2"/>
<path d="M447.1 439.0V451.5A3.1 3.1 0 0 0 453.3 451.5V439.0" fill="none" stroke="#e040e8" stroke-width="2"/>
<path d="M447.1 494.0V482.4A3.1 3.1 0 0 1 453.3 482.4V494.0" fill="none" stroke="#e040e8" stroke-width="2"/>
<path d="M416.5 458.5H429.1A3.2 3.2 0 0 1 429.1 465.0H416.5" fill="none" stroke="#e040e8" stroke-width="2"/>
<path d="M462.8 458.5H447.9A3.2 3.2 0 0 0 447.9 465.0H462.8" fill="none" stroke="#e040e8" stroke-width="2"/>
<path d="M416.5 468.2H429.1A3.2 3.2 0 0 1 429.1 474.7H416.5" fill="none" stroke="#e040e8" stroke-width="2"/>
<path d="M462.8 468.2H447.9A3.2 3.2 0 0 0 447.9 474.7H462.8" fill="none" stroke="#e040e8" stroke-width="2"/>
<rect x="416.5" y="439.1" width="46.3" height="54.7" fill="none" stroke="#ffffff" stroke-width="2" />
<line x1="439.2" y1="467.0" x2="439.2" y2="474.7" stroke="#ffee00" stroke-width="1.5"/>
<path d="M435.7 466.9L439.2 463.4L442.7 466.9L439.2 470.4Z" fill="#ffee00"/>
<path d="M636.7 481.6V493.6A2.5 2.5 0 0 0 641.7 493.6V481.6" fill="none" stroke="#e040e8" stroke-width="2"/>
<path d="M636.7 525.1V513.1A2.5 2.5 0 0 1 641.7 513.1V525.1" fill="none" stroke="#e040e8" stroke-width="2"/>
<path d="M646.1 481.6V495.6A3.3 3.3 0 0 0 652.8 495.6V481.6" fill="none" stroke="#e040e8" stroke-width="2"/>
<path d="M646.1 525.1V514.0A3.3 3.3 0 0 1 652.8 514.0V525.1" fill="none" stroke="#e040e8" stroke-width="2"/>
<path d="M616.6 489.4H628.0A3.1 3.1 0 0 1 628.0 495.6H616.6" fill="none" stroke="#e040e8" stroke-width="2"/>
<path d="M672.3 489.4H659.8A3.1 3.1 0 0 0 659.8 495.6H672.3" fill="none" stroke="#e040e8" stroke-width="2"/>
<path d="M616.6 500.6H628.4A2.8 2.8 0 0 1 628.4 506.1H616.6" fill="none" stroke="#e040e8" stroke-width="2"/>
<path d="M672.3 500.6H659.5A2.8 2.8 0 0 0 659.5 506.1H672.3" fill="none" stroke="#e040e8" stroke-width="2"/>
<path d="M616.6 511.1H628.0A3.1 3.1 0 0 1 628.0 517.2H616.6" fill="none" stroke="#e040e8" stroke-width="2"/>
<path d="M672.3 511.1H659.8A3.1 3.1 0 0 0 659.8 517.2H672.3" fill="none" stroke="#e040e8" stroke-width="2"/>
<rect x="616.6" y="481.6" width="55.7" height="43.5" fill="none" stroke="#ffffff" stroke-width="2" />
<line x1="636.7" y1="503.3" x2="643.9" y2="503.3" stroke="#ffee00" stroke-width="1.3"/>
<path d="M640.4 503.3L643.9 499.8L647.4 503.3L643.9 506.8Z" fill="#ffee00"/>
<path d="M587.2 536.0V547.2A2.8 2.8 0 0 0 592.8 547.2V536.0" fill="none" stroke="#e040e8" stroke-width="2"/>
<path d="M597.2 536.0V547.2A2.8 2.8 0 0 0 602.8 547.2V536.0" fill="none" stroke="#e040e8" stroke-width="2"/>
<path d="M609.4 536.0V547.2A2.8 2.8 0 0 0 615.0 547.2V536.0" fill="none" stroke="#e040e8" stroke-width="2"/>
<path d="M619.4 536.0V549.9A3.4 3.4 0 0 0 626.1 549.9V536.0" fill="none" stroke="#e040e8" stroke-width="2"/>
<path d="M587.2 588.4V578.0A3.0 3.0 0 0 1 593.3 578.0V588.4" fill="none" stroke="#e040e8" stroke-width="2"/>
<path d="M597.2 588.4V578.3A3.3 3.3 0 0 1 603.9 578.3V588.4" fill="none" stroke="#e040e8" stroke-width="2"/>
<path d="M608.9 588.4V578.0A3.1 3.1 0 0 1 615.0 578.0V588.4" fill="none" stroke="#e040e8" stroke-width="2"/>
<path d="M619.4 588.4V578.4A3.4 3.4 0 0 1 626.1 578.4V588.4" fill="none" stroke="#e040e8" stroke-width="2"/>
<path d="M567.9 543.9H578.9A3.4 3.4 0 0 1 578.9 550.6H567.9" fill="none" stroke="#e040e8" stroke-width="2"/>
<path d="M645.4 543.9H633.4A3.4 3.4 0 0 0 633.4 550.6H645.4" fill="none" stroke="#e040e8" stroke-width="2"/>
<path d="M567.9 554.4H579.1A3.1 3.1 0 0 1 579.1 560.6H567.9" fill="none" stroke="#e040e8" stroke-width="2"/>
<path d="M645.4 554.4H633.1A3.1 3.1 0 0 0 633.1 560.6H645.4" fill="none" stroke="#e040e8" stroke-width="2"/>
<path d="M567.9 564.4H579.1A3.1 3.1 0 0 1 579.1 570.6H567.9" fill="none" stroke="#e040e8" stroke-width="2"/>
<path d="M645.4 564.4H633.1A3.1 3.1 0 0 0 633.1 570.6H645.4" fill="none" stroke="#e040e8" stroke-width="2"/>
<path d="M567.9 575.0H579.2A3.1 3.1 0 0 1 579.2 581.1H567.9" fill="none" stroke="#e040e8" stroke-width="2"/>
<path d="M645.4 575.0H633.0A3.1 3.1 0 0 0 633.0 581.1H645.4" fill="none" stroke="#e040e8" stroke-width="2"/>
<rect x="567.9" y="536.0" width="77.5" height="52.4" fill="none" stroke="#ffffff" stroke-width="2" />
<line x1="598.0" y1="562.8" x2="606.7" y2="562.8" stroke="#ffee00" stroke-width="1.3"/>
<path d="M603.2 562.8L606.7 559.3L610.2 562.8L606.7 566.3Z" fill="#ffee00"/>
<rect x="409.3" y="558" width="6.4" height="12.5" rx="2" fill="none" stroke="#e040e8" stroke-width="2"/>
<rect x="409.3" y="618.75" width="6.4" height="12.5" rx="2" fill="none" stroke="#e040e8" stroke-width="2"/>
<rect x="422.6" y="558" width="6.4" height="12.5" rx="2" fill="none" stroke="#e040e8" stroke-width="2"/>
<rect x="422.6" y="618.75" width="6.4" height="12.5" rx="2" fill="none" stroke="#e040e8" stroke-width="2"/>
<rect x="436.3" y="558" width="6.4" height="12.5" rx="2" fill="none" stroke="#e040e8" stroke-width="2"/>
<rect x="436.3" y="618.75" width="6.4" height="12.5" rx="2" fill="none" stroke="#e040e8" stroke-width="2"/>
<rect x="387.5" y="578.0" width="13.75" height="6.4" rx="2" fill="none" stroke="#e040e8" stroke-width="2"/>
<rect x="450.5" y="578.0" width="14" height="6.4" rx="2" fill="none" stroke="#e040e8" stroke-width="2"/>
<rect x="387.5" y="591.3" width="13.75" height="6.4" rx="2" fill="none" stroke="#e040e8" stroke-width="2"/>
<rect x="450.5" y="591.3" width="14" height="6.4" rx="2" fill="none" stroke="#e040e8" stroke-width="2"/>
<rect x="387.5" y="604.3" width="13.75" height="6.4" rx="2" fill="none" stroke="#e040e8" stroke-width="2"/>
<rect x="450.5" y="604.3" width="14" height="6.4" rx="2" fill="none" stroke="#e040e8" stroke-width="2"/>
<rect x="395.4" y="564.5" width="7.6" height="7" rx="1.5" fill="none" stroke="#e040e8" stroke-width="2"/>
<rect x="448.7" y="564.5" width="7.6" height="7" rx="1.5" fill="none" stroke="#e040e8" stroke-width="2"/>
<rect x="395.4" y="617.0" width="7.6" height="7" rx="1.5" fill="none" stroke="#e040e8" stroke-width="2"/>
<rect x="448.7" y="617.0" width="7.6" height="7" rx="1.5" fill="none" stroke="#e040e8" stroke-width="2"/>
<rect x="411.8" y="581.0" width="9" height="8" rx="1.5" fill="none" stroke="#e040e8" stroke-width="2"/>
<rect x="431.8" y="581.0" width="9" height="8" rx="1.5" fill="none" stroke="#e040e8" stroke-width="2"/>
<rect x="411.8" y="600.2" width="9" height="8" rx="1.5" fill="none" stroke="#e040e8" stroke-width="2"/>
<rect x="431.8" y="600.2" width="9" height="8" rx="1.5" fill="none" stroke="#e040e8" stroke-width="2"/>
<line x1="425.8" y1="588.0" x2="425.8" y2="594.0" stroke="#ffffff" stroke-width="1.2"/>
<path d="M422.6 595.0L425.8 591.8L428.9 595.0L425.8 598.2Z" fill="#ffffff"/>
</svg>
</div>
<div class="abs" style="left:58px;top:47px;width:2px;height:599px;background:#8cd4f4"></div>

<div class="abs" id="scroll"><div class="abs" style="left:0;top:0;width:26px;height:733px;background:repeating-conic-gradient(#f4f2ee 0 25%,#dcd9d3 0 50%) 0 0/2px 2px"></div>
<div class="abs" style="left:1px;top:1px;width:24px;height:24px;background:#d4d0c8;border-top:1px solid #fff;border-left:1px solid #fff;border-right:1px solid #404040;border-bottom:1px solid #404040"></div>
<svg class="abs" style="left:6px;top:9px" width="14" height="8" viewBox="0 0 14 8"><path d="M1 7L7 1L13 7Z" fill="#000"/></svg>
<div class="abs" style="left:1px;top:495px;width:24px;height:203px;background:#d4d0c8;border-top:1px solid #fff;border-left:1px solid #fff;border-right:1px solid #404040;border-bottom:1px solid #404040"></div></div>
<div class="abs" id="panel"><div class="abs" style="left:0.0px;top:0.0px;width:2.0px;height:733.0px;background:#eeece8"></div>
<div class="abs" style="left:6.0px;top:0.0px;width:189.0px;height:21.0px;background:#dedbd5;border:1px solid #a8a49c;border-radius:2px"></div>
<div class="abs" style="left:7.5px;top:3.0px;white-space:pre;font-size:11.5px;line-height:14px;color:#101010;letter-spacing:-0.2px">Selected</div>
<svg class="abs" style="left:178px;top:5px" width="10" height="10" viewBox="0 0 10 10"><path d="M1 1L9 9M9 1L1 9" stroke="#606060" stroke-width="1.3"/></svg>
<div class="abs" style="left:13.0px;top:29.5px;width:175.0px;height:418.5px;background:#c9e7c9;border-top:2px solid #383838;border-left:2px solid #383838;border-right:1px solid #f4f4f0;border-bottom:1px solid #f4f4f0"></div>
<svg class="abs" style="left:0;top:0" width="196" height="733" viewBox="1187 108 196 733">
<path d="M1213.5 150.5V328.5" stroke="#707870" stroke-width="1" stroke-dasharray="1 1"/>
<path d="M1214 150.8H1227" stroke="#707870" stroke-width="1" stroke-dasharray="1 1"/>
<rect x="1227" y="143.3" width="16" height="15" fill="#fff"/><rect x="1228.5" y="144.8" width="13" height="12" fill="#ff00ff" stroke="#500060" stroke-width="1"/>
<path d="M1214 173.0H1227" stroke="#707870" stroke-width="1" stroke-dasharray="1 1"/>
<rect x="1227" y="165.5" width="16" height="15" fill="#fff"/><rect x="1228.5" y="167.0" width="13" height="12" fill="#ff00ff" stroke="#500060" stroke-width="1"/>
<path d="M1214 195.1H1227" stroke="#707870" stroke-width="1" stroke-dasharray="1 1"/>
<rect x="1227" y="187.6" width="16" height="15" fill="#fff"/><rect x="1228.5" y="189.1" width="13" height="12" fill="#ff00ff" stroke="#500060" stroke-width="1"/>
<path d="M1214 217.2H1227" stroke="#707870" stroke-width="1" stroke-dasharray="1 1"/>
<rect x="1227" y="209.8" width="16" height="15" fill="#fff"/><rect x="1228.5" y="211.2" width="13" height="12" fill="#ff00ff" stroke="#500060" stroke-width="1"/>
<path d="M1214 239.4H1227" stroke="#707870" stroke-width="1" stroke-dasharray="1 1"/>
<rect x="1227" y="231.9" width="16" height="15" fill="#fff"/><rect x="1228.5" y="233.4" width="13" height="12" fill="#ff00ff" stroke="#500060" stroke-width="1"/>
<path d="M1214 261.6H1227" stroke="#707870" stroke-width="1" stroke-dasharray="1 1"/>
<rect x="1227" y="254.1" width="16" height="15" fill="#fff"/><rect x="1228.5" y="255.6" width="13" height="12" fill="#ff00ff" stroke="#500060" stroke-width="1"/>
<path d="M1214 283.7H1227" stroke="#707870" stroke-width="1" stroke-dasharray="1 1"/>
<rect x="1227" y="276.2" width="16" height="15" fill="#fff"/><rect x="1228.5" y="277.7" width="13" height="12" fill="#ff00ff" stroke="#500060" stroke-width="1"/>
<path d="M1214 305.9H1227" stroke="#707870" stroke-width="1" stroke-dasharray="1 1"/>
<rect x="1227" y="298.4" width="16" height="15" fill="#fff"/><rect x="1228.5" y="299.9" width="13" height="12" fill="#ff00ff" stroke="#500060" stroke-width="1"/>
<path d="M1214 328.0H1227" stroke="#707870" stroke-width="1" stroke-dasharray="1 1"/>
<rect x="1227" y="320.5" width="16" height="15" fill="#fff"/><rect x="1228.5" y="322.0" width="13" height="12" fill="#ff00ff" stroke="#500060" stroke-width="1"/>
</svg>
<div class="abs" style="left:60.0px;top:32.3px;white-space:pre;font-size:16.5px;line-height:20px;color:#303a30">Pad 4786</div>
<div class="abs" style="left:60.0px;top:54.5px;white-space:pre;font-size:16.5px;line-height:20px;color:#303a30">Pad 4787</div>
<div class="abs" style="left:60.0px;top:76.6px;white-space:pre;font-size:16.5px;line-height:20px;color:#303a30">Pad 4788</div>
<div class="abs" style="left:60.0px;top:98.8px;white-space:pre;font-size:16.5px;line-height:20px;color:#303a30">Pad 4835</div>
<div class="abs" style="left:60.0px;top:120.9px;white-space:pre;font-size:16.5px;line-height:20px;color:#303a30">Pad 4836</div>
<div class="abs" style="left:60.0px;top:143.1px;white-space:pre;font-size:16.5px;line-height:20px;color:#303a30">Pad 4837</div>
<div class="abs" style="left:60.0px;top:165.2px;white-space:pre;font-size:16.5px;line-height:20px;color:#303a30">Pad 4841</div>
<div class="abs" style="left:60.0px;top:187.4px;white-space:pre;font-size:16.5px;line-height:20px;color:#303a30">Pad 4855</div>
<div class="abs" style="left:60.0px;top:209.5px;white-space:pre;font-size:16.5px;line-height:20px;color:#303a30">Pad 4856</div>
<div class="abs" style="left:46.0px;top:459.0px;width:150.0px;height:32.0px;background:#c9e4c6;border-top:1px solid #b0c0b0"></div>
<div class="abs" style="left:8.0px;top:485.0px;width:38.0px;height:6.0px;background:#c9e4c6"></div>
<div class="abs" style="left:8.5px;top:458.0px;width:37.5px;height:27.0px;background:#d4d0c8;border-left:1px solid #fff;border-right:2px solid #303030;border-bottom:2px solid #303030"></div>
<div class="abs" style="left:12.5px;top:464.0px;white-space:pre;font-size:17px;line-height:20px;color:#000">S...</div>
<div class="abs" style="left:48.0px;top:464.0px;white-space:pre;font-size:17px;line-height:20px;color:#7a8c7a;letter-spacing:-0.5px">Pad</div>
<div class="abs" style="left:83.5px;top:464.0px;white-space:pre;font-size:17px;line-height:20px;color:#7a8c7a">P...</div>
<div class="abs" style="left:119.5px;top:464.0px;white-space:pre;font-size:17px;line-height:20px;color:#7a8c7a">C...</div>
<div class="abs" style="left:156.0px;top:464.0px;white-space:pre;font-size:17px;line-height:20px;color:#7a8c7a">P...</div>
<div class="abs" style="left:81.6px;top:462.0px;width:1.2px;height:22.0px;background:#8a9a8a"></div>
<div class="abs" style="left:117.5px;top:462.0px;width:1.2px;height:22.0px;background:#8a9a8a"></div>
<div class="abs" style="left:154.0px;top:462.0px;width:1.2px;height:22.0px;background:#8a9a8a"></div>
<div class="abs" style="left:190.4px;top:462.0px;width:1.2px;height:22.0px;background:#8a9a8a"></div>
<div class="abs" style="left:6.0px;top:492.0px;width:189.0px;height:22.0px;background:#dedbd5;border:1px solid #a8a49c;border-radius:2px"></div>
<div class="abs" style="left:7.0px;top:496.0px;white-space:pre;font-size:11.5px;line-height:14px;color:#101010;letter-spacing:-0.2px">Navigation</div>
<svg class="abs" style="left:179px;top:498px" width="10" height="10" viewBox="0 0 10 10"><path d="M1 1L9 9M9 1L1 9" stroke="#606060" stroke-width="1.3"/></svg>
<div class="abs" style="left:187.0px;top:520.0px;width:9.0px;height:213.0px;background:#e4e2dc"></div>
<div class="abs" style="left:11.0px;top:520.0px;width:176.0px;height:111.5px;background:#00507a"></div>
<div class="abs" style="left:11.0px;top:631.5px;width:176.0px;height:101.5px;background:#000"></div>
<svg class="abs" style="left:0;top:0" width="196" height="733" viewBox="1187 108 196 733">
<g fill="none" stroke="#50c850" stroke-width="1">
<rect x="1218.7" y="775.4" width="2" height="2" fill="#50c850" stroke="none"/>
<rect x="1225.3" y="776.6" width="1" height="1.5" fill="#50c850" stroke="none"/>
<rect x="1219.3" y="765.5" width="3" height="2" fill="#50c850" stroke="none"/>
<rect x="1235.4" y="773.2" width="1.5" height="1" fill="#50c850" stroke="none"/>
<rect x="1229.8" y="785.8" width="3" height="2" fill="#50c850" stroke="none"/>
<rect x="1212.4" y="782.9" width="1.5" height="2" fill="#50c850" stroke="none"/>
<rect x="1213.2" y="783.0" width="2" height="1.5" fill="#50c850" stroke="none"/>
<rect x="1228.7" y="787.4" width="3" height="2" fill="#50c850" stroke="none"/>
<rect x="1234.1" y="771.7" width="3" height="1" fill="#50c850" stroke="none"/>
<rect x="1236.6" y="761.1" width="1.5" height="1.5" fill="#50c850" stroke="none"/>
<rect x="1218.1" y="788.9" width="3" height="2" fill="#50c850" stroke="none"/>
<rect x="1235.9" y="771.5" width="3" height="2" fill="#50c850" stroke="none"/>
<rect x="1221.8" y="776.7" width="1.5" height="1.5" fill="#50c850" stroke="none"/>
<rect x="1231.1" y="787.7" width="2" height="2" fill="#50c850" stroke="none"/>
<rect x="1230.8" y="763.2" width="2" height="2" fill="#50c850" stroke="none"/>
<rect x="1237.3" y="776.2" width="1.5" height="2" fill="#50c850" stroke="none"/>
<rect x="1235.3" y="776.4" width="2" height="1" fill="#50c850" stroke="none"/>
<rect x="1213.8" y="785.3" width="3" height="1" fill="#50c850" stroke="none"/>
<rect x="1221.6" y="760.1" width="1.5" height="1" fill="#50c850" stroke="none"/>
<rect x="1220.2" y="782.6" width="1" height="1" fill="#50c850" stroke="none"/>
<rect x="1228.9" y="782.4" width="3" height="2" fill="#50c850" stroke="none"/>
<rect x="1228.4" y="775.6" width="2" height="2" fill="#50c850" stroke="none"/>
<rect x="1218.6" y="759.2" width="1" height="1" fill="#50c850" stroke="none"/>
<rect x="1215.0" y="775.1" width="1.5" height="1.5" fill="#50c850" stroke="none"/>
<rect x="1220.2" y="766.4" width="1" height="1.5" fill="#50c850" stroke="none"/>
<rect x="1220.8" y="788.7" width="3" height="1.5" fill="#50c850" stroke="none"/>
<rect x="1224.9" y="774.6" width="1" height="2" fill="#50c850" stroke="none"/>
<rect x="1239.2" y="784.0" width="2" height="1.5" fill="#50c850" stroke="none"/>
<rect x="1229.8" y="780.9" width="2" height="1.5" fill="#50c850" stroke="none"/>
<rect x="1239.4" y="774.7" width="2" height="1" fill="#50c850" stroke="none"/>
<rect x="1234.1" y="789.6" width="2" height="1" fill="#50c850" stroke="none"/>
<rect x="1222.5" y="776.9" width="1.5" height="1" fill="#50c850" stroke="none"/>
<rect x="1229.7" y="768.6" width="2" height="2" fill="#50c850" stroke="none"/>
<rect x="1237.7" y="777.5" width="2" height="2" fill="#50c850" stroke="none"/>
<rect x="1225.7" y="776.9" width="1" height="1.5" fill="#50c850" stroke="none"/>
<rect x="1219.0" y="772.6" width="2" height="1" fill="#50c850" stroke="none"/>
<rect x="1222.2" y="768.0" width="2" height="2" fill="#50c850" stroke="none"/>
<rect x="1219.4" y="783.2" width="1" height="1" fill="#50c850" stroke="none"/>
<rect x="1239.2" y="779.9" width="1.5" height="1.5" fill="#50c850" stroke="none"/>
<rect x="1226.0" y="778.9" width="2" height="1" fill="#50c850" stroke="none"/>
<rect x="1221.2" y="779.7" width="1" height="1" fill="#50c850" stroke="none"/>
<rect x="1228.8" y="788.4" width="1.5" height="1.5" fill="#50c850" stroke="none"/>
<rect x="1234.7" y="788.7" width="1" height="1.5" fill="#50c850" stroke="none"/>
<rect x="1232.8" y="765.0" width="3" height="1.5" fill="#50c850" stroke="none"/>
<rect x="1218.3" y="761.9" width="1.5" height="1.5" fill="#50c850" stroke="none"/>
<rect x="1274.2" y="784.8" width="1.5" height="1.5" fill="#50c850" stroke="none"/>
<rect x="1260.2" y="784.5" width="1" height="2" fill="#50c850" stroke="none"/>
<rect x="1260.4" y="762.2" width="2" height="2" fill="#50c850" stroke="none"/>
<rect x="1273.8" y="766.7" width="2" height="2" fill="#50c850" stroke="none"/>
<rect x="1262.5" y="771.4" width="3" height="1" fill="#50c850" stroke="none"/>
<rect x="1277.6" y="763.0" width="1" height="1.5" fill="#50c850" stroke="none"/>
<rect x="1278.3" y="786.2" width="3" height="2" fill="#50c850" stroke="none"/>
<rect x="1278.5" y="787.7" width="1.5" height="1" fill="#50c850" stroke="none"/>
<rect x="1272.4" y="784.8" width="2" height="2" fill="#50c850" stroke="none"/>
<rect x="1260.2" y="765.3" width="1" height="2" fill="#50c850" stroke="none"/>
<rect x="1279.1" y="761.8" width="1.5" height="1" fill="#50c850" stroke="none"/>
<rect x="1251.1" y="783.7" width="1.5" height="1.5" fill="#50c850" stroke="none"/>
<rect x="1267.3" y="758.4" width="1" height="1" fill="#50c850" stroke="none"/>
<rect x="1265.1" y="765.6" width="1" height="2" fill="#50c850" stroke="none"/>
<rect x="1266.1" y="759.7" width="1" height="1.5" fill="#50c850" stroke="none"/>
<rect x="1253.8" y="789.1" width="3" height="1" fill="#50c850" stroke="none"/>
<rect x="1260.6" y="764.3" width="1" height="1" fill="#50c850" stroke="none"/>
<rect x="1257.2" y="766.8" width="1.5" height="1" fill="#50c850" stroke="none"/>
<rect x="1264.6" y="776.3" width="3" height="1" fill="#50c850" stroke="none"/>
<rect x="1272.7" y="765.9" width="3" height="1" fill="#50c850" stroke="none"/>
<rect x="1264.2" y="782.8" width="1" height="1" fill="#50c850" stroke="none"/>
<rect x="1273.3" y="759.5" width="1" height="1" fill="#50c850" stroke="none"/>
<rect x="1264.5" y="759.1" width="1" height="2" fill="#50c850" stroke="none"/>
<rect x="1265.1" y="768.1" width="2" height="1" fill="#50c850" stroke="none"/>
<rect x="1260.5" y="778.7" width="2" height="1.5" fill="#50c850" stroke="none"/>
<rect x="1257.9" y="789.6" width="3" height="1" fill="#50c850" stroke="none"/>
<rect x="1253.8" y="758.1" width="3" height="1" fill="#50c850" stroke="none"/>
<rect x="1267.0" y="759.4" width="3" height="2" fill="#50c850" stroke="none"/>
<rect x="1269.5" y="775.3" width="1" height="2" fill="#50c850" stroke="none"/>
<rect x="1276.6" y="759.7" width="3" height="2" fill="#50c850" stroke="none"/>
<rect x="1259.4" y="788.4" width="3" height="1.5" fill="#50c850" stroke="none"/>
<rect x="1250.5" y="765.0" width="2" height="2" fill="#50c850" stroke="none"/>
<rect x="1267.7" y="783.7" width="1.5" height="1.5" fill="#50c850" stroke="none"/>
<rect x="1253.9" y="758.9" width="2" height="1.5" fill="#50c850" stroke="none"/>
<rect x="1279.1" y="775.9" width="2" height="1" fill="#50c850" stroke="none"/>
<rect x="1263.9" y="761.9" width="3" height="2" fill="#50c850" stroke="none"/>
<rect x="1253.3" y="768.2" width="1" height="2" fill="#50c850" stroke="none"/>
<rect x="1271.5" y="773.2" width="1.5" height="1.5" fill="#50c850" stroke="none"/>
<rect x="1251.3" y="760.9" width="1" height="2" fill="#50c850" stroke="none"/>
<rect x="1276.4" y="763.7" width="1" height="1.5" fill="#50c850" stroke="none"/>
<rect x="1275.2" y="761.9" width="1" height="2" fill="#50c850" stroke="none"/>
<rect x="1264.5" y="780.3" width="2" height="2" fill="#50c850" stroke="none"/>
<rect x="1259.0" y="760.8" width="1.5" height="1" fill="#50c850" stroke="none"/>
<rect x="1266.6" y="761.2" width="1" height="2" fill="#50c850" stroke="none"/>
<rect x="1259.7" y="776.0" width="1" height="1" fill="#50c850" stroke="none"/>
<rect x="1244.9" y="824.0" width="3" height="2" fill="#50c850" stroke="none"/>
<rect x="1234.5" y="829.0" width="2" height="1.5" fill="#50c850" stroke="none"/>
<rect x="1231.0" y="829.0" width="3" height="1" fill="#50c850" stroke="none"/>
<rect x="1223.1" y="817.0" width="3" height="2" fill="#50c850" stroke="none"/>
<rect x="1243.8" y="820.1" width="3" height="1" fill="#50c850" stroke="none"/>
<rect x="1232.5" y="828.3" width="1.5" height="1" fill="#50c850" stroke="none"/>
<rect x="1213.4" y="825.7" width="3" height="2" fill="#50c850" stroke="none"/>
<rect x="1235.2" y="816.2" width="2" height="1" fill="#50c850" stroke="none"/>
<rect x="1215.1" y="821.8" width="1.5" height="2" fill="#50c850" stroke="none"/>
<rect x="1228.8" y="826.3" width="3" height="2" fill="#50c850" stroke="none"/>
<rect x="1239.9" y="822.9" width="2" height="1" fill="#50c850" stroke="none"/>
<rect x="1220.8" y="817.6" width="3" height="1" fill="#50c850" stroke="none"/>
<rect x="1216.0" y="819.1" width="2" height="1.5" fill="#50c850" stroke="none"/>
<rect x="1237.1" y="815.4" width="3" height="2" fill="#50c850" stroke="none"/>
<rect x="1231.0" y="821.0" width="1" height="1.5" fill="#50c850" stroke="none"/>
<rect x="1244.7" y="814.2" width="3" height="2" fill="#50c850" stroke="none"/>
<rect x="1240.9" y="813.8" width="1.5" height="1" fill="#50c850" stroke="none"/>
<rect x="1232.7" y="826.2" width="1" height="1" fill="#50c850" stroke="none"/>
<rect x="1239.9" y="817.1" width="1.5" height="1.5" fill="#50c850" stroke="none"/>
<rect x="1214.8" y="823.6" width="1" height="1.5" fill="#50c850" stroke="none"/>
<rect x="1215.9" y="813.8" width="1.5" height="1.5" fill="#50c850" stroke="none"/>
<rect x="1213.2" y="826.6" width="1" height="1" fill="#50c850" stroke="none"/>
<rect x="1219.2" y="828.5" width="1" height="1.5" fill="#50c850" stroke="none"/>
<rect x="1225.8" y="825.5" width="2" height="1" fill="#50c850" stroke="none"/>
<rect x="1211.0" y="818.6" width="3" height="1.5" fill="#50c850" stroke="none"/>
<rect x="1212.7" y="824.0" width="3" height="1.5" fill="#50c850" stroke="none"/>
<rect x="1214.4" y="818.4" width="2" height="1" fill="#50c850" stroke="none"/>
<rect x="1233.3" y="814.9" width="2" height="1" fill="#50c850" stroke="none"/>
<rect x="1228.5" y="824.9" width="2" height="1.5" fill="#50c850" stroke="none"/>
<rect x="1220.3" y="824.5" width="2" height="1" fill="#50c850" stroke="none"/>
<rect x="1236.4" y="829.3" width="1" height="2" fill="#50c850" stroke="none"/>
<rect x="1227.3" y="819.0" width="2" height="2" fill="#50c850" stroke="none"/>
<rect x="1235.5" y="825.6" width="1.5" height="1" fill="#50c850" stroke="none"/>
<rect x="1223.0" y="828.6" width="3" height="1" fill="#50c850" stroke="none"/>
<rect x="1213.8" y="822.5" width="2" height="2" fill="#50c850" stroke="none"/>
<rect x="1235.2" y="823.2" width="2" height="2" fill="#50c850" stroke="none"/>
<rect x="1216.5" y="821.2" width="1.5" height="2" fill="#50c850" stroke="none"/>
<rect x="1212.4" y="825.2" width="3" height="1.5" fill="#50c850" stroke="none"/>
<rect x="1213.5" y="817.6" width="1" height="1" fill="#50c850" stroke="none"/>
<rect x="1211.5" y="821.6" width="1.5" height="2" fill="#50c850" stroke="none"/>
<rect x="1236.9" y="819.0" width="2" height="1.5" fill="#50c850" stroke="none"/>
<rect x="1225.7" y="826.8" width="1" height="1.5" fill="#50c850" stroke="none"/>
<rect x="1227.4" y="829.9" width="1.5" height="1.5" fill="#50c850" stroke="none"/>
<rect x="1230.7" y="824.6" width="1" height="1" fill="#50c850" stroke="none"/>
<rect x="1234.4" y="822.6" width="3" height="2" fill="#50c850" stroke="none"/>
<rect x="1254.1" y="823.3" width="3" height="1" fill="#50c850" stroke="none"/>
<rect x="1267.4" y="815.9" width="1.5" height="1" fill="#50c850" stroke="none"/>
<rect x="1277.8" y="819.3" width="2" height="1" fill="#50c850" stroke="none"/>
<rect x="1277.0" y="820.6" width="3" height="1.5" fill="#50c850" stroke="none"/>
<rect x="1260.1" y="828.4" width="2" height="2" fill="#50c850" stroke="none"/>
<rect x="1265.9" y="822.0" width="2" height="2" fill="#50c850" stroke="none"/>
<rect x="1265.5" y="823.2" width="1" height="1" fill="#50c850" stroke="none"/>
<rect x="1274.7" y="824.3" width="3" height="1" fill="#50c850" stroke="none"/>
<rect x="1266.8" y="820.8" width="1.5" height="2" fill="#50c850" stroke="none"/>
<rect x="1256.8" y="826.8" width="3" height="1" fill="#50c850" stroke="none"/>
<rect x="1268.1" y="829.3" width="1.5" height="1" fill="#50c850" stroke="none"/>
<rect x="1265.0" y="814.5" width="1" height="1" fill="#50c850" stroke="none"/>
<rect x="1261.5" y="817.0" width="1" height="1.5" fill="#50c850" stroke="none"/>
<rect x="1267.2" y="828.8" width="2" height="1.5" fill="#50c850" stroke="none"/>
<rect x="1277.9" y="824.8" width="1.5" height="1" fill="#50c850" stroke="none"/>
<rect x="1277.5" y="823.2" width="1" height="2" fill="#50c850" stroke="none"/>
<rect x="1252.6" y="829.9" width="1.5" height="1" fill="#50c850" stroke="none"/>
<rect x="1277.6" y="820.4" width="1.5" height="1.5" fill="#50c850" stroke="none"/>
<rect x="1260.1" y="826.4" width="3" height="1" fill="#50c850" stroke="none"/>
<rect x="1277.0" y="825.0" width="3" height="1.5" fill="#50c850" stroke="none"/>
<rect x="1265.1" y="814.2" width="3" height="1" fill="#50c850" stroke="none"/>
<rect x="1270.8" y="818.2" width="3" height="1.5" fill="#50c850" stroke="none"/>
<rect x="1274.2" y="819.8" width="1.5" height="1.5" fill="#50c850" stroke="none"/>
<rect x="1278.8" y="825.2" width="2" height="1.5" fill="#50c850" stroke="none"/>
<rect x="1264.3" y="819.1" width="3" height="1" fill="#50c850" stroke="none"/>
<rect x="1281.0" y="826.7" width="2" height="1.5" fill="#50c850" stroke="none"/>
<rect x="1254.6" y="820.8" width="1.5" height="1" fill="#50c850" stroke="none"/>
<rect x="1256.7" y="815.9" width="3" height="2" fill="#50c850" stroke="none"/>
<rect x="1255.4" y="813.5" width="1" height="2" fill="#50c850" stroke="none"/>
<rect x="1255.4" y="821.3" width="1" height="1" fill="#50c850" stroke="none"/>
<rect x="1262.9" y="818.4" width="1" height="2" fill="#50c850" stroke="none"/>
<rect x="1272.8" y="817.1" width="1" height="1.5" fill="#50c850" stroke="none"/>
<rect x="1265.8" y="828.5" width="1.5" height="1" fill="#50c850" stroke="none"/>
<rect x="1253.0" y="821.1" width="1.5" height="1.5" fill="#50c850" stroke="none"/>
<rect x="1269.9" y="818.9" width="1" height="2" fill="#50c850" stroke="none"/>
<rect x="1251.7" y="825.4" width="2" height="1.5" fill="#50c850" stroke="none"/>
<rect x="1275.3" y="829.3" width="3" height="1" fill="#50c850" stroke="none"/>
<rect x="1268.0" y="813.5" width="2" height="2" fill="#50c850" stroke="none"/>
<rect x="1281.8" y="818.4" width="1" height="2" fill="#50c850" stroke="none"/>
<rect x="1263.9" y="814.5" width="1" height="1" fill="#50c850" stroke="none"/>
<rect x="1251.0" y="814.5" width="1.5" height="2" fill="#50c850" stroke="none"/>
<rect x="1251.2" y="813.9" width="2" height="1" fill="#50c850" stroke="none"/>
<rect x="1278.8" y="825.9" width="2" height="1.5" fill="#50c850" stroke="none"/>
<rect x="1279.4" y="829.0" width="1" height="1.5" fill="#50c850" stroke="none"/>
<rect x="1259.8" y="823.3" width="3" height="1" fill="#50c850" stroke="none"/>
<rect x="1276.3" y="804.1" width="3" height="1" fill="#50c850" stroke="none"/>
<rect x="1245.5" y="806.3" width="3" height="1" fill="#50c850" stroke="none"/>
<rect x="1268.6" y="808.2" width="3" height="2" fill="#50c850" stroke="none"/>
<rect x="1235.1" y="804.1" width="3" height="1.5" fill="#50c850" stroke="none"/>
<rect x="1226.1" y="807.7" width="3" height="1.5" fill="#50c850" stroke="none"/>
<rect x="1228.9" y="804.0" width="3" height="1.5" fill="#50c850" stroke="none"/>
<rect x="1213.0" y="804.0" width="1" height="1.5" fill="#50c850" stroke="none"/>
<rect x="1216.4" y="807.2" width="1" height="1.5" fill="#50c850" stroke="none"/>
<rect x="1298.4" y="821.2" width="1" height="2" fill="#50c850" stroke="none"/>
<rect x="1318.0" y="811.8" width="2" height="1.5" fill="#50c850" stroke="none"/>
<rect x="1291.1" y="805.7" width="1" height="1.5" fill="#50c850" stroke="none"/>
<rect x="1308.6" y="803.6" width="1" height="2" fill="#50c850" stroke="none"/>
<rect x="1297.5" y="817.5" width="1.5" height="2" fill="#50c850" stroke="none"/>
<rect x="1295.4" y="824.6" width="1" height="1" fill="#50c850" stroke="none"/>
<rect x="1299.9" y="806.0" width="3" height="2" fill="#50c850" stroke="none"/>
<rect x="1315.2" y="815.5" width="1.5" height="1.5" fill="#50c850" stroke="none"/>
<rect x="1296.5" y="802.9" width="1" height="2" fill="#50c850" stroke="none"/>
<rect x="1291.7" y="824.2" width="1.5" height="1.5" fill="#50c850" stroke="none"/>
<rect x="1293.7" y="812.2" width="1.5" height="2" fill="#50c850" stroke="none"/>
<rect x="1310.1" y="816.4" width="2" height="1.5" fill="#50c850" stroke="none"/>
<rect x="1309.7" y="811.7" width="1" height="1.5" fill="#50c850" stroke="none"/>
<rect x="1316.9" y="815.3" width="3" height="1" fill="#50c850" stroke="none"/>
<rect x="1294.6" y="801.2" width="2" height="2" fill="#50c850" stroke="none"/>
<rect x="1310.9" y="809.2" width="1.5" height="1.5" fill="#50c850" stroke="none"/>
<rect x="1314.4" y="823.2" width="2" height="1.5" fill="#50c850" stroke="none"/>
<rect x="1315.3" y="802.6" width="1.5" height="1" fill="#50c850" stroke="none"/>
<rect x="1301.9" y="824.9" width="2" height="1" fill="#50c850" stroke="none"/>
<rect x="1304.4" y="803.0" width="1.5" height="1.5" fill="#50c850" stroke="none"/>
<rect x="1296.1" y="823.3" width="1.5" height="2" fill="#50c850" stroke="none"/>
<rect x="1310.0" y="823.4" width="3" height="1.5" fill="#50c850" stroke="none"/>
<rect x="1320.4" y="822.7" width="3" height="1.5" fill="#50c850" stroke="none"/>
<rect x="1318.7" y="824.6" width="3" height="2" fill="#50c850" stroke="none"/>
<rect x="1319.5" y="808.0" width="1" height="1" fill="#50c850" stroke="none"/>
<rect x="1318.7" y="801.7" width="1.5" height="1.5" fill="#50c850" stroke="none"/>
<rect x="1306.6" y="802.5" width="3" height="1" fill="#50c850" stroke="none"/>
<rect x="1297.0" y="806.0" width="3" height="1.5" fill="#50c850" stroke="none"/>
<rect x="1292.2" y="812.2" width="1.5" height="2" fill="#50c850" stroke="none"/>
<rect x="1315.2" y="804.4" width="3" height="1.5" fill="#50c850" stroke="none"/>
<rect x="1319.2" y="811.7" width="1.5" height="1" fill="#50c850" stroke="none"/>
<rect x="1306.1" y="820.4" width="2" height="1.5" fill="#50c850" stroke="none"/>
<rect x="1321.4" y="822.0" width="2" height="1" fill="#50c850" stroke="none"/>
<rect x="1304.4" y="823.6" width="3" height="2" fill="#50c850" stroke="none"/>
<rect x="1322.0" y="806.3" width="2" height="1.5" fill="#50c850" stroke="none"/>
<rect x="1291.9" y="810.0" width="2" height="1.5" fill="#50c850" stroke="none"/>
<rect x="1314.2" y="823.3" width="1" height="1" fill="#50c850" stroke="none"/>
<rect x="1295.1" y="813.7" width="1" height="1" fill="#50c850" stroke="none"/>
<rect x="1320.5" y="801.0" width="3" height="1.5" fill="#50c850" stroke="none"/>
<rect x="1321.4" y="819.9" width="1" height="1.5" fill="#50c850" stroke="none"/>
<rect x="1296.7" y="801.3" width="3" height="1.5" fill="#50c850" stroke="none"/>
<rect x="1316.9" y="815.5" width="1" height="1.5" fill="#50c850" stroke="none"/>
<rect x="1300.7" y="806.9" width="3" height="1.5" fill="#50c850" stroke="none"/>
<rect x="1313.4" y="809.1" width="1" height="1.5" fill="#50c850" stroke="none"/>
<rect x="1292.2" y="824.9" width="1.5" height="2" fill="#50c850" stroke="none"/>
<rect x="1298.7" y="804.3" width="3" height="2" fill="#50c850" stroke="none"/>
<rect x="1314.3" y="809.1" width="1.5" height="1.5" fill="#50c850" stroke="none"/>
<rect x="1291.5" y="802.1" width="3" height="2" fill="#50c850" stroke="none"/>
<rect x="1292.9" y="820.6" width="3" height="1.5" fill="#50c850" stroke="none"/>
<rect x="1307.2" y="819.1" width="3" height="1.5" fill="#50c850" stroke="none"/>
<rect x="1347.1" y="805.1" width="1.5" height="1" fill="#50c850" stroke="none"/>
<rect x="1352.6" y="824.8" width="1" height="1.5" fill="#50c850" stroke="none"/>
<rect x="1355.5" y="811.7" width="2" height="1.5" fill="#50c850" stroke="none"/>
<rect x="1344.9" y="824.0" width="1.5" height="2" fill="#50c850" stroke="none"/>
<rect x="1340.4" y="813.5" width="3" height="1.5" fill="#50c850" stroke="none"/>
<rect x="1358.1" y="820.9" width="2" height="1" fill="#50c850" stroke="none"/>
<rect x="1340.4" y="815.3" width="1" height="1.5" fill="#50c850" stroke="none"/>
<rect x="1334.1" y="819.9" width="2" height="1" fill="#50c850" stroke="none"/>
<rect x="1344.4" y="802.8" width="1" height="2" fill="#50c850" stroke="none"/>
<rect x="1346.1" y="819.1" width="3" height="1" fill="#50c850" stroke="none"/>
<rect x="1340.3" y="809.3" width="3" height="1.5" fill="#50c850" stroke="none"/>
<rect x="1340.4" y="807.5" width="1" height="1.5" fill="#50c850" stroke="none"/>
<rect x="1340.5" y="810.4" width="2" height="1" fill="#50c850" stroke="none"/>
<rect x="1334.3" y="807.0" width="1" height="1.5" fill="#50c850" stroke="none"/>
<rect x="1337.6" y="805.8" width="1" height="2" fill="#50c850" stroke="none"/>
<rect x="1347.4" y="818.8" width="1" height="2" fill="#50c850" stroke="none"/>
<rect x="1357.7" y="822.1" width="2" height="2" fill="#50c850" stroke="none"/>
<rect x="1332.3" y="807.4" width="3" height="1.5" fill="#50c850" stroke="none"/>
<rect x="1338.8" y="814.1" width="1" height="1" fill="#50c850" stroke="none"/>
<rect x="1337.8" y="824.0" width="1.5" height="1" fill="#50c850" stroke="none"/>
<rect x="1359.9" y="805.3" width="3" height="2" fill="#50c850" stroke="none"/>
<rect x="1343.1" y="801.2" width="3" height="1" fill="#50c850" stroke="none"/>
<rect x="1335.9" y="816.0" width="2" height="1" fill="#50c850" stroke="none"/>
<rect x="1351.4" y="804.1" width="1.5" height="1" fill="#50c850" stroke="none"/>
<rect x="1347.3" y="804.6" width="1.5" height="1.5" fill="#50c850" stroke="none"/>
<rect x="1355.7" y="811.4" width="1.5" height="1" fill="#50c850" stroke="none"/>
<rect x="1339.3" y="804.2" width="1.5" height="1.5" fill="#50c850" stroke="none"/>
<rect x="1334.2" y="809.5" width="1" height="1" fill="#50c850" stroke="none"/>
<rect x="1330.2" y="809.9" width="1.5" height="1.5" fill="#50c850" stroke="none"/>
<rect x="1338.1" y="809.5" width="3" height="1" fill="#50c850" stroke="none"/>
<rect x="1353.2" y="808.5" width="1" height="2" fill="#50c850" stroke="none"/>
<rect x="1341.4" y="819.0" width="3" height="2" fill="#50c850" stroke="none"/>
<rect x="1343.4" y="813.9" width="2" height="1.5" fill="#50c850" stroke="none"/>
<rect x="1334.9" y="811.9" width="3" height="1" fill="#50c850" stroke="none"/>
<rect x="1355.0" y="808.1" width="1.5" height="1.5" fill="#50c850" stroke="none"/>
<rect x="1361.8" y="821.2" width="1.5" height="1.5" fill="#50c850" stroke="none"/>
<rect x="1338.8" y="805.9" width="1" height="2" fill="#50c850" stroke="none"/>
<rect x="1362.3" y="810.8" width="1.5" height="1" fill="#50c850" stroke="none"/>
<rect x="1348.9" y="804.8" width="1" height="1.5" fill="#50c850" stroke="none"/>
<rect x="1362.7" y="817.5" width="2" height="1" fill="#50c850" stroke="none"/>
<rect x="1345.3" y="814.9" width="2" height="1" fill="#50c850" stroke="none"/>
<rect x="1349.5" y="806.2" width="3" height="2" fill="#50c850" stroke="none"/>
<rect x="1348.6" y="816.3" width="2" height="2" fill="#50c850" stroke="none"/>
<rect x="1349.8" y="824.5" width="2" height="2" fill="#50c850" stroke="none"/>
<rect x="1357.6" y="807.9" width="2" height="1.5" fill="#50c850" stroke="none"/>
<rect x="1336.0" y="815.4" width="1.5" height="2" fill="#50c850" stroke="none"/>
<rect x="1362.8" y="818.5" width="1.5" height="1.5" fill="#50c850" stroke="none"/>
<rect x="1344.3" y="807.4" width="1.5" height="1.5" fill="#50c850" stroke="none"/>
<rect x="1341.0" y="819.9" width="1.5" height="2" fill="#50c850" stroke="none"/>
<rect x="1347.4" y="811.6" width="1" height="1" fill="#50c850" stroke="none"/>
<circle cx="1214" cy="781" r="3"/><circle cx="1253" cy="781" r="3"/><circle cx="1345" cy="826" r="3"/>
</g>
<rect x="1281" y="804.5" width="36.5" height="28" fill="rgba(200,200,230,0.3)" stroke="#c8c8d8" stroke-width="1.2"/>
</svg></div>

<div class="abs ctx">
 <div class="ci" style="top:10px"><u>E</u>dge Detection...</div>
 <div class="ci" style="top:35px"><u>S</u>ave Angle</div>
 <div class="ci" style="top:60px"><u>A</u>dd Component...</div>
 <div class="ci" style="top:85px"><u>T</u>olerance</div>
 <div class="abs" style="left:3px;top:106px;width:215px;height:1px;background:#808080"></div>
 <div class="abs" style="left:3px;top:107px;width:215px;height:1px;background:#fff"></div>
 <div class="abs" style="left:3px;top:113px;width:217px;height:25px;background:#0a246a"></div>
 <div class="ci" style="top:121px;color:#fff"><u>D</u>elete</div>
</div>

<svg class="abs" style="left:0;top:0" width="1440" height="1080" viewBox="0 0 1440 1080">
 <path d="M562.6 765.0L616.1 787.4L624.9 769.0L641.9 784.6L668.7 755.8L666.3 781.7L696.8 778.4L684.7 792.7L717.0 796.5L690.4 808.7L722.6 823.3L686.0 820.2L694.5 847.7L665.8 828.1L658.9 854.1L639.3 831.0L625.8 865.2L618.7 833.2L599.2 844.4L604.1 825.4L561.7 829.9L591.5 814.5L563.6 798.9L598.5 794.1Z" fill="none" stroke="#ff0000" stroke-width="3.8" stroke-linejoin="miter"/>
</svg>

<div class="abs" id="redbox"></div>
</body></html>
